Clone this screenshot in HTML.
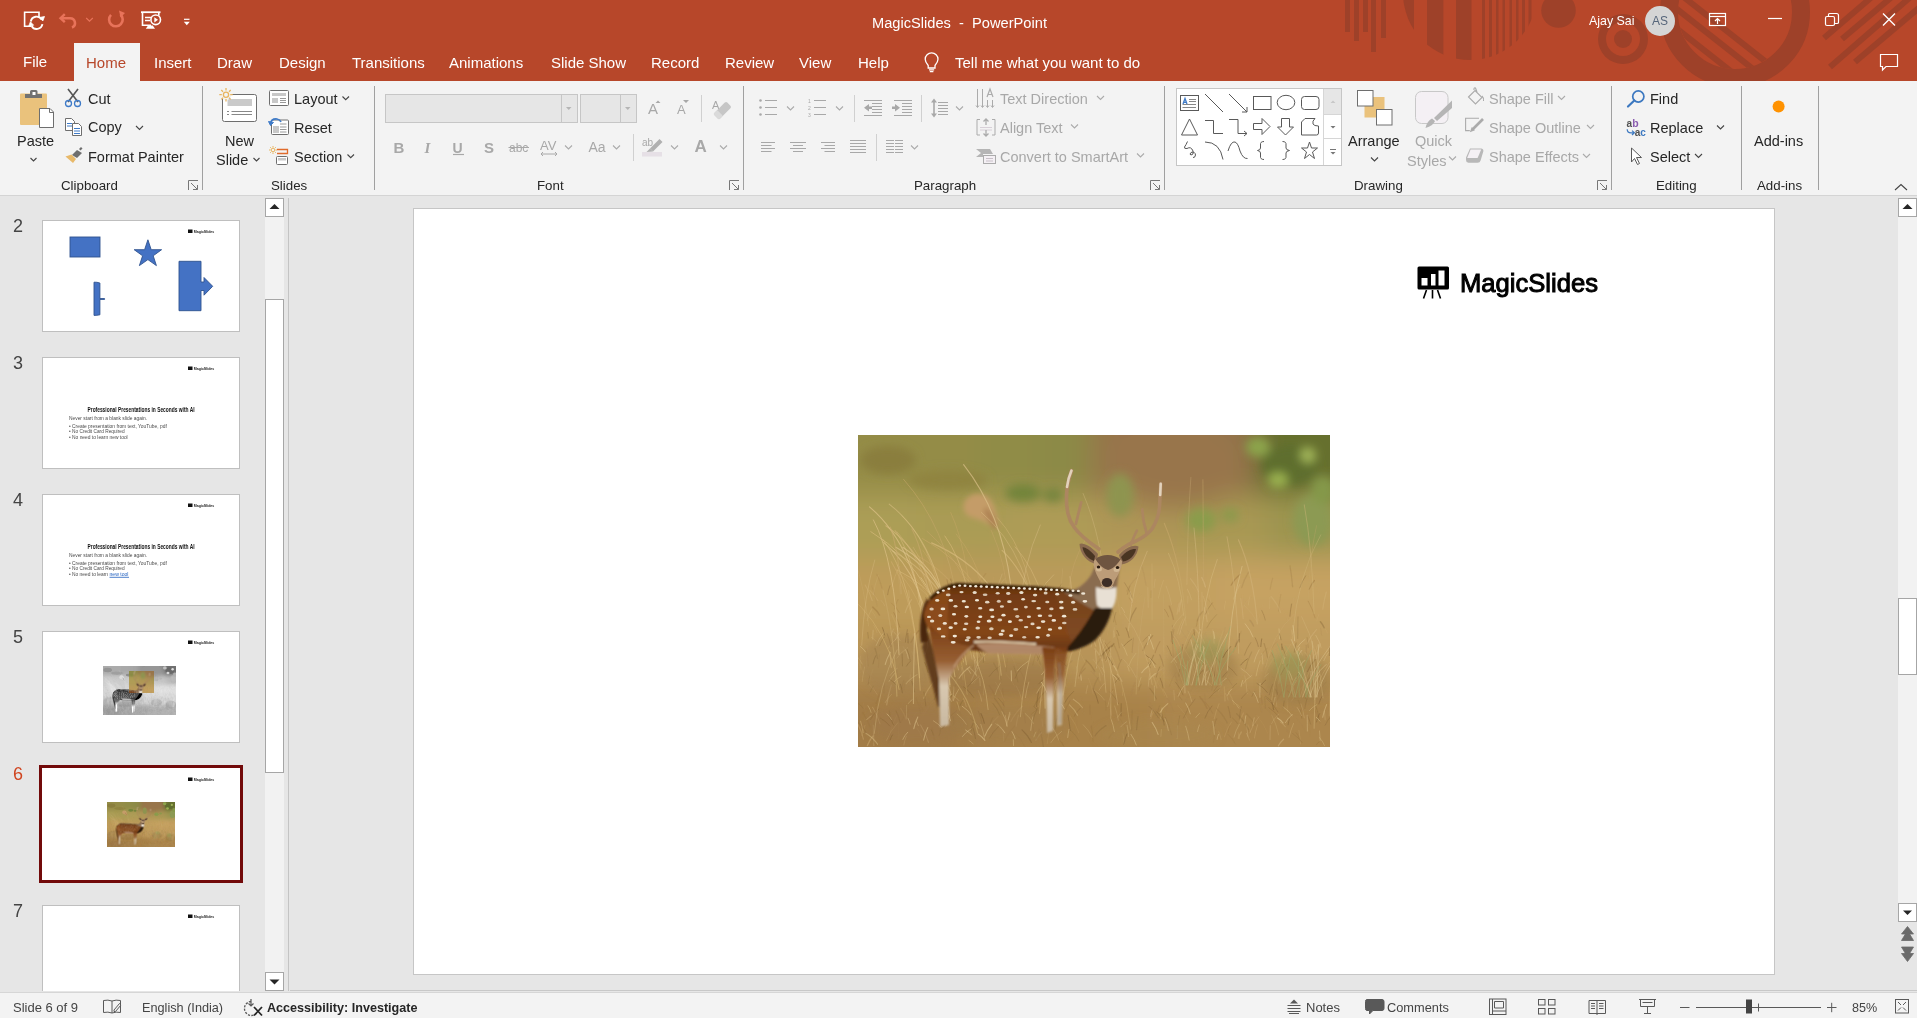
<!DOCTYPE html>
<html><head><meta charset="utf-8">
<style>
*{margin:0;padding:0;box-sizing:border-box}
html,body{width:1917px;height:1018px;overflow:hidden;background:#E6E6E6;font-family:"Liberation Sans",sans-serif;color:#262626}
.a{position:absolute;white-space:nowrap;will-change:transform}
svg.a{overflow:visible}
.t{font-size:15px;line-height:18px}
.w{color:#fff}
.dis{color:#A6A6A6}
.r{font-size:14.5px;line-height:18px;color:#262626}
.l{font-size:13.3px;line-height:16px;color:#262626}
.g{color:#A8A8A8}
</style></head><body>

<!-- TITLE BAR -->
<div class="a" style="left:0;top:0;width:1917px;height:81px;background:#B7472A"></div>
<svg class="a" style="left:0;top:0" width="1917" height="81" viewBox="0 0 1917 81">
 <defs><clipPath id="tb"><rect x="0" y="0" width="1917" height="81"/></clipPath>
 <clipPath id="circA"><circle cx="1470" cy="-7" r="67"/></clipPath>
 <clipPath id="bigin"><circle cx="1735" cy="12" r="57"/></clipPath></defs>
 <g clip-path="url(#tb)" fill="#9E4129">
  <rect x="1345" y="0" width="5" height="32"/>
  <rect x="1354" y="0" width="5" height="41"/>
  <rect x="1363" y="0" width="5" height="32"/>
  <rect x="1371" y="0" width="5" height="52"/>
  <rect x="1381" y="0" width="5" height="38"/>
  <g clip-path="url(#circA)">
   <rect x="1402" y="0" width="12.0" height="70"/>
   <rect x="1427" y="0" width="16.4" height="70"/>
   <rect x="1456" y="0" width="15.5" height="70"/>
   <rect x="1482" y="0" width="3.0" height="70"/>
   <rect x="1489" y="0" width="3.0" height="70"/>
   <rect x="1496" y="0" width="2.5" height="70"/>
   <rect x="1502.5" y="0" width="2.5" height="70"/>
   <rect x="1509.5" y="0" width="2.5" height="70"/>
   <rect x="1516" y="0" width="2.5" height="70"/>
   <rect x="1522" y="0" width="3.0" height="70"/>
   <rect x="1528.5" y="0" width="3.0" height="70"/>
  </g>
  <circle cx="1558.5" cy="10.5" r="17.3"/>
  <circle cx="1623" cy="39" r="25"/>
  <circle cx="1623" cy="39" r="17" fill="#B7472A"/>
  <circle cx="1623" cy="39" r="9"/>
  <circle cx="1735" cy="12" r="66" fill="none" stroke="#9E4129" stroke-width="18"/>
  <g clip-path="url(#bigin)" stroke="#9E4129" stroke-width="6">
   <line x1="1662" y1="-20" x2="1789" y2="80"/>
   <line x1="1640" y1="-20" x2="1767" y2="80"/>
   <line x1="1615" y1="-20" x2="1742" y2="80"/>
  </g>
  <g stroke="#9E4129" stroke-width="6">
   <line x1="1824" y1="38" x2="1880" y2="-10"/>
   <line x1="1842" y1="39" x2="1900" y2="-10"/>
   <line x1="1830" y1="67" x2="1930" y2="-20"/>
   <line x1="1855" y1="62" x2="1940" y2="-10"/>
  </g>
 </g>
</svg>

<!-- QAT -->
<svg class="a" style="left:0;top:0" width="200" height="40" viewBox="0 0 200 40" fill="none" stroke="#fff" stroke-width="1.6">
 <path d="M31 26.2 H24.6 V12.2 H39 V17"/>
 <g stroke-width="1.9">
  <path d="M30.8 21.5 A5.8 5.8 0 0 1 41.6 19.6"/><path d="M42.4 24.2 A5.8 5.8 0 0 1 31.6 26"/>
 </g>
 <path d="M39.5 17.5 L42.8 21 L44.5 16.5Z" fill="#fff" stroke-width="0.8"/>
 <path d="M33.6 25.2 L30.4 21.8 L28.6 26.4Z" fill="#fff" stroke-width="0.8"/>
 <g stroke="#E8735A" stroke-width="2.6">
  <path d="M61.5 18.2 H70 A4.9 4.9 0 0 1 72 27.6"/>
  <path d="M64.8 14.2 L60.5 18.2 L64.8 22.2" stroke-width="2.4"/>
  <path d="M86.2 18 L89.5 21.2 L92.8 18" stroke-width="1.1"/>
  <path d="M120.5 14.5 A6.8 6.8 0 1 1 111 14.8"/>
 </g>
 <path d="M119 10.5 L125 13 L120.5 17.5Z" fill="#E8735A" stroke="none"/>
 <path d="M141 12.2 H160.5" stroke-width="1.8"/>
 <path d="M142.5 12.5 V25.2 H151 M158.8 12.5 V15.5"/>
 <path d="M145 17.5 H151 M145 20.5 H150"/>
 <circle cx="155.7" cy="19.8" r="4.8"/>
 <path d="M154.3 17.2 L158 19.8 L154.3 22.4Z" fill="#fff" stroke="none"/>
 <path d="M148 25.5 L145.8 28.8 H155 L152.8 25.5Z" fill="#fff" stroke="none"/>
 <path d="M184 19.3 H189.5" stroke-width="1.2"/>
 <path d="M183.8 21.8 H189.8 L186.8 25.3Z" fill="#fff" stroke="none"/>
</svg>
<div class="a w" style="left:871.5px;top:13.6px;font-size:14.65px;line-height:18px">MagicSlides&nbsp; -&nbsp; PowerPoint</div>
<div class="a w" style="left:1589px;top:13px;font-size:12.4px;line-height:16px">Ajay Sai</div>
<div class="a" style="left:1645px;top:6px;width:30px;height:30px;border-radius:50%;background:#D5D5D5;color:#56657A;font-size:12px;line-height:30px;text-align:center">AS</div>
<svg class="a" style="left:1700px;top:0" width="217" height="81" viewBox="1700 0 217 81" fill="none" stroke="#fff" stroke-width="1.2">
 <rect x="1709.5" y="13.5" width="16" height="12"/><path d="M1709.5 16.5 H1725.5"/>
 <path d="M1717.5 24 V19 M1715 21 L1717.5 18.5 L1720 21"/>
 <path d="M1768 18.5 H1782"/>
 <rect x="1825.5" y="16.5" width="9" height="9" rx="1.5"/><path d="M1828.5 16.5 V14.5 Q1828.5 13.5 1829.5 13.5 H1836.5 Q1838.5 13.5 1838.5 15.5 V22.5 Q1838.5 23.5 1837 23.5 H1834.5"/>
 <path d="M1883 13.5 L1895 25.5 M1895 13.5 L1883 25.5" stroke-width="1.4"/>
 <path d="M1880.5 54.5 H1897.5 V66.5 H1886 L1882.5 70 V66.5 H1880.5Z"/>
</svg>

<!-- TABS -->
<div class="a" style="left:74px;top:43px;width:66px;height:38px;background:#F3F3F3"></div>
<div class="a t w" style="left:23px;top:53px">File</div>
<div class="a t" style="left:86px;top:54px;color:#B7472A">Home</div>
<div class="a t w" style="left:154px;top:54px">Insert</div>
<div class="a t w" style="left:217px;top:54px">Draw</div>
<div class="a t w" style="left:279px;top:54px">Design</div>
<div class="a t w" style="left:352px;top:54px">Transitions</div>
<div class="a t w" style="left:449px;top:54px">Animations</div>
<div class="a t w" style="left:551px;top:54px">Slide Show</div>
<div class="a t w" style="left:651px;top:54px">Record</div>
<div class="a t w" style="left:725px;top:54px">Review</div>
<div class="a t w" style="left:799px;top:54px">View</div>
<div class="a t w" style="left:858px;top:54px">Help</div>
<svg class="a" style="left:920px;top:50px" width="24" height="26" viewBox="0 0 24 26" fill="none" stroke="#fff" stroke-width="1.3">
 <path d="M8.2 15.5 Q5.2 12 5.2 9.3 A6.4 6.4 0 0 1 18 9.3 Q18 12 15 15.5 V18 H8.2Z"/><path d="M9 19.8 H14.2 M9.8 21.6 H13.4"/>
</svg>
<div class="a t w" style="left:955px;top:54px">Tell me what you want to do</div>

<!-- RIBBON -->
<div class="a" style="left:0;top:81px;width:1917px;height:114px;background:#F3F3F3"></div>
<div class="a" style="left:0;top:195px;width:1917px;height:1px;background:#D4D4D4"></div>

<!-- RIBBON TEXT -->
<div class="a r" style="left:17.4px;top:131.8px">Paste</div>
<div class="a r" style="left:88.3px;top:90px">Cut</div>
<div class="a r" style="left:88.3px;top:118.4px">Copy</div>
<div class="a r" style="left:88.3px;top:148px">Format Painter</div>
<div class="a l" style="left:61.4px;top:178.2px">Clipboard</div>
<div class="a r" style="left:224.7px;top:131.7px">New</div>
<div class="a r" style="left:215.6px;top:151.4px">Slide</div>
<div class="a r" style="left:293.6px;top:90px">Layout</div>
<div class="a r" style="left:293.6px;top:119px">Reset</div>
<div class="a r" style="left:293.6px;top:148px">Section</div>
<div class="a l" style="left:271.3px;top:178.2px">Slides</div>
<div class="a l" style="left:536.5px;top:178.2px">Font</div>
<div class="a l" style="left:913.6px;top:178.2px">Paragraph</div>
<div class="a r g" style="left:1000.3px;top:90px">Text Direction</div>
<div class="a r g" style="left:1000.3px;top:119px">Align Text</div>
<div class="a r g" style="left:1000.3px;top:148px">Convert to SmartArt</div>
<div class="a r" style="left:1348.3px;top:132.3px">Arrange</div>
<div class="a r g" style="left:1414.5px;top:132.4px">Quick</div>
<div class="a r g" style="left:1406.5px;top:152px">Styles</div>
<div class="a r g" style="left:1489.3px;top:90px">Shape Fill</div>
<div class="a r g" style="left:1489.3px;top:119px">Shape Outline</div>
<div class="a r g" style="left:1489.3px;top:148px">Shape Effects</div>
<div class="a l" style="left:1354px;top:178.2px">Drawing</div>
<div class="a r" style="left:1650.4px;top:89.6px">Find</div>
<div class="a r" style="left:1650.4px;top:119.2px">Replace</div>
<div class="a r" style="left:1650.4px;top:147.8px">Select</div>
<div class="a l" style="left:1656.4px;top:178.2px">Editing</div>
<div class="a r" style="left:1754.1px;top:132px">Add-ins</div>
<div class="a l" style="left:1757px;top:178.2px">Add-ins</div>

<!-- RIBBON ICONS -->
<svg class="a" style="left:0;top:0" width="1917" height="200" viewBox="0 0 1917 200" fill="none" stroke-width="1">
 <!-- separators -->
 <g stroke="#A0A0A0">
  <path d="M202.5 86 V190 M374.5 86 V190 M743.5 86 V190 M1164.5 86 V190 M1611.5 86 V190 M1741.5 86 V190 M1818.5 86 V190"/>
 </g>
 <g stroke="#D0D0D0">
  <path d="M701.5 95 V122 M633.5 134 V161 M854.5 95 V122 M921.5 95 V122 M876.5 134 V161"/>
 </g>
 <!-- chevrons -->
 <g stroke="#444" stroke-width="1.1">
  <path d="M30.5 158 L33.5 161 L36.5 158"/>
  <path d="M136 126 L139.5 129.5 L143 126"/>
  <path d="M253.5 158 L256.5 161 L259.5 158"/>
  <path d="M342.5 96.5 L345.7 99.7 L349 96.5"/>
  <path d="M347.5 154.5 L350.7 157.7 L354 154.5"/>
  <path d="M1371 157.5 L1374.5 161 L1378 157.5"/>
  <path d="M1717 125.5 L1720.5 129 L1724 125.5"/>
  <path d="M1695 154 L1698.5 157.5 L1702 154"/>
  <path d="M1895 190 L1901 184.5 L1907 190"/>
 </g>
 <g stroke="#ABABAB" stroke-width="1.1">
  <path d="M565 145.5 L568.5 149 L572 145.5"/>
  <path d="M613 145.5 L616.5 149 L620 145.5"/>
  <path d="M671 145.5 L674.5 149 L678 145.5"/>
  <path d="M720 145.5 L723.5 149 L727 145.5"/>
  <path d="M787 106.5 L790.5 110 L794 106.5"/>
  <path d="M836 106.5 L839.5 110 L843 106.5"/>
  <path d="M956 106.5 L959.5 110 L963 106.5"/>
  <path d="M911 145.5 L914.5 149 L918 145.5"/>
  <path d="M1097 96 L1100.5 99.5 L1104 96"/>
  <path d="M1071 124.5 L1074.5 128 L1078 124.5"/>
  <path d="M1137 153.5 L1140.5 157 L1144 153.5"/>
  <path d="M1449 156.5 L1452.5 160 L1456 156.5"/>
  <path d="M1558 96 L1561.5 99.5 L1565 96"/>
  <path d="M1587 125 L1590.5 128.5 L1594 125"/>
  <path d="M1583 154 L1586.5 157.5 L1590 154"/>
 </g>
 <!-- dialog launchers -->
 <g stroke="#777" stroke-width="1">
  <path d="M188.5 190 V180.5 H198 M191 183 L197.5 189.5 M197.5 185 V189.5 H193"/>
  <path d="M729.5 190 V180.5 H739 M732 183 L738.5 189.5 M738.5 185 V189.5 H734"/>
  <path d="M1150.5 190 V180.5 H1160 M1153 183 L1159.5 189.5 M1159.5 185 V189.5 H1155"/>
  <path d="M1597.5 190 V180.5 H1607 M1600 183 L1606.5 189.5 M1606.5 185 V189.5 H1602"/>
 </g>
 <!-- Paste -->
 <rect x="20" y="93.5" width="27" height="31.5" rx="1" fill="#EAC27C"/>
 <path d="M25 98 V94 H30 V91.5 Q30 90 31.5 90 H36 Q37.5 90 37.5 91.5 V94 H42 V98 Z" fill="#727272"/>
 <rect x="32.5" y="92" width="3" height="3" fill="#fff"/>
 <path d="M39.5 108.5 H50 L53.5 112 V127.5 H39.5 Z" fill="#fff" stroke="#6E6E6E"/>
 <path d="M49.5 108.5 V112.5 H53.5" stroke="#6E6E6E"/>
 <!-- Cut -->
 <path d="M68 89 L78 102 M78 89 L68 102" stroke="#555" stroke-width="1.6"/>
 <circle cx="68.5" cy="103.5" r="3" stroke="#3F7BC8" stroke-width="1.3"/>
 <circle cx="77.5" cy="103.5" r="3" stroke="#3F7BC8" stroke-width="1.3"/>
 <!-- Copy -->
 <path d="M65.5 118.5 H71.5 L74.5 121.5 V130.5 H65.5 Z" fill="#fff" stroke="#6E6E6E"/>
 <path d="M72.5 123.5 H78.5 L81.5 126.5 V135.5 H72.5 Z" fill="#fff" stroke="#6E6E6E"/>
 <path d="M67 123.5 H72 M67 126 H72" stroke="#3F7BC8"/>
 <path d="M74 128.5 H80 M74 131 H80 M74 133.5 H80" stroke="#3F7BC8"/>
 <!-- Format painter -->
 <path d="M72 155 L77 150 L82 153 L77 158 Z" fill="#6E6E6E"/>
 <path d="M79 149 L81 147 L82.5 148.5 L80.5 150.5Z" fill="#6E6E6E"/>
 <path d="M65.5 156.5 L71.5 154.5 L76 159 L73 163 Z" fill="#E8B96A"/>
 <!-- New slide -->
 <rect x="222.5" y="94.5" width="34" height="27" rx="2" fill="#fff" stroke="#6E6E6E"/>
 <rect x="227.5" y="99" width="24.5" height="7" fill="#CACACA"/>
 <path d="M227 111.5 H229 M231.5 111.5 H252 M227 114.5 H229 M231.5 114.5 H252" stroke="#888"/>
 <circle cx="226" cy="94.7" r="5.5" fill="#F3F3F3"/>
 <g stroke="#E8B55F" stroke-width="1.3"><circle cx="226" cy="94.7" r="2.6"/><path d="M226 88 V90.5 M226 99 V101.5 M219.3 94.7 H221.8 M230.2 94.7 H232.7 M221.3 90 L223 91.7 M229 97.7 L230.7 99.4 M230.7 90 L229 91.7 M223 97.7 L221.3 99.4"/></g>
 <!-- Layout -->
 <rect x="269.5" y="90.5" width="19" height="15" rx="1" fill="#fff" stroke="#6E6E6E"/>
 <rect x="272" y="93" width="14" height="3" fill="#C8C8C8"/>
 <rect x="272" y="98" width="6" height="5" fill="#C8C8C8"/>
 <path d="M280 98.5 H286 M280 100.5 H286 M280 102.5 H286" stroke="#999"/>
 <!-- Reset -->
 <rect x="271.5" y="120" width="17" height="14.5" rx="1" fill="#fff" stroke="#6E6E6E"/>
 <rect x="273" y="126" width="6" height="7" fill="#C8C8C8"/>
 <path d="M280 127 H286.5 M280 129.5 H286.5 M280 132 H286.5 M280 124 H286.5" stroke="#999"/>
 <path d="M270.5 124 Q271 118.5 277 119 Q280 119.5 281 122" stroke="#3F7BC8" stroke-width="1.7"/>
 <path d="M268.5 121.5 L270.5 125.5 L273.5 122.5Z" fill="#3F7BC8" stroke="#3F7BC8"/>
 <!-- Section -->
 <path d="M277 149.5 H287.5 V153.5 H277" stroke="#E06B2C" stroke-width="1.3"/>
 <rect x="276.5" y="156.5" width="11" height="8" rx="1" fill="#fff" stroke="#6E6E6E"/>
 <rect x="278" y="158" width="8" height="2.5" fill="#C8C8C8"/>
 <g stroke="#E8B55F" stroke-width="1"><circle cx="273" cy="150" r="1.8"/><path d="M273 146 V147.5 M273 152.5 V154 M269 150 H270.5 M275.5 150 H277 M270.2 147.2 L271.2 148.2 M274.8 151.8 L275.8 152.8 M275.8 147.2 L274.8 148.2 M271.2 151.8 L270.2 152.8"/></g>
 <!-- Font combos -->
 <rect x="385.5" y="94.5" width="192" height="28" fill="#E6E6E6" stroke="#C6C6C6"/>
 <path d="M561.5 95 V122" stroke="#C6C6C6"/>
 <path d="M566 107 H571.5 L568.75 110Z" fill="#B5B5B5"/>
 <rect x="580.5" y="94.5" width="56" height="28" fill="#E6E6E6" stroke="#C6C6C6"/>
 <path d="M620.5 95 V122" stroke="#C6C6C6"/>
 <path d="M625 107 H630.5 L627.75 110Z" fill="#B5B5B5"/>
 <!-- paragraph icons -->
 <g stroke="#A8A8A8" stroke-width="1.2">
  <path d="M765 100.5 H777 M765 107.5 H777 M765 114.5 H777"/>
  <path d="M814 100.5 H826 M814 107.5 H826 M814 114.5 H826"/>
  <path d="M864 100.5 H882 M864 115.5 H882 M872 103.5 H882 M872 106.5 H882 M872 109.5 H882 M872 112.5 H882"/>
  <path d="M894 100.5 H912 M894 115.5 H912 M902 103.5 H912 M902 106.5 H912 M902 109.5 H912 M902 112.5 H912"/>
  <path d="M938 102.5 H948 M938 105.5 H948 M938 108.5 H948 M938 111.5 H948 M938 114.5 H948"/>
  <path d="M761 142.5 H775 M761 145.5 H771.5 M761 148.5 H775 M761 151.5 H771.5"/>
  <path d="M790 142.5 H806 M793 145.5 H803 M790 148.5 H806 M793 151.5 H803"/>
  <path d="M821 142.5 H835 M824.5 145.5 H835 M821 148.5 H835 M824.5 151.5 H835"/>
  <path d="M850 140.5 H866 M850 143.5 H866 M850 146.5 H866 M850 149.5 H866 M850 152.5 H866"/>
  <path d="M886 140.5 H894 M886 143.5 H894 M886 146.5 H894 M886 149.5 H894 M886 152.5 H894 M895 140.5 H903 M895 143.5 H903 M895 146.5 H903 M895 149.5 H903 M895 152.5 H903"/>
 </g>
 <g fill="#A8A8A8">
  <circle cx="760.5" cy="100.5" r="1.3"/><circle cx="760.5" cy="107.5" r="1.3"/><circle cx="760.5" cy="114.5" r="1.3"/>
  <path d="M864 107.8 L869 104 V106.5 H872 V109 H869 V111.5Z"/>
  <path d="M900 107.8 L895 104 V106.5 H892 V109 H895 V111.5Z"/>
  <path d="M934 98.5 L931 102.5 H933.2 V113.5 H931 L934 117.5 L937 113.5 H934.8 V102.5 H937Z"/>
 </g>
 <text x="808" y="103" font-size="5" fill="#A8A8A8" font-family="Liberation Sans">1</text>
 <text x="808" y="110" font-size="5" fill="#A8A8A8" font-family="Liberation Sans">2</text>
 <text x="808" y="117" font-size="5" fill="#A8A8A8" font-family="Liberation Sans">3</text>
 <!-- font icons text -->
 <g fill="#A8A8A8" font-family="Liberation Sans">
  <text x="393.5" y="153" font-size="15" font-weight="bold">B</text>
  <text x="424.5" y="153" font-size="15" font-weight="bold" font-style="italic" font-family="Liberation Serif">I</text>
  <text x="452.5" y="153" font-size="14" font-weight="bold">U</text>
  <text x="484" y="153" font-size="15" font-weight="bold">S</text>
  <text x="509" y="152" font-size="12">abc</text>
  <text x="540" y="150" font-size="13">AV</text>
  <text x="588.5" y="152" font-size="14">Aa</text>
  <text x="648" y="114" font-size="15">A</text>
  <text x="677" y="114" font-size="13">A</text>
  <text x="694.5" y="151.5" font-size="17" font-weight="bold">A</text>
  <text x="712" y="109" font-size="11">A</text>
  <text x="642" y="146" font-size="10">ab</text>
 </g>
 <path d="M453 154.5 H464" stroke="#A8A8A8" stroke-width="1.2"/>
 <path d="M508.5 147.5 H529" stroke="#A8A8A8" stroke-width="1"/>
 <path d="M541 154 H557 M543 152 L541 154 L543 156 M555 152 L557 154 L555 156" stroke="#A8A8A8"/>
 <path d="M658 100.5 L655.5 103 H660.5Z M683 100 L686 103 L689 100Z" fill="#A8A8A8"/>
 <g transform="rotate(45 722.5 110.5)"><rect x="718.5" y="101.5" width="8" height="18" rx="1.8" fill="#C6C6C6"/><rect x="718.5" y="114" width="8" height="5.5" rx="1" fill="#DADADA"/></g>
 <path d="M650 148.5 L659.5 139 L662.5 142 L653 151.5Z" fill="#B0B0B0"/><path d="M646.5 152 L650 148.5 L653 151.5Z" fill="#B0B0B0"/>
 <rect x="642" y="152" width="20" height="4.5" fill="#E6E0E6"/>
 <!-- Text direction / align text / smartart icons -->
 <g stroke="#ABABAB" stroke-width="1">
  <path d="M977.5 89 V107 M982.5 89 V107 M987.5 100 V107 M992.5 100 V107 M976 105.5 L977.5 107.5 L979 105.5 M981 105.5 L982.5 107.5 L984 105.5 M986 105.5 L987.5 107.5 L989 105.5 M991 105.5 L992.5 107.5 L994 105.5"/>
  <path d="M987 97 L990 89 L993 97 M988 94.5 H992" stroke-width="1.2"/>
  <path d="M980 119.5 H977 V135 H980 M992 119.5 H995 V135 H992" />
  <path d="M980 127.5 H992 M980 130 H992" stroke="#D8D0D8"/>
  <path d="M986 119 V125 M983.5 121.5 L986 119 L988.5 121.5 M986 136 V130 M983.5 133.5 L986 136 L988.5 133.5" stroke-width="1.3"/>
  <rect x="983.5" y="155.5" width="12" height="8" fill="#F4F0F4"/>
  <path d="M986 158.5 H993 M986 161 H993" stroke="#C8C0C8"/>
 </g>
 <path d="M976 149 H990 L993 154 H983 V157 H976 L981 153Z" fill="#B5B5B5"/>
 <!-- Shapes gallery -->
 <rect x="1176.5" y="88.5" width="165" height="77" fill="#fff" stroke="#C6C6C6"/>
 <rect x="1324" y="89" width="17" height="25.5" fill="#E6E6E6"/>
 <path d="M1323.5 89 V165 M1324 114.5 H1341 M1324 138.5 H1341" stroke="#D6D6D6"/>
 <path d="M1330.5 103 H1335.5 L1333 100.5Z" fill="#C8C8C8"/>
 <path d="M1330.5 126 H1335.5 L1333 128.5Z" fill="#777"/>
 <path d="M1330 149.5 H1336" stroke="#777"/><path d="M1330.5 152 H1335.5 L1333 154.5Z" fill="#777"/>
 <g stroke="#595959" stroke-width="1">
  <rect x="1180.5" y="95.5" width="18" height="15"/>
  <path d="M1189 99.5 H1196 M1189 101.5 H1196 M1182.5 104.5 H1196 M1182.5 107.5 H1196" stroke="#888"/>
  <path d="M1205 94 L1223 112"/>
  <path d="M1229 94 L1247 112 M1247 107 V112 H1242"/>
  <rect x="1253.5" y="96.5" width="17.5" height="13"/>
  <ellipse cx="1286" cy="102.5" rx="8.8" ry="7.2"/>
  <rect x="1301.5" y="96.5" width="17.5" height="13" rx="3"/>
  <path d="M1189.5 119 L1197.5 135 H1181.5Z"/>
  <path d="M1205 120.5 H1213.5 V133.5 H1223"/>
  <path d="M1229 119.5 H1238 V133.5 H1247 M1244 131 L1247 133.5 L1244 136"/>
  <path d="M1253.5 123.5 H1262 V118.5 L1270 126.5 L1262 134.5 V129.5 H1253.5Z"/>
  <path d="M1281.5 118.5 H1289.5 V127 H1293.5 L1285.5 135 L1277.5 127 H1281.5Z"/>
  <path d="M1305 118.5 H1315 Q1312 121 1313 124 Q1314 126 1318.5 126 V133 Q1318.5 135 1316.5 135 H1301.5 V122Z"/>
  <path d="M1187.5 141.5 Q1186 145 1184.5 147 Q1184 149 1187 148.5 Q1191 146 1193 151 Q1194 155 1191 155 Q1189 154.5 1191 152.5 Q1195 151 1195.5 155 Q1195 158 1193 157.5"/>
  <path d="M1205 142 Q1220 142 1223 159.5"/>
  <path d="M1228 151 Q1231 141 1235 142 Q1238 143 1240 151 Q1243 159 1247.5 158.5"/>
  <path d="M1264 141.5 Q1260 141.5 1260.5 145 V148 Q1260.5 150 1257.5 150.5 Q1260.5 151 1260.5 153 V156 Q1260 159.5 1264 159.5"/>
  <path d="M1282.5 141.5 Q1286.5 141.5 1286 145 V148 Q1286 150 1289.5 150.5 Q1286 151 1286 153 V156 Q1286.5 159.5 1282.5 159.5"/>
  <path d="M1309.5 142 L1311.5 148 H1317.5 L1312.5 152 L1314.5 158.5 L1309.5 154.5 L1304.5 158.5 L1306.5 152 L1301.5 148 H1307.5Z"/>
 </g>
 <path d="M1183 104 L1185 98.5 L1187 104 M1183.8 102.3 H1186.3" stroke="#3F7BC8" stroke-width="1.3"/>
 <!-- Arrange -->
 <rect x="1364.5" y="97" width="20" height="20.5" fill="#EAC27C"/>
 <rect x="1357.5" y="90.5" width="15.5" height="15.5" fill="#fff" stroke="#6E6E6E"/>
 <rect x="1376.5" y="109.5" width="15.5" height="15.5" fill="#fff" stroke="#6E6E6E"/>
 <!-- Quick styles -->
 <rect x="1415.5" y="91.5" width="32.5" height="32" rx="6" fill="#F4F0F4" stroke="#C8C8C8"/>
 <path d="M1425.5 128 Q1427 121 1432 118.5 L1435 121 Q1433 126 1425.5 128Z" fill="#B5B5B5"/>
 <path d="M1434 118 L1452 100.5 V108 L1437 121Z" fill="#B5B5B5"/>
 <!-- Shape fill / outline / effects icons -->
 <g stroke="#ABABAB" stroke-width="1.1">
  <path d="M1468.5 97 L1475 90.5 L1482 97.5 L1475.5 104 Z M1474 90 Q1473.5 87.5 1475.5 88 L1477 92"/>
  <path d="M1482 96 Q1484 98 1483.5 101" />
  <path d="M1479 118.2 H1465.6 V130.6 H1469.8" />
  <path d="M1473 129 L1483 119" stroke-width="2.6"/>
  <path d="M1470.8 131.2 L1472 128 L1474 130Z" fill="#ABABAB"/>
 </g>
 <path d="M1470 148.5 H1481.5 Q1483.8 149 1483.3 151.5 L1480.6 160.6 Q1480 162.8 1477.6 162.8 H1468.4 Q1466 162.5 1466 160 V157.6Z" fill="#B8B8B8"/>
 <path d="M1470.6 149.6 H1481.2 L1477.6 158 H1467.2Z" fill="#F4F0F4"/>
 <!-- Find -->
 <circle cx="1638.3" cy="96.5" r="5.6" stroke="#3C78C0" stroke-width="1.7"/>
 <path d="M1634.3 100.5 L1628 106.5" stroke="#3C78C0" stroke-width="2.2" stroke-linecap="round"/>
 <!-- Replace -->
 <text x="1626.6" y="127" font-size="10" font-weight="bold" fill="#505050" font-family="Liberation Sans">a</text>
 <text x="1632.2" y="127" font-size="10.5" font-weight="bold" fill="#8A5CB0" font-family="Liberation Sans">b</text>
 <text x="1634.8" y="135.6" font-size="10" font-weight="bold" fill="#505050" font-family="Liberation Sans">a</text>
 <text x="1640.2" y="135.6" font-size="10" font-weight="bold" fill="#3C78C0" font-family="Liberation Sans">c</text>
 <path d="M1627.2 129.2 Q1627.2 132.8 1631 132.8 H1634.2 M1632 130.6 L1634.4 132.8 L1632 135" stroke="#3C78C0" stroke-width="1.2"/>
 <!-- Select -->
 <path d="M1631.5 148 V162 L1634.5 158.5 L1637.5 164.5 L1639.5 163.5 L1636.5 157.5 H1641.5Z" fill="#fff" stroke="#595959"/>
 <!-- Add-ins dot -->
 <circle cx="1778.6" cy="106.5" r="6" fill="#FF9200"/>
</svg>

<!-- MAIN AREA -->
<div class="a" style="left:288px;top:198px;width:1px;height:793px;background:#C4C4C4"></div>
<div class="a" style="left:290px;top:990px;width:1627px;height:1px;background:#C8C8C8"></div>
<!-- left scrollbar -->
<div class="a" style="left:265px;top:216px;width:19px;height:757px;background:#F2F2F2"></div>
<div class="a" style="left:265px;top:198px;width:19px;height:19px;background:#fff;border:1px solid #A6A6A6"></div>
<svg class="a" style="left:265px;top:198px" width="19" height="19"><path d="M4.5 11 L9.5 6 L14.5 11Z" fill="#262626"/></svg>
<div class="a" style="left:265px;top:299px;width:19px;height:474px;background:#fff;border:1px solid #A6A6A6"></div>
<div class="a" style="left:265px;top:972px;width:19px;height:19px;background:#fff;border:1px solid #A6A6A6"></div>
<svg class="a" style="left:265px;top:972px" width="19" height="19"><path d="M4.5 7.5 L9.5 12.5 L14.5 7.5Z" fill="#262626"/></svg>
<!-- right scrollbar -->
<div class="a" style="left:1898px;top:216px;width:19px;height:688px;background:#F2F2F2"></div>
<div class="a" style="left:1898px;top:198px;width:19px;height:19px;background:#fff;border:1px solid #A6A6A6"></div>
<svg class="a" style="left:1898px;top:198px" width="19" height="19"><path d="M4.5 11 L9.5 6 L14.5 11Z" fill="#262626"/></svg>
<div class="a" style="left:1898px;top:598px;width:19px;height:77px;background:#fff;border:1px solid #A6A6A6"></div>
<div class="a" style="left:1898px;top:903px;width:19px;height:19px;background:#fff;border:1px solid #A6A6A6"></div>
<svg class="a" style="left:1898px;top:903px" width="19" height="19"><path d="M5 7.5 L9.5 12 L14 7.5Z" fill="#262626"/></svg>
<svg class="a" style="left:1898px;top:924px" width="19" height="40" viewBox="1898 924 19 40" fill="#6A6A6A" stroke="#6A6A6A" stroke-width="0.8" stroke-linejoin="round">
 <path d="M1907.5 926.5 L1913.5 934 H1901.5Z M1907.5 930.5 L1913.5 940.5 H1901.5Z"/>
 <path d="M1901.5 947 H1913.5 L1907.5 957Z M1901.5 953.5 H1913.5 L1907.5 961.5Z"/>
</svg>

<!-- thumbnails -->
<div class="a" style="left:13px;top:216px;font-size:18px;line-height:20px;color:#444">2</div>
<div class="a" style="left:13px;top:353px;font-size:18px;line-height:20px;color:#444">3</div>
<div class="a" style="left:13px;top:490px;font-size:18px;line-height:20px;color:#444">4</div>
<div class="a" style="left:13px;top:627px;font-size:18px;line-height:20px;color:#444">5</div>
<div class="a" style="left:13px;top:764px;font-size:18px;line-height:20px;color:#D0441F">6</div>
<div class="a" style="left:13px;top:901px;font-size:18px;line-height:20px;color:#444">7</div>

<div class="a" style="left:42px;top:220px;width:198px;height:112px;background:#fff;border:1px solid #BFBFBF"></div>
<div class="a" style="left:42px;top:357px;width:198px;height:112px;background:#fff;border:1px solid #BFBFBF"></div>
<div class="a" style="left:42px;top:494px;width:198px;height:112px;background:#fff;border:1px solid #BFBFBF"></div>
<div class="a" style="left:42px;top:631px;width:198px;height:112px;background:#fff;border:1px solid #BFBFBF"></div>
<div class="a" style="left:39px;top:765px;width:204px;height:118px;background:#fff;border:3px solid #720A0A"></div>
<div class="a" style="left:42px;top:905px;width:198px;height:86px;background:#fff;border:1px solid #BFBFBF;border-bottom:none"></div>

<!-- thumb logos -->
<svg class="a" style="left:0;top:0" width="260" height="1000" viewBox="0 0 260 1000">
 <defs>
  <g id="mlogo">
   <rect x="0" y="0" width="4.5" height="3.5" fill="#111"/>
   <text x="5.8" y="3.6" font-size="4.2" font-weight="bold" fill="#222" font-family="Liberation Sans" textLength="20.5" lengthAdjust="spacingAndGlyphs">MagicSlides</text>
  </g>
 </defs>
 <use href="#mlogo" x="188" y="229.5"/>
 <use href="#mlogo" x="188" y="366.5"/>
 <use href="#mlogo" x="188" y="503.5"/>
 <use href="#mlogo" x="188" y="640.5"/>
 <use href="#mlogo" x="188" y="777.5"/>
 <use href="#mlogo" x="188" y="914.5"/>
 <!-- slide 2 shapes -->
 <g fill="#4472C4" stroke="#2F528F" stroke-width="0.9">
  <rect x="70" y="237" width="30" height="20"/>
  <path d="M147.9 239.8 L151.2 249.7 H161.6 L153.2 255.8 L156.4 265.6 L147.9 259.6 L139.4 265.6 L142.6 255.8 L134.2 249.7 H144.6Z"/>
  <path d="M179 261.3 H201 V282 H204 V277.5 L212.7 286.3 L204 295.2 V290.5 H201 V310.7 H179Z"/>
  <path d="M94 282.2 Q97 282 99.9 283 V298.6 H104.6 V299.4 H99.9 V314.8 Q97 315.4 94 315.4Z"/>
 </g>
 <!-- slide 3 & 4 text -->
 <g font-family="Liberation Sans">
  <text x="87.5" y="411.8" font-size="7" font-weight="bold" fill="#111" textLength="107" lengthAdjust="spacingAndGlyphs">Professional Presentations in Seconds with AI</text>
  <text x="69" y="420" font-size="4.6" fill="#4A4A4A" textLength="78" lengthAdjust="spacingAndGlyphs">Never start from a blank slide again.</text>
  <text x="69" y="428.3" font-size="4.6" fill="#4A4A4A" textLength="97.8" lengthAdjust="spacingAndGlyphs">• Create presentation from text, YouTube, pdf</text>
  <text x="69" y="433.3" font-size="4.6" fill="#4A4A4A" textLength="55.6" lengthAdjust="spacingAndGlyphs">• No Credit Card Required</text>
  <text x="69" y="438.8" font-size="4.6" fill="#4A4A4A" textLength="58.7" lengthAdjust="spacingAndGlyphs">• No need to learn new tool</text>

  <text x="87.5" y="548.8" font-size="7" font-weight="bold" fill="#111" textLength="107" lengthAdjust="spacingAndGlyphs">Professional Presentations in Seconds with AI</text>
  <text x="69" y="557" font-size="4.6" fill="#4A4A4A" textLength="78" lengthAdjust="spacingAndGlyphs">Never start from a blank slide again.</text>
  <text x="69" y="565.3" font-size="4.6" fill="#4A4A4A" textLength="97.8" lengthAdjust="spacingAndGlyphs">• Create presentation from text, YouTube, pdf</text>
  <text x="69" y="570.3" font-size="4.6" fill="#4A4A4A" textLength="55.6" lengthAdjust="spacingAndGlyphs">• No Credit Card Required</text>
  <text x="69" y="575.8" font-size="4.6" fill="#4A4A4A" textLength="39" lengthAdjust="spacingAndGlyphs">• No need to learn</text>
  <text x="109.5" y="575.8" font-size="4.6" fill="#1F5FBF" textLength="19" lengthAdjust="spacingAndGlyphs">new tool</text>
  <path d="M109.5 577.3 H129" stroke="#1F5FBF" stroke-width="0.8"/>
 </g>
</svg>

<!-- SLIDE CANVAS -->
<div class="a" style="left:413px;top:208px;width:1362px;height:767px;background:#fff;border:1px solid #C6C6C6"></div>
<svg class="a" style="left:1417px;top:266px" width="34" height="34" viewBox="0 0 34 34">
 <rect x="0.5" y="0.5" width="31.5" height="23" rx="1.5" fill="#000"/>
 <rect x="4.5" y="12" width="6" height="7.5" fill="#fff"/>
 <rect x="14" y="8" width="4.5" height="11.5" fill="#fff"/>
 <rect x="21.5" y="4.5" width="6" height="15" fill="#fff"/>
 <path d="M9.5 24 L6.5 32.5 M15.5 24 V32.5 M20.5 24 L23.5 32.5" stroke="#000" stroke-width="1.6"/>
</svg>
<div class="a" style="left:1459.5px;top:267.6px;font-size:25.6px;line-height:30px;color:#000;-webkit-text-stroke:1px #000">MagicSlides</div>

<!-- DEER START -->
<svg class="a" style="left:858px;top:435px" width="472" height="312" viewBox="0 0 472 312">
<defs>
<filter id="bl1" x="-20%" y="-20%" width="140%" height="140%"><feGaussianBlur stdDeviation="14"/></filter>
<filter id="bl2" x="-20%" y="-20%" width="140%" height="140%"><feGaussianBlur stdDeviation="5"/></filter>
<filter id="bl3"><feGaussianBlur stdDeviation="0.6"/></filter>
<filter id="bl6" x="-50%" y="-50%" width="200%" height="200%"><feGaussianBlur stdDeviation="2.6"/></filter>
<filter id="bl5"><feGaussianBlur stdDeviation="0.85"/></filter>
<filter id="bl4"><feGaussianBlur stdDeviation="1.2"/></filter>
<clipPath id="pc"><rect width="472" height="312"/></clipPath>
<linearGradient id="bodyg" x1="0" y1="0" x2="0" y2="1"><stop offset="0" stop-color="#4E260A"/><stop offset="0.3" stop-color="#723A12"/><stop offset="0.75" stop-color="#84461A"/><stop offset="1" stop-color="#603212"/></linearGradient>
<linearGradient id="legg" x1="0" y1="0" x2="0" y2="1"><stop offset="0" stop-color="#7A3E14"/><stop offset="0.35" stop-color="#965E32"/><stop offset="0.6" stop-color="#D8C8B0"/><stop offset="1" stop-color="#C8B8A0"/></linearGradient>
</defs>
<g id="deerimg" clip-path="url(#pc)">
<rect width="472" height="312" fill="#B39858"/>
<g filter="url(#bl1)">
<rect x="-42" y="-40" width="162" height="104" fill="#948C46"/>
<rect x="116" y="-40" width="66" height="104" fill="#908C46"/>
<rect x="178" y="-40" width="60" height="104" fill="#8C8A46"/>
<rect x="234" y="-40" width="68" height="104" fill="#967248"/>
<rect x="298" y="-40" width="64" height="104" fill="#98724A"/>
<rect x="358" y="-40" width="44" height="104" fill="#907248"/>
<rect x="398" y="-40" width="124" height="104" fill="#66702E"/>
<rect x="-42" y="60" width="104" height="66" fill="#AC9E56"/>
<rect x="58" y="60" width="94" height="66" fill="#AA9C54"/>
<rect x="148" y="60" width="90" height="66" fill="#AE9C56"/>
<rect x="234" y="60" width="98" height="66" fill="#AE9656"/>
<rect x="328" y="60" width="87" height="66" fill="#A89852"/>
<rect x="411" y="60" width="111" height="66" fill="#9C9450"/>
<rect x="-42" y="122" width="144" height="66" fill="#BE9C5A"/>
<rect x="98" y="122" width="154" height="66" fill="#BA9A5A"/>
<rect x="248" y="122" width="114" height="66" fill="#C2A060"/>
<rect x="358" y="122" width="164" height="66" fill="#C6A262"/>
<rect x="-42" y="184" width="164" height="66" fill="#BA9658"/>
<rect x="118" y="184" width="144" height="66" fill="#B89458"/>
<rect x="258" y="184" width="264" height="66" fill="#C09C5E"/>
<rect x="-42" y="246" width="164" height="116" fill="#A27C46"/>
<rect x="118" y="246" width="184" height="116" fill="#A8824A"/>
<rect x="298" y="246" width="224" height="116" fill="#AC864E"/>
<ellipse cx="318" cy="28" rx="78" ry="46" fill="#98744C"/>
</g>
<g filter="url(#bl2)">
<ellipse cx="165" cy="58" rx="18" ry="9" fill="#72843A"/>
<ellipse cx="195" cy="60" rx="10" ry="7" fill="#74843C"/>
<ellipse cx="262" cy="60" rx="14" ry="22" fill="#8E9450"/>
<ellipse cx="343" cy="85" rx="15" ry="12" fill="#8A9C4C"/>
<ellipse cx="372" cy="80" rx="9" ry="7" fill="#8C9A4C"/>
<ellipse cx="455" cy="85" rx="20" ry="26" fill="#8C9A52"/>
<ellipse cx="432" cy="30" rx="28" ry="20" fill="#5E6E2E"/>
<ellipse cx="400" cy="12" rx="12" ry="10" fill="#8CA44C"/>
<ellipse cx="465" cy="55" rx="12" ry="14" fill="#84984A"/>
<ellipse cx="30" cy="25" rx="28" ry="14" fill="#8A7E3C"/>
<ellipse cx="90" cy="45" rx="40" ry="10" fill="#908440"/>
<ellipse cx="420" cy="45" rx="10" ry="8" fill="#9AB050"/>
<ellipse cx="450" cy="20" rx="8" ry="8" fill="#A0B458"/>
</g>
<g filter="url(#bl6)"><path d="M106 68 C110 58 124 56 131 63 C137 70 139 80 141 91 L137 94 C131 88 123 85 115 83 C108 81 104 76 106 68Z" fill="#C49C68"/><path d="M128 72 C134 78 138 86 140 92 L136 94 C132 88 128 82 126 76Z" fill="#9A6A40" opacity="0.6"/></g>
<g filter="url(#bl3)" stroke-linecap="round" fill="none">
<path d="M152.8 174.4 q-2.8 -6.8 -9.2 -13.6" stroke="#DCC08C" stroke-width="1.1" opacity="0.22"/>
<path d="M429.4 184.8 q-0.3 -3.7 -0.8 -7.3" stroke="#C8A468" stroke-width="0.9" opacity="0.22"/>
<path d="M390.3 170.1 q0.5 -4.7 1.7 -9.4" stroke="#D4B47A" stroke-width="0.9" opacity="0.34"/>
<path d="M460.8 157.5 q-1.7 -9.4 -5.7 -18.9" stroke="#C8A468" stroke-width="1.1" opacity="0.34"/>
<path d="M264.4 260.5 q0.2 -3.8 0.8 -7.6" stroke="#C8A468" stroke-width="1.0" opacity="0.29"/>
<path d="M29.6 159.7 q0.7 -4.5 2.3 -9.0" stroke="#8A6A3A" stroke-width="1.0" opacity="0.39"/>
<path d="M435.9 208.6 q-1.3 -4.5 -4.3 -9.0" stroke="#C8A468" stroke-width="0.8" opacity="0.22"/>
<path d="M233.7 205.6 q0.6 -6.5 2.0 -13.0" stroke="#D4B47A" stroke-width="0.9" opacity="0.23"/>
<path d="M357.4 174.6 q-2.5 -5.5 -8.3 -11.0" stroke="#A88450" stroke-width="1.0" opacity="0.22"/>
<path d="M372.5 282.6 q-0.7 -5.6 -2.4 -11.2" stroke="#8A6A3A" stroke-width="1.0" opacity="0.34"/>
<path d="M396.5 303.0 q0.9 -6.6 3.1 -13.2" stroke="#D4B47A" stroke-width="0.8" opacity="0.38"/>
<path d="M272.8 260.4 q1.2 -6.3 3.9 -12.5" stroke="#A88450" stroke-width="1.4" opacity="0.29"/>
<path d="M167.8 249.0 q-1.6 -6.4 -5.3 -12.8" stroke="#9A7440" stroke-width="0.8" opacity="0.23"/>
<path d="M184.5 291.2 q-0.2 -3.6 -0.5 -7.3" stroke="#DCC08C" stroke-width="0.7" opacity="0.27"/>
<path d="M203.2 239.1 q3.3 -6.7 10.9 -13.4" stroke="#A88450" stroke-width="1.4" opacity="0.42"/>
<path d="M71.2 178.5 q-1.1 -4.5 -3.5 -9.0" stroke="#8A6A3A" stroke-width="0.7" opacity="0.41"/>
<path d="M133.1 173.6 q0.7 -7.2 2.2 -14.4" stroke="#9A7440" stroke-width="1.2" opacity="0.44"/>
<path d="M243.3 250.1 q-2.9 -6.8 -9.8 -13.6" stroke="#A88450" stroke-width="0.9" opacity="0.40"/>
<path d="M188.3 166.8 q-2.8 -6.6 -9.3 -13.2" stroke="#D4B47A" stroke-width="1.0" opacity="0.45"/>
<path d="M51.9 247.3 q0.2 -3.8 0.7 -7.6" stroke="#DCC08C" stroke-width="0.9" opacity="0.23"/>
<path d="M12.0 291.6 q-2.2 -7.0 -7.5 -13.9" stroke="#9A7440" stroke-width="1.1" opacity="0.44"/>
<path d="M223.8 168.7 q2.6 -5.4 8.6 -10.8" stroke="#8A6A3A" stroke-width="0.7" opacity="0.32"/>
<path d="M48.2 205.5 q1.4 -4.6 4.5 -9.2" stroke="#C8A468" stroke-width="0.8" opacity="0.33"/>
<path d="M449.4 208.6 q2.8 -7.1 9.3 -14.3" stroke="#DCC08C" stroke-width="1.1" opacity="0.27"/>
<path d="M43.0 287.0 q2.3 -6.0 7.7 -12.0" stroke="#9A7440" stroke-width="1.0" opacity="0.39"/>
<path d="M367.7 203.4 q1.2 -4.3 4.0 -8.7" stroke="#C8A468" stroke-width="1.3" opacity="0.40"/>
<path d="M349.2 186.7 q-0.9 -7.0 -2.9 -14.0" stroke="#D4B47A" stroke-width="1.2" opacity="0.45"/>
<path d="M222.9 181.4 q-1.0 -7.7 -3.4 -15.3" stroke="#A88450" stroke-width="1.4" opacity="0.45"/>
<path d="M172.1 185.7 q-1.2 -4.4 -4.0 -8.8" stroke="#C8A468" stroke-width="1.4" opacity="0.32"/>
<path d="M288.0 150.3 q-1.3 -10.0 -4.5 -20.1" stroke="#A88450" stroke-width="1.1" opacity="0.22"/>
<path d="M429.4 276.7 q-0.2 -9.0 -0.6 -18.0" stroke="#C8A468" stroke-width="1.1" opacity="0.31"/>
<path d="M40.9 303.3 q-0.3 -8.8 -0.9 -17.5" stroke="#A88450" stroke-width="1.2" opacity="0.44"/>
<path d="M80.2 170.6 q1.4 -3.6 4.5 -7.1" stroke="#A88450" stroke-width="1.3" opacity="0.24"/>
<path d="M462.7 256.5 q0.2 -5.8 0.8 -11.6" stroke="#C8A468" stroke-width="1.2" opacity="0.21"/>
<path d="M342.8 166.6 q-2.6 -7.9 -8.7 -15.7" stroke="#C8A468" stroke-width="0.8" opacity="0.41"/>
<path d="M118.9 197.5 q0.4 -4.9 1.2 -9.8" stroke="#9A7440" stroke-width="1.3" opacity="0.34"/>
<path d="M28.7 269.9 q1.4 -9.9 4.6 -19.8" stroke="#DCC08C" stroke-width="1.3" opacity="0.31"/>
<path d="M236.8 236.2 q-2.7 -5.6 -9.0 -11.2" stroke="#8A6A3A" stroke-width="1.1" opacity="0.39"/>
<path d="M366.3 174.3 q0.4 -4.1 1.4 -8.2" stroke="#D4B47A" stroke-width="0.9" opacity="0.34"/>
<path d="M244.7 240.0 q-2.9 -7.9 -9.7 -15.8" stroke="#DCC08C" stroke-width="0.8" opacity="0.21"/>
<path d="M19.9 165.8 q-2.4 -5.2 -8.1 -10.4" stroke="#D4B47A" stroke-width="1.1" opacity="0.31"/>
<path d="M238.6 233.0 q-0.3 -8.5 -1.1 -17.0" stroke="#DCC08C" stroke-width="1.0" opacity="0.40"/>
<path d="M116.9 234.8 q3.4 -8.3 11.3 -16.5" stroke="#DCC08C" stroke-width="0.8" opacity="0.42"/>
<path d="M211.2 217.5 q-0.9 -5.9 -3.1 -11.9" stroke="#A88450" stroke-width="0.7" opacity="0.26"/>
<path d="M316.0 277.0 q-2.8 -9.0 -9.5 -18.0" stroke="#A88450" stroke-width="0.9" opacity="0.36"/>
<path d="M119.5 172.2 q1.4 -6.3 4.6 -12.7" stroke="#D4B47A" stroke-width="1.0" opacity="0.30"/>
<path d="M467.2 284.9 q-0.2 -4.3 -0.8 -8.5" stroke="#DCC08C" stroke-width="0.9" opacity="0.30"/>
<path d="M168.3 164.9 q-0.8 -5.8 -2.7 -11.6" stroke="#8A6A3A" stroke-width="0.6" opacity="0.31"/>
<path d="M156.5 251.1 q-2.4 -5.8 -8.1 -11.6" stroke="#C8A468" stroke-width="0.7" opacity="0.44"/>
<path d="M125.3 156.4 q-1.7 -8.8 -5.8 -17.5" stroke="#C8A468" stroke-width="1.3" opacity="0.40"/>
<path d="M319.1 303.3 q0.2 -6.2 0.6 -12.5" stroke="#DCC08C" stroke-width="1.2" opacity="0.34"/>
<path d="M42.2 159.3 q-0.5 -8.5 -1.8 -16.9" stroke="#D4B47A" stroke-width="0.6" opacity="0.27"/>
<path d="M41.8 192.2 q-1.8 -7.3 -6.0 -14.6" stroke="#9A7440" stroke-width="1.0" opacity="0.42"/>
<path d="M160.1 239.6 q-2.0 -9.9 -6.7 -19.7" stroke="#C8A468" stroke-width="1.2" opacity="0.21"/>
<path d="M442.8 307.0 q-1.3 -4.6 -4.4 -9.2" stroke="#9A7440" stroke-width="1.0" opacity="0.36"/>
<path d="M97.2 222.2 q-1.6 -7.9 -5.3 -15.9" stroke="#D4B47A" stroke-width="0.6" opacity="0.45"/>
<path d="M8.7 231.9 q0.1 -10.8 0.4 -21.6" stroke="#C8A468" stroke-width="0.7" opacity="0.43"/>
<path d="M386.5 220.0 q1.9 -6.2 6.3 -12.4" stroke="#8A6A3A" stroke-width="0.8" opacity="0.44"/>
<path d="M101.6 187.2 q1.4 -3.9 4.7 -7.9" stroke="#A88450" stroke-width="0.9" opacity="0.36"/>
<path d="M164.0 158.8 q-1.4 -3.3 -4.6 -6.7" stroke="#A88450" stroke-width="0.9" opacity="0.42"/>
<path d="M26.1 257.8 q0.0 -6.0 0.1 -12.1" stroke="#9A7440" stroke-width="1.2" opacity="0.35"/>
<path d="M21.4 180.0 q-2.0 -4.0 -6.6 -7.9" stroke="#9A7440" stroke-width="1.4" opacity="0.44"/>
<path d="M258.2 189.6 q-1.7 -10.3 -5.7 -20.7" stroke="#9A7440" stroke-width="0.9" opacity="0.25"/>
<path d="M39.6 195.2 q-1.7 -7.7 -5.7 -15.5" stroke="#D4B47A" stroke-width="1.3" opacity="0.22"/>
<path d="M67.9 245.1 q-1.0 -5.9 -3.4 -11.8" stroke="#A88450" stroke-width="1.1" opacity="0.26"/>
<path d="M249.8 271.6 q1.5 -7.9 4.9 -15.8" stroke="#DCC08C" stroke-width="0.9" opacity="0.30"/>
<path d="M464.8 174.2 q1.1 -8.6 3.5 -17.2" stroke="#D4B47A" stroke-width="1.2" opacity="0.41"/>
<path d="M242.1 219.5 q0.0 -8.6 0.1 -17.2" stroke="#DCC08C" stroke-width="1.1" opacity="0.39"/>
<path d="M383.7 152.6 q2.1 -7.8 6.9 -15.5" stroke="#A88450" stroke-width="1.2" opacity="0.37"/>
<path d="M108.5 155.0 q-0.5 -4.0 -1.6 -8.0" stroke="#D4B47A" stroke-width="1.0" opacity="0.29"/>
<path d="M24.0 153.1 q-1.5 -6.8 -5.1 -13.6" stroke="#9A7440" stroke-width="1.2" opacity="0.20"/>
<path d="M353.2 231.5 q1.0 -7.1 3.2 -14.2" stroke="#D4B47A" stroke-width="1.0" opacity="0.39"/>
<path d="M382.0 287.1 q1.0 -4.6 3.4 -9.1" stroke="#C8A468" stroke-width="1.4" opacity="0.38"/>
<path d="M233.1 212.0 q1.0 -6.6 3.5 -13.2" stroke="#D4B47A" stroke-width="1.1" opacity="0.35"/>
<path d="M36.6 173.9 q1.0 -4.7 3.4 -9.5" stroke="#9A7440" stroke-width="0.7" opacity="0.36"/>
<path d="M227.7 228.7 q-3.4 -9.1 -11.5 -18.3" stroke="#C8A468" stroke-width="0.8" opacity="0.37"/>
<path d="M243.8 225.3 q-2.1 -5.8 -6.9 -11.6" stroke="#DCC08C" stroke-width="1.4" opacity="0.25"/>
<path d="M441.9 152.8 q1.7 -6.0 5.8 -12.0" stroke="#8A6A3A" stroke-width="0.9" opacity="0.45"/>
<path d="M432.6 300.7 q-1.2 -3.0 -3.9 -6.0" stroke="#A88450" stroke-width="1.4" opacity="0.33"/>
<path d="M62.6 282.9 q2.2 -6.1 7.3 -12.1" stroke="#A88450" stroke-width="1.0" opacity="0.29"/>
<path d="M413.5 213.8 q1.5 -3.5 5.0 -6.9" stroke="#A88450" stroke-width="0.8" opacity="0.31"/>
<path d="M66.4 205.7 q1.5 -4.9 5.1 -9.8" stroke="#D4B47A" stroke-width="0.9" opacity="0.28"/>
<path d="M188.0 302.3 q-1.7 -3.5 -5.8 -7.1" stroke="#A88450" stroke-width="0.9" opacity="0.27"/>
<path d="M185.4 311.8 q-0.9 -7.6 -3.0 -15.1" stroke="#8A6A3A" stroke-width="1.3" opacity="0.39"/>
<path d="M132.5 158.4 q0.9 -8.1 3.1 -16.3" stroke="#C8A468" stroke-width="0.8" opacity="0.26"/>
<path d="M241.2 180.8 q2.1 -4.8 7.1 -9.6" stroke="#D4B47A" stroke-width="1.1" opacity="0.40"/>
<path d="M431.1 302.4 q1.3 -7.0 4.5 -14.1" stroke="#D4B47A" stroke-width="0.9" opacity="0.43"/>
<path d="M290.2 172.4 q-0.1 -10.0 -0.4 -19.9" stroke="#DCC08C" stroke-width="1.0" opacity="0.23"/>
<path d="M162.2 198.2 q3.3 -7.0 11.0 -14.0" stroke="#9A7440" stroke-width="0.8" opacity="0.30"/>
<path d="M228.1 258.4 q0.5 -3.9 1.6 -7.8" stroke="#D4B47A" stroke-width="1.3" opacity="0.25"/>
<path d="M234.6 185.6 q3.9 -7.9 13.1 -15.7" stroke="#8A6A3A" stroke-width="1.0" opacity="0.31"/>
<path d="M115.2 178.3 q-1.1 -7.2 -3.7 -14.4" stroke="#9A7440" stroke-width="1.1" opacity="0.26"/>
<path d="M418.8 271.4 q-0.5 -6.3 -1.5 -12.5" stroke="#DCC08C" stroke-width="0.8" opacity="0.25"/>
<path d="M355.0 230.7 q-0.9 -7.4 -3.0 -14.9" stroke="#A88450" stroke-width="1.1" opacity="0.33"/>
<path d="M407.3 185.0 q-1.1 -4.9 -3.6 -9.7" stroke="#8A6A3A" stroke-width="0.9" opacity="0.36"/>
<path d="M147.3 281.9 q-3.2 -9.3 -10.7 -18.6" stroke="#8A6A3A" stroke-width="1.3" opacity="0.38"/>
<path d="M223.4 245.1 q-0.3 -3.0 -0.9 -5.9" stroke="#DCC08C" stroke-width="1.4" opacity="0.41"/>
<path d="M117.3 167.7 q0.1 -4.2 0.3 -8.5" stroke="#A88450" stroke-width="1.3" opacity="0.23"/>
<path d="M330.9 287.1 q-3.3 -8.5 -11.2 -17.0" stroke="#D4B47A" stroke-width="0.7" opacity="0.20"/>
<path d="M268.7 156.1 q3.2 -7.0 10.5 -13.9" stroke="#A88450" stroke-width="1.1" opacity="0.26"/>
<path d="M329.7 168.2 q0.1 -3.6 0.2 -7.1" stroke="#DCC08C" stroke-width="0.8" opacity="0.25"/>
<path d="M373.1 150.2 q2.8 -5.6 9.3 -11.2" stroke="#9A7440" stroke-width="1.1" opacity="0.44"/>
<path d="M417.1 227.0 q-1.0 -4.6 -3.4 -9.2" stroke="#8A6A3A" stroke-width="0.8" opacity="0.38"/>
<path d="M10.3 230.7 q-0.6 -8.3 -1.9 -16.7" stroke="#9A7440" stroke-width="0.9" opacity="0.26"/>
<path d="M174.7 229.9 q1.5 -8.2 5.2 -16.3" stroke="#9A7440" stroke-width="0.8" opacity="0.37"/>
<path d="M376.2 269.7 q-1.7 -6.4 -5.6 -12.9" stroke="#C8A468" stroke-width="1.3" opacity="0.28"/>
<path d="M108.9 185.9 q-1.5 -8.7 -5.1 -17.4" stroke="#DCC08C" stroke-width="0.7" opacity="0.32"/>
<path d="M105.4 217.6 q2.9 -6.7 9.8 -13.5" stroke="#C8A468" stroke-width="0.6" opacity="0.43"/>
<path d="M11.2 246.6 q1.1 -6.1 3.7 -12.1" stroke="#C8A468" stroke-width="1.3" opacity="0.30"/>
<path d="M417.1 268.7 q3.7 -9.0 12.5 -18.1" stroke="#9A7440" stroke-width="1.1" opacity="0.25"/>
<path d="M247.7 225.8 q1.0 -5.2 3.4 -10.4" stroke="#9A7440" stroke-width="1.0" opacity="0.45"/>
<path d="M51.4 162.7 q-0.2 -3.6 -0.8 -7.2" stroke="#D4B47A" stroke-width="1.2" opacity="0.34"/>
<path d="M179.4 274.5 q1.4 -5.0 4.5 -10.0" stroke="#D4B47A" stroke-width="1.0" opacity="0.21"/>
<path d="M175.9 299.0 q-0.5 -4.5 -1.7 -8.9" stroke="#8A6A3A" stroke-width="0.9" opacity="0.21"/>
<path d="M383.2 274.2 q-1.2 -2.6 -4.0 -5.3" stroke="#D4B47A" stroke-width="0.6" opacity="0.40"/>
<path d="M92.0 160.2 q-0.9 -7.7 -3.0 -15.4" stroke="#9A7440" stroke-width="1.1" opacity="0.44"/>
<path d="M123.7 266.1 q-1.0 -5.3 -3.4 -10.5" stroke="#D4B47A" stroke-width="1.1" opacity="0.38"/>
<path d="M380.3 303.3 q0.9 -3.2 3.1 -6.3" stroke="#D4B47A" stroke-width="1.4" opacity="0.32"/>
<path d="M450.2 212.6 q-0.3 -5.0 -1.0 -10.0" stroke="#8A6A3A" stroke-width="1.0" opacity="0.23"/>
<path d="M4.1 300.8 q0.9 -5.2 2.9 -10.5" stroke="#C8A468" stroke-width="0.9" opacity="0.35"/>
<path d="M150.8 208.6 q-3.1 -7.7 -10.3 -15.4" stroke="#C8A468" stroke-width="0.7" opacity="0.30"/>
<path d="M192.5 255.2 q0.3 -6.8 0.9 -13.7" stroke="#C8A468" stroke-width="1.3" opacity="0.45"/>
<path d="M466.3 192.9 q-1.2 -3.1 -3.9 -6.2" stroke="#8A6A3A" stroke-width="1.4" opacity="0.45"/>
<path d="M81.7 171.5 q2.1 -5.7 7.0 -11.4" stroke="#C8A468" stroke-width="1.3" opacity="0.39"/>
<path d="M313.6 169.6 q-1.7 -9.3 -5.5 -18.6" stroke="#DCC08C" stroke-width="0.8" opacity="0.27"/>
<path d="M122.9 221.2 q-1.0 -4.2 -3.2 -8.4" stroke="#9A7440" stroke-width="1.1" opacity="0.42"/>
<path d="M154.0 214.2 q0.1 -10.9 0.2 -21.9" stroke="#C8A468" stroke-width="0.7" opacity="0.36"/>
<path d="M219.0 156.0 q0.9 -2.6 3.1 -5.2" stroke="#C8A468" stroke-width="1.3" opacity="0.41"/>
<path d="M19.1 197.6 q-1.0 -3.6 -3.3 -7.2" stroke="#DCC08C" stroke-width="0.7" opacity="0.25"/>
<path d="M242.0 178.8 q1.8 -7.3 5.9 -14.5" stroke="#A88450" stroke-width="0.7" opacity="0.44"/>
<path d="M281.4 250.4 q-0.5 -4.7 -1.7 -9.3" stroke="#C8A468" stroke-width="1.4" opacity="0.21"/>
<path d="M18.0 268.6 q2.6 -9.3 8.8 -18.7" stroke="#9A7440" stroke-width="0.9" opacity="0.30"/>
<path d="M293.1 162.6 q-0.0 -3.3 -0.0 -6.5" stroke="#8A6A3A" stroke-width="0.7" opacity="0.22"/>
<path d="M186.6 239.1 q-2.6 -6.8 -8.8 -13.6" stroke="#C8A468" stroke-width="0.8" opacity="0.30"/>
<path d="M466.4 258.2 q-2.2 -5.1 -7.5 -10.3" stroke="#A88450" stroke-width="0.9" opacity="0.34"/>
<path d="M196.6 290.0 q-1.2 -10.8 -4.2 -21.5" stroke="#C8A468" stroke-width="0.9" opacity="0.30"/>
<path d="M444.6 220.3 q-1.3 -3.6 -4.4 -7.3" stroke="#D4B47A" stroke-width="1.3" opacity="0.30"/>
<path d="M217.5 176.3 q0.1 -3.1 0.4 -6.2" stroke="#A88450" stroke-width="0.9" opacity="0.40"/>
<path d="M270.4 300.2 q-2.4 -8.0 -7.9 -15.9" stroke="#9A7440" stroke-width="1.0" opacity="0.27"/>
<path d="M436.8 167.6 q1.7 -6.3 5.7 -12.6" stroke="#C8A468" stroke-width="1.3" opacity="0.28"/>
<path d="M20.5 297.9 q0.5 -5.5 1.7 -10.9" stroke="#A88450" stroke-width="1.3" opacity="0.30"/>
<path d="M292.8 283.6 q1.0 -3.9 3.3 -7.9" stroke="#C8A468" stroke-width="1.1" opacity="0.36"/>
<path d="M92.6 226.6 q-2.7 -6.0 -9.0 -12.1" stroke="#DCC08C" stroke-width="0.9" opacity="0.24"/>
<path d="M70.5 307.3 q-2.4 -8.7 -7.9 -17.3" stroke="#DCC08C" stroke-width="1.1" opacity="0.41"/>
<path d="M315.2 202.5 q-0.2 -6.1 -0.8 -12.2" stroke="#A88450" stroke-width="1.1" opacity="0.39"/>
<path d="M145.5 190.4 q-0.7 -6.0 -2.3 -12.0" stroke="#DCC08C" stroke-width="0.6" opacity="0.31"/>
<path d="M292.1 229.3 q1.1 -4.6 3.5 -9.1" stroke="#8A6A3A" stroke-width="1.2" opacity="0.41"/>
<path d="M189.0 160.9 q-0.7 -5.8 -2.2 -11.5" stroke="#8A6A3A" stroke-width="1.1" opacity="0.33"/>
<path d="M19.2 171.1 q-1.6 -10.0 -5.4 -20.1" stroke="#A88450" stroke-width="0.6" opacity="0.33"/>
<path d="M237.9 211.2 q-3.1 -9.3 -10.3 -18.5" stroke="#D4B47A" stroke-width="1.2" opacity="0.45"/>
<path d="M384.7 181.4 q-0.1 -10.9 -0.2 -21.7" stroke="#C8A468" stroke-width="1.2" opacity="0.37"/>
<path d="M104.4 285.0 q-1.6 -7.4 -5.4 -14.8" stroke="#9A7440" stroke-width="0.8" opacity="0.42"/>
<path d="M385.0 173.3 q2.3 -5.8 7.8 -11.7" stroke="#C8A468" stroke-width="1.1" opacity="0.35"/>
<path d="M112.1 210.3 q-0.4 -4.5 -1.2 -9.1" stroke="#A88450" stroke-width="1.1" opacity="0.43"/>
<path d="M422.6 177.3 q-2.9 -8.0 -9.5 -15.9" stroke="#DCC08C" stroke-width="1.3" opacity="0.21"/>
<path d="M456.0 223.4 q1.1 -6.9 3.7 -13.8" stroke="#D4B47A" stroke-width="1.0" opacity="0.26"/>
<path d="M404.3 269.5 q-0.6 -5.9 -2.1 -11.8" stroke="#9A7440" stroke-width="0.9" opacity="0.34"/>
<path d="M360.9 221.6 q0.9 -4.2 3.0 -8.3" stroke="#D4B47A" stroke-width="1.0" opacity="0.27"/>
<path d="M146.4 306.5 q3.4 -8.2 11.2 -16.4" stroke="#9A7440" stroke-width="1.2" opacity="0.38"/>
<path d="M104.6 197.1 q-0.6 -8.0 -1.8 -15.9" stroke="#9A7440" stroke-width="0.7" opacity="0.42"/>
<path d="M107.3 255.8 q-1.2 -2.4 -4.1 -4.9" stroke="#9A7440" stroke-width="1.0" opacity="0.28"/>
<path d="M252.1 216.9 q-1.6 -4.7 -5.3 -9.4" stroke="#9A7440" stroke-width="1.0" opacity="0.36"/>
<path d="M63.6 301.7 q-1.4 -4.4 -4.7 -8.7" stroke="#D4B47A" stroke-width="0.7" opacity="0.22"/>
<path d="M314.1 193.7 q3.5 -7.5 11.5 -15.1" stroke="#D4B47A" stroke-width="1.0" opacity="0.36"/>
<path d="M165.4 254.6 q2.3 -5.4 7.5 -10.7" stroke="#A88450" stroke-width="0.7" opacity="0.32"/>
<path d="M0.2 160.0 q-0.8 -2.9 -2.7 -5.8" stroke="#C8A468" stroke-width="1.2" opacity="0.21"/>
<path d="M5.8 239.2 q-3.0 -9.2 -10.1 -18.5" stroke="#C8A468" stroke-width="1.1" opacity="0.33"/>
<path d="M305.7 217.3 q0.1 -7.9 0.2 -15.8" stroke="#D4B47A" stroke-width="0.6" opacity="0.28"/>
<path d="M419.8 276.8 q-3.3 -6.7 -11.1 -13.4" stroke="#8A6A3A" stroke-width="1.0" opacity="0.39"/>
<path d="M350.1 223.3 q-1.5 -4.1 -5.0 -8.2" stroke="#C8A468" stroke-width="0.7" opacity="0.36"/>
<path d="M420.7 299.9 q-2.1 -10.0 -6.9 -19.9" stroke="#D4B47A" stroke-width="1.0" opacity="0.27"/>
<path d="M205.8 277.7 q-1.4 -6.8 -4.6 -13.6" stroke="#A88450" stroke-width="1.3" opacity="0.43"/>
<path d="M40.3 232.2 q1.4 -3.7 4.7 -7.4" stroke="#A88450" stroke-width="0.7" opacity="0.25"/>
<path d="M431.9 181.1 q0.5 -6.0 1.7 -12.1" stroke="#8A6A3A" stroke-width="1.1" opacity="0.43"/>
<path d="M327.0 257.8 q-0.3 -10.8 -0.9 -21.6" stroke="#DCC08C" stroke-width="1.3" opacity="0.37"/>
<path d="M206.4 267.4 q-1.2 -7.3 -4.0 -14.6" stroke="#C8A468" stroke-width="1.1" opacity="0.30"/>
<path d="M266.8 177.8 q-1.0 -2.8 -3.4 -5.6" stroke="#DCC08C" stroke-width="0.9" opacity="0.43"/>
<path d="M66.9 154.7 q0.5 -3.2 1.8 -6.4" stroke="#A88450" stroke-width="0.7" opacity="0.21"/>
<path d="M22.0 288.8 q-2.2 -8.3 -7.4 -16.6" stroke="#DCC08C" stroke-width="0.7" opacity="0.42"/>
<path d="M409.6 298.1 q-3.3 -9.0 -11.0 -18.0" stroke="#C8A468" stroke-width="0.6" opacity="0.25"/>
<path d="M448.0 297.6 q-3.0 -7.6 -9.9 -15.1" stroke="#A88450" stroke-width="1.0" opacity="0.36"/>
<path d="M62.6 278.3 q-1.4 -7.8 -4.6 -15.7" stroke="#9A7440" stroke-width="0.6" opacity="0.31"/>
<path d="M121.2 195.8 q-1.0 -8.6 -3.2 -17.2" stroke="#9A7440" stroke-width="1.1" opacity="0.39"/>
<path d="M224.7 196.6 q2.1 -8.2 7.1 -16.5" stroke="#D4B47A" stroke-width="1.2" opacity="0.31"/>
<path d="M163.7 264.2 q-1.7 -6.7 -5.6 -13.5" stroke="#D4B47A" stroke-width="0.8" opacity="0.34"/>
<path d="M205.8 234.8 q1.1 -5.0 3.6 -10.0" stroke="#D4B47A" stroke-width="1.0" opacity="0.20"/>
<path d="M232.0 279.1 q-0.0 -4.5 -0.1 -9.0" stroke="#9A7440" stroke-width="1.0" opacity="0.44"/>
<path d="M272.8 175.7 q3.3 -7.8 11.0 -15.6" stroke="#C8A468" stroke-width="0.7" opacity="0.32"/>
<path d="M300.4 163.1 q1.5 -9.0 5.1 -17.9" stroke="#D4B47A" stroke-width="0.9" opacity="0.36"/>
<path d="M189.4 213.9 q-3.3 -8.5 -11.1 -16.9" stroke="#A88450" stroke-width="0.8" opacity="0.21"/>
<path d="M124.2 296.0 q-0.7 -6.9 -2.4 -13.8" stroke="#A88450" stroke-width="1.0" opacity="0.26"/>
<path d="M250.9 272.2 q1.1 -8.8 3.7 -17.7" stroke="#9A7440" stroke-width="1.0" opacity="0.35"/>
<path d="M409.7 222.9 q-1.1 -7.2 -3.6 -14.4" stroke="#8A6A3A" stroke-width="1.2" opacity="0.31"/>
<path d="M273.4 170.4 q2.1 -5.7 6.9 -11.5" stroke="#C8A468" stroke-width="0.8" opacity="0.33"/>
<path d="M356.2 283.9 q1.5 -7.6 4.9 -15.1" stroke="#C8A468" stroke-width="1.1" opacity="0.38"/>
<path d="M164.6 188.3 q-2.1 -10.0 -7.1 -20.1" stroke="#A88450" stroke-width="0.7" opacity="0.45"/>
<path d="M310.5 181.7 q-1.2 -3.7 -4.0 -7.4" stroke="#9A7440" stroke-width="0.9" opacity="0.38"/>
<path d="M92.6 253.4 q-0.9 -3.5 -3.1 -7.1" stroke="#8A6A3A" stroke-width="0.6" opacity="0.32"/>
<path d="M403.2 220.7 q1.8 -3.7 6.0 -7.5" stroke="#9A7440" stroke-width="0.7" opacity="0.32"/>
<path d="M285.0 215.6 q2.9 -7.5 9.7 -15.0" stroke="#8A6A3A" stroke-width="1.1" opacity="0.38"/>
<path d="M305.5 287.1 q1.1 -8.2 3.5 -16.3" stroke="#A88450" stroke-width="1.3" opacity="0.38"/>
<path d="M320.8 253.9 q-1.0 -6.4 -3.4 -12.8" stroke="#A88450" stroke-width="1.3" opacity="0.38"/>
<path d="M114.4 214.8 q-2.4 -7.7 -8.1 -15.4" stroke="#8A6A3A" stroke-width="0.6" opacity="0.32"/>
<path d="M405.2 234.0 q2.5 -7.2 8.3 -14.4" stroke="#A88450" stroke-width="0.6" opacity="0.28"/>
<path d="M392.6 297.1 q-0.8 -3.6 -2.6 -7.2" stroke="#C8A468" stroke-width="1.2" opacity="0.24"/>
<path d="M444.0 234.1 q0.2 -3.8 0.8 -7.6" stroke="#DCC08C" stroke-width="1.0" opacity="0.25"/>
<path d="M7.6 278.4 q-0.8 -5.8 -2.6 -11.6" stroke="#A88450" stroke-width="0.8" opacity="0.44"/>
<path d="M323.0 213.6 q-2.8 -7.9 -9.2 -15.7" stroke="#DCC08C" stroke-width="0.6" opacity="0.29"/>
<path d="M129.5 214.7 q-0.2 -3.1 -0.7 -6.2" stroke="#8A6A3A" stroke-width="1.1" opacity="0.36"/>
<path d="M273.8 167.7 q-0.5 -5.4 -1.5 -10.8" stroke="#DCC08C" stroke-width="1.4" opacity="0.44"/>
<path d="M453.5 224.9 q1.5 -3.6 4.9 -7.1" stroke="#D4B47A" stroke-width="1.1" opacity="0.40"/>
<path d="M221.4 241.1 q1.7 -3.8 5.8 -7.7" stroke="#9A7440" stroke-width="1.3" opacity="0.37"/>
<path d="M375.4 217.0 q2.3 -10.3 7.8 -20.5" stroke="#A88450" stroke-width="1.3" opacity="0.23"/>
<path d="M167.4 287.8 q-0.5 -5.1 -1.8 -10.1" stroke="#9A7440" stroke-width="1.1" opacity="0.45"/>
<path d="M227.3 280.5 q-1.1 -9.2 -3.7 -18.4" stroke="#A88450" stroke-width="1.0" opacity="0.28"/>
<path d="M202.2 253.2 q-1.0 -8.1 -3.2 -16.2" stroke="#9A7440" stroke-width="0.6" opacity="0.41"/>
<path d="M390.8 296.7 q-2.7 -8.1 -8.9 -16.2" stroke="#9A7440" stroke-width="0.6" opacity="0.36"/>
<path d="M5.4 304.2 q-1.7 -7.7 -5.7 -15.5" stroke="#D4B47A" stroke-width="1.3" opacity="0.34"/>
<path d="M87.6 223.2 q-2.2 -8.5 -7.4 -17.0" stroke="#8A6A3A" stroke-width="0.7" opacity="0.40"/>
<path d="M420.6 248.6 q1.3 -9.0 4.3 -18.0" stroke="#DCC08C" stroke-width="1.3" opacity="0.40"/>
<path d="M93.2 262.2 q1.4 -6.8 4.8 -13.7" stroke="#8A6A3A" stroke-width="0.7" opacity="0.37"/>
<path d="M55.9 217.9 q-0.2 -9.6 -0.7 -19.2" stroke="#DCC08C" stroke-width="1.0" opacity="0.21"/>
<path d="M68.2 229.6 q0.2 -7.0 0.8 -13.9" stroke="#A88450" stroke-width="1.3" opacity="0.20"/>
<path d="M220.9 241.1 q2.3 -7.4 7.6 -14.8" stroke="#9A7440" stroke-width="1.4" opacity="0.31"/>
<path d="M319.0 179.2 q0.7 -5.8 2.4 -11.5" stroke="#D4B47A" stroke-width="1.1" opacity="0.35"/>
<path d="M439.7 203.5 q0.1 -10.9 0.3 -21.7" stroke="#8A6A3A" stroke-width="0.7" opacity="0.39"/>
<path d="M100.7 217.3 q-1.3 -3.4 -4.3 -6.8" stroke="#A88450" stroke-width="1.0" opacity="0.29"/>
<path d="M248.1 274.8 q-0.3 -4.7 -0.8 -9.3" stroke="#8A6A3A" stroke-width="0.6" opacity="0.26"/>
<path d="M136.5 207.5 q-1.0 -6.8 -3.2 -13.5" stroke="#9A7440" stroke-width="0.9" opacity="0.42"/>
<path d="M96.1 229.7 q-1.0 -3.6 -3.3 -7.2" stroke="#A88450" stroke-width="1.1" opacity="0.27"/>
<path d="M299.6 277.0 q0.6 -3.2 2.0 -6.3" stroke="#8A6A3A" stroke-width="0.6" opacity="0.34"/>
<path d="M141.8 151.0 q1.5 -3.8 5.0 -7.5" stroke="#DCC08C" stroke-width="0.6" opacity="0.39"/>
<path d="M236.4 238.1 q-1.7 -5.3 -5.7 -10.6" stroke="#A88450" stroke-width="1.1" opacity="0.37"/>
<path d="M321.4 184.4 q-0.3 -8.3 -1.0 -16.6" stroke="#C8A468" stroke-width="0.7" opacity="0.23"/>
<path d="M17.5 275.5 q1.3 -10.1 4.5 -20.1" stroke="#9A7440" stroke-width="0.7" opacity="0.42"/>
<path d="M146.0 265.0 q-2.5 -9.0 -8.5 -17.9" stroke="#D4B47A" stroke-width="0.9" opacity="0.28"/>
<path d="M302.9 301.3 q0.2 -3.4 0.6 -6.8" stroke="#D4B47A" stroke-width="1.2" opacity="0.41"/>
<path d="M198.7 262.7 q-2.1 -5.1 -7.1 -10.3" stroke="#A88450" stroke-width="1.1" opacity="0.30"/>
<path d="M442.6 308.9 q-0.5 -6.8 -1.7 -13.5" stroke="#D4B47A" stroke-width="1.0" opacity="0.22"/>
<path d="M422.8 251.6 q-2.4 -5.0 -8.1 -9.9" stroke="#A88450" stroke-width="1.4" opacity="0.23"/>
<path d="M41.6 290.9 q-1.5 -3.1 -5.0 -6.3" stroke="#A88450" stroke-width="1.0" opacity="0.34"/>
<path d="M351.3 299.5 q1.2 -5.6 4.0 -11.2" stroke="#A88450" stroke-width="1.2" opacity="0.41"/>
<path d="M39.8 251.8 q-0.3 -8.7 -1.0 -17.3" stroke="#9A7440" stroke-width="0.6" opacity="0.43"/>
<path d="M15.1 159.8 q1.6 -9.7 5.2 -19.4" stroke="#DCC08C" stroke-width="0.8" opacity="0.22"/>
<path d="M344.3 176.9 q-0.1 -9.9 -0.4 -19.8" stroke="#D4B47A" stroke-width="1.4" opacity="0.28"/>
<path d="M343.5 226.1 q1.6 -3.4 5.3 -6.9" stroke="#D4B47A" stroke-width="1.1" opacity="0.29"/>
<path d="M297.2 217.7 q1.4 -5.6 4.7 -11.2" stroke="#9A7440" stroke-width="1.1" opacity="0.40"/>
<path d="M138.0 159.8 q1.8 -10.4 6.1 -20.7" stroke="#DCC08C" stroke-width="1.1" opacity="0.28"/>
<path d="M461.4 284.7 q-1.2 -7.5 -4.1 -15.1" stroke="#8A6A3A" stroke-width="0.8" opacity="0.44"/>
<path d="M182.8 210.9 q-2.0 -8.5 -6.7 -17.1" stroke="#8A6A3A" stroke-width="0.6" opacity="0.27"/>
<path d="M124.2 218.4 q2.0 -7.0 6.6 -13.9" stroke="#D4B47A" stroke-width="0.7" opacity="0.27"/>
<path d="M420.4 310.8 q1.5 -3.3 5.2 -6.6" stroke="#DCC08C" stroke-width="1.3" opacity="0.37"/>
<path d="M163.7 163.8 q1.8 -6.8 6.0 -13.6" stroke="#C8A468" stroke-width="1.2" opacity="0.40"/>
<path d="M463.6 200.1 q-0.3 -3.4 -1.0 -6.8" stroke="#A88450" stroke-width="0.8" opacity="0.25"/>
<path d="M354.5 278.2 q-2.2 -5.6 -7.3 -11.2" stroke="#9A7440" stroke-width="0.8" opacity="0.39"/>
<path d="M273.6 295.3 q0.2 -10.1 0.6 -20.2" stroke="#8A6A3A" stroke-width="0.8" opacity="0.33"/>
<path d="M100.4 164.9 q-1.6 -9.0 -5.5 -18.1" stroke="#DCC08C" stroke-width="0.9" opacity="0.34"/>
<path d="M244.1 174.1 q1.3 -2.6 4.3 -5.2" stroke="#9A7440" stroke-width="0.9" opacity="0.42"/>
<path d="M218.7 163.2 q-2.0 -4.4 -6.8 -8.7" stroke="#9A7440" stroke-width="0.6" opacity="0.33"/>
<path d="M15.8 310.4 q-0.1 -9.9 -0.4 -19.9" stroke="#DCC08C" stroke-width="1.3" opacity="0.25"/>
<path d="M132.1 165.7 q0.5 -6.5 1.7 -13.0" stroke="#DCC08C" stroke-width="0.8" opacity="0.44"/>
<path d="M17.9 182.6 q-1.5 -3.7 -4.9 -7.4" stroke="#D4B47A" stroke-width="0.9" opacity="0.21"/>
<path d="M333.0 228.9 q3.1 -8.3 10.3 -16.6" stroke="#DCC08C" stroke-width="1.3" opacity="0.36"/>
<path d="M333.4 164.6 q-1.2 -5.2 -4.0 -10.3" stroke="#D4B47A" stroke-width="1.1" opacity="0.44"/>
<path d="M185.6 222.6 q1.6 -3.4 5.2 -6.8" stroke="#A88450" stroke-width="0.6" opacity="0.26"/>
<path d="M120.8 207.0 q3.3 -8.6 11.0 -17.3" stroke="#D4B47A" stroke-width="1.0" opacity="0.26"/>
<path d="M349.1 273.4 q-2.2 -5.8 -7.3 -11.6" stroke="#9A7440" stroke-width="1.4" opacity="0.39"/>
<path d="M319.5 198.4 q1.6 -7.2 5.5 -14.5" stroke="#D4B47A" stroke-width="0.9" opacity="0.32"/>
<path d="M184.1 210.7 q-0.3 -6.0 -1.0 -12.0" stroke="#C8A468" stroke-width="1.3" opacity="0.43"/>
<path d="M220.8 297.8 q-2.6 -8.3 -8.7 -16.7" stroke="#C8A468" stroke-width="1.1" opacity="0.22"/>
<path d="M176.1 271.4 q3.3 -7.4 11.0 -14.8" stroke="#8A6A3A" stroke-width="1.1" opacity="0.41"/>
<path d="M213.5 205.0 q-0.2 -9.6 -0.6 -19.2" stroke="#A88450" stroke-width="0.9" opacity="0.29"/>
<path d="M347.4 179.2 q2.1 -5.7 6.9 -11.3" stroke="#8A6A3A" stroke-width="0.8" opacity="0.42"/>
<path d="M194.4 175.2 q1.4 -4.6 4.7 -9.2" stroke="#9A7440" stroke-width="0.8" opacity="0.40"/>
<path d="M51.6 223.9 q-1.9 -6.1 -6.4 -12.1" stroke="#DCC08C" stroke-width="1.3" opacity="0.21"/>
<path d="M315.4 184.2 q-1.2 -6.5 -4.0 -13.0" stroke="#9A7440" stroke-width="1.4" opacity="0.39"/>
<path d="M203.9 192.4 q-1.1 -4.6 -3.5 -9.2" stroke="#8A6A3A" stroke-width="1.3" opacity="0.27"/>
<path d="M27.1 267.7 q2.0 -4.2 6.6 -8.4" stroke="#D4B47A" stroke-width="1.0" opacity="0.31"/>
<path d="M241.1 221.8 q3.3 -7.6 10.8 -15.2" stroke="#9A7440" stroke-width="0.9" opacity="0.25"/>
<path d="M430.5 185.4 q-2.2 -6.6 -7.3 -13.2" stroke="#C8A468" stroke-width="0.8" opacity="0.33"/>
<path d="M82.9 247.3 q3.0 -8.2 10.0 -16.5" stroke="#A88450" stroke-width="0.8" opacity="0.32"/>
<path d="M97.2 249.2 q2.2 -7.9 7.3 -15.7" stroke="#DCC08C" stroke-width="0.6" opacity="0.28"/>
<path d="M326.7 234.2 q3.2 -8.1 10.7 -16.2" stroke="#DCC08C" stroke-width="0.9" opacity="0.40"/>
<path d="M397.4 290.0 q-2.6 -5.4 -8.7 -10.8" stroke="#8A6A3A" stroke-width="1.1" opacity="0.23"/>
<path d="M117.2 241.2 q-3.9 -8.7 -13.2 -17.3" stroke="#A88450" stroke-width="1.1" opacity="0.29"/>
<path d="M2.2 234.2 q0.1 -6.6 0.3 -13.1" stroke="#D4B47A" stroke-width="0.8" opacity="0.29"/>
<path d="M391.8 297.8 q2.7 -8.0 9.1 -16.1" stroke="#DCC08C" stroke-width="0.6" opacity="0.39"/>
<path d="M412.0 304.6 q0.1 -7.0 0.3 -13.9" stroke="#DCC08C" stroke-width="0.7" opacity="0.40"/>
<path d="M114.9 164.4 q-2.1 -7.1 -7.1 -14.2" stroke="#9A7440" stroke-width="1.3" opacity="0.26"/>
<path d="M14.2 165.6 q-2.1 -7.8 -7.1 -15.6" stroke="#D4B47A" stroke-width="1.1" opacity="0.41"/>
<path d="M219.0 188.6 q-0.8 -6.4 -2.7 -12.8" stroke="#D4B47A" stroke-width="0.6" opacity="0.38"/>
<path d="M58.1 230.0 q-1.3 -6.7 -4.3 -13.4" stroke="#D4B47A" stroke-width="1.3" opacity="0.23"/>
<path d="M255.6 186.8 q0.7 -4.7 2.3 -9.4" stroke="#8A6A3A" stroke-width="0.7" opacity="0.39"/>
<path d="M389.9 301.9 q-0.4 -6.1 -1.4 -12.1" stroke="#DCC08C" stroke-width="0.9" opacity="0.33"/>
<path d="M444.3 275.9 q-1.2 -5.3 -4.1 -10.7" stroke="#9A7440" stroke-width="1.3" opacity="0.38"/>
<path d="M266.4 309.7 q-0.5 -5.5 -1.5 -11.0" stroke="#DCC08C" stroke-width="1.0" opacity="0.21"/>
<path d="M452.1 301.4 q-0.3 -5.0 -1.1 -9.9" stroke="#A88450" stroke-width="0.7" opacity="0.20"/>
<path d="M88.5 202.5 q0.6 -4.5 2.2 -9.0" stroke="#C8A468" stroke-width="1.4" opacity="0.23"/>
<path d="M366.5 301.8 q2.0 -7.3 6.8 -14.6" stroke="#D4B47A" stroke-width="1.1" opacity="0.21"/>
<path d="M125.4 259.9 q0.2 -5.2 0.6 -10.4" stroke="#D4B47A" stroke-width="0.8" opacity="0.36"/>
<path d="M245.6 220.3 q-1.9 -10.1 -6.2 -20.3" stroke="#9A7440" stroke-width="0.7" opacity="0.29"/>
<path d="M28.5 305.4 q3.3 -8.8 11.1 -17.5" stroke="#D4B47A" stroke-width="1.0" opacity="0.32"/>
<path d="M70.0 170.1 q-0.7 -3.9 -2.3 -7.8" stroke="#8A6A3A" stroke-width="0.8" opacity="0.34"/>
<path d="M347.4 269.9 q-0.2 -5.3 -0.7 -10.6" stroke="#A88450" stroke-width="1.1" opacity="0.34"/>
<path d="M95.0 265.1 q0.3 -6.7 0.9 -13.3" stroke="#DCC08C" stroke-width="1.3" opacity="0.32"/>
<path d="M14.6 204.1 q0.2 -4.5 0.6 -9.0" stroke="#DCC08C" stroke-width="1.3" opacity="0.30"/>
<path d="M76.6 304.2 q-0.8 -5.4 -2.7 -10.9" stroke="#9A7440" stroke-width="1.4" opacity="0.27"/>
<path d="M139.5 275.1 q-1.5 -3.5 -4.9 -7.0" stroke="#9A7440" stroke-width="0.6" opacity="0.31"/>
<path d="M183.1 221.3 q-2.8 -7.6 -9.2 -15.2" stroke="#C8A468" stroke-width="1.1" opacity="0.45"/>
<path d="M440.8 217.5 q-2.4 -7.3 -8.1 -14.6" stroke="#C8A468" stroke-width="1.3" opacity="0.35"/>
<path d="M387.6 233.9 q1.8 -8.4 6.0 -16.8" stroke="#8A6A3A" stroke-width="1.1" opacity="0.27"/>
<path d="M298.4 264.0 q-2.0 -5.4 -6.6 -10.7" stroke="#8A6A3A" stroke-width="1.1" opacity="0.39"/>
<path d="M235.0 306.0 q-0.5 -7.5 -1.7 -15.1" stroke="#9A7440" stroke-width="1.1" opacity="0.42"/>
<path d="M179.2 223.3 q1.2 -6.3 4.1 -12.7" stroke="#9A7440" stroke-width="1.0" opacity="0.29"/>
<path d="M281.0 255.0 q0.6 -2.9 2.1 -5.8" stroke="#8A6A3A" stroke-width="0.8" opacity="0.30"/>
<path d="M253.4 280.1 q-0.7 -6.4 -2.2 -12.8" stroke="#C8A468" stroke-width="1.3" opacity="0.22"/>
<path d="M152.9 286.6 q3.5 -7.8 11.6 -15.5" stroke="#C8A468" stroke-width="1.3" opacity="0.44"/>
<path d="M451.2 154.1 q1.6 -4.3 5.3 -8.6" stroke="#9A7440" stroke-width="1.2" opacity="0.43"/>
<path d="M254.2 311.7 q0.1 -7.1 0.3 -14.3" stroke="#A88450" stroke-width="1.0" opacity="0.31"/>
<path d="M19.2 259.5 q-2.5 -5.1 -8.4 -10.3" stroke="#D4B47A" stroke-width="0.7" opacity="0.33"/>
<path d="M176.7 214.9 q0.5 -7.5 1.6 -14.9" stroke="#C8A468" stroke-width="1.0" opacity="0.44"/>
<path d="M207.8 251.2 q-1.4 -10.7 -4.8 -21.4" stroke="#DCC08C" stroke-width="0.7" opacity="0.39"/>
<path d="M171.2 209.4 q-0.6 -3.5 -1.9 -6.9" stroke="#C8A468" stroke-width="1.3" opacity="0.23"/>
<path d="M325.6 282.9 q3.4 -9.3 11.3 -18.7" stroke="#8A6A3A" stroke-width="1.0" opacity="0.36"/>
<path d="M385.2 183.7 q-0.7 -10.1 -2.5 -20.1" stroke="#D4B47A" stroke-width="1.1" opacity="0.36"/>
<path d="M166.7 311.0 q-2.9 -6.5 -9.7 -13.0" stroke="#8A6A3A" stroke-width="0.6" opacity="0.20"/>
<path d="M335.4 239.6 q-0.9 -10.2 -3.0 -20.5" stroke="#D4B47A" stroke-width="1.1" opacity="0.35"/>
<path d="M92.8 230.7 q-1.4 -7.0 -4.8 -14.1" stroke="#A88450" stroke-width="1.0" opacity="0.42"/>
<path d="M67.8 182.2 q-2.2 -6.9 -7.4 -13.7" stroke="#DCC08C" stroke-width="0.7" opacity="0.39"/>
<path d="M47.2 177.6 q1.9 -6.5 6.3 -12.9" stroke="#DCC08C" stroke-width="1.2" opacity="0.31"/>
<path d="M306.8 260.9 q-2.2 -6.7 -7.3 -13.4" stroke="#C8A468" stroke-width="0.7" opacity="0.29"/>
<path d="M125.8 166.1 q0.7 -10.2 2.4 -20.3" stroke="#9A7440" stroke-width="1.1" opacity="0.25"/>
<path d="M9.2 185.6 q1.3 -5.8 4.5 -11.5" stroke="#D4B47A" stroke-width="1.1" opacity="0.31"/>
<path d="M117.7 157.1 q3.0 -9.2 10.0 -18.4" stroke="#9A7440" stroke-width="1.3" opacity="0.20"/>
<path d="M215.0 217.8 q1.6 -4.3 5.2 -8.6" stroke="#D4B47A" stroke-width="0.9" opacity="0.26"/>
<path d="M339.1 185.9 q1.6 -4.7 5.5 -9.5" stroke="#8A6A3A" stroke-width="1.3" opacity="0.21"/>
<path d="M41.3 177.5 q-2.3 -4.7 -7.7 -9.3" stroke="#9A7440" stroke-width="0.9" opacity="0.30"/>
<path d="M158.1 291.2 q0.7 -5.6 2.4 -11.1" stroke="#D4B47A" stroke-width="1.3" opacity="0.31"/>
<path d="M261.4 212.8 q-0.9 -6.6 -2.9 -13.2" stroke="#8A6A3A" stroke-width="1.1" opacity="0.21"/>
<path d="M161.2 175.3 q-2.8 -7.3 -9.3 -14.6" stroke="#9A7440" stroke-width="1.2" opacity="0.34"/>
<path d="M261.9 225.7 q-2.0 -8.7 -6.7 -17.5" stroke="#9A7440" stroke-width="1.2" opacity="0.29"/>
<path d="M177.9 305.3 q1.7 -3.8 5.5 -7.5" stroke="#DCC08C" stroke-width="1.3" opacity="0.25"/>
<path d="M318.7 302.6 q0.9 -10.9 2.9 -21.8" stroke="#8A6A3A" stroke-width="0.9" opacity="0.35"/>
<path d="M116.2 248.5 q1.4 -4.1 4.7 -8.2" stroke="#D4B47A" stroke-width="0.7" opacity="0.37"/>
<path d="M402.1 269.2 q-3.4 -7.2 -11.2 -14.4" stroke="#A88450" stroke-width="0.8" opacity="0.34"/>
<path d="M184.0 163.9 q1.3 -3.9 4.2 -7.8" stroke="#9A7440" stroke-width="1.3" opacity="0.25"/>
<path d="M32.1 298.0 q2.0 -8.8 6.7 -17.7" stroke="#C8A468" stroke-width="0.8" opacity="0.22"/>
<path d="M106.9 170.4 q-1.6 -8.3 -5.2 -16.7" stroke="#8A6A3A" stroke-width="1.0" opacity="0.41"/>
<path d="M296.4 251.8 q3.4 -8.1 11.4 -16.2" stroke="#C8A468" stroke-width="1.1" opacity="0.21"/>
<path d="M313.2 206.9 q0.8 -6.1 2.8 -12.3" stroke="#A88450" stroke-width="1.4" opacity="0.32"/>
<path d="M189.0 296.8 q-0.7 -3.6 -2.2 -7.2" stroke="#9A7440" stroke-width="1.2" opacity="0.43"/>
<path d="M336.3 156.6 q-0.9 -3.0 -3.0 -5.9" stroke="#C8A468" stroke-width="0.7" opacity="0.39"/>
<path d="M348.5 239.5 q2.8 -6.5 9.3 -13.1" stroke="#DCC08C" stroke-width="1.1" opacity="0.41"/>
<path d="M338.3 191.3 q1.0 -6.3 3.3 -12.5" stroke="#9A7440" stroke-width="0.7" opacity="0.43"/>
<path d="M360.5 256.2 q3.1 -8.8 10.2 -17.7" stroke="#DCC08C" stroke-width="0.6" opacity="0.35"/>
<path d="M115.4 168.0 q-2.2 -8.6 -7.4 -17.1" stroke="#9A7440" stroke-width="0.7" opacity="0.39"/>
<path d="M327.9 213.8 q2.4 -8.0 8.0 -16.1" stroke="#9A7440" stroke-width="0.9" opacity="0.33"/>
<path d="M448.2 221.7 q0.0 -5.7 0.0 -11.4" stroke="#A88450" stroke-width="1.1" opacity="0.41"/>
<path d="M213.7 158.8 q-0.5 -8.5 -1.7 -17.1" stroke="#DCC08C" stroke-width="1.2" opacity="0.41"/>
<path d="M231.0 180.7 q2.8 -9.5 9.3 -19.1" stroke="#DCC08C" stroke-width="1.0" opacity="0.27"/>
<path d="M457.6 253.3 q-1.5 -6.9 -5.0 -13.8" stroke="#D4B47A" stroke-width="0.9" opacity="0.24"/>
<path d="M43.7 253.1 q0.6 -4.0 2.1 -7.9" stroke="#8A6A3A" stroke-width="0.8" opacity="0.37"/>
<path d="M114.1 233.5 q2.3 -5.4 7.5 -10.8" stroke="#9A7440" stroke-width="0.7" opacity="0.37"/>
<path d="M334.0 245.2 q0.5 -4.8 1.8 -9.7" stroke="#D4B47A" stroke-width="1.2" opacity="0.34"/>
<path d="M79.9 258.0 q-0.3 -7.8 -0.8 -15.6" stroke="#8A6A3A" stroke-width="0.7" opacity="0.41"/>
<path d="M136.6 208.4 q-1.6 -3.8 -5.4 -7.6" stroke="#9A7440" stroke-width="0.7" opacity="0.28"/>
<path d="M145.8 306.0 q-0.2 -4.3 -0.7 -8.6" stroke="#DCC08C" stroke-width="0.7" opacity="0.29"/>
<path d="M33.9 151.8 q2.3 -10.3 7.5 -20.5" stroke="#D4B47A" stroke-width="0.9" opacity="0.39"/>
<path d="M348.8 192.8 q2.9 -6.5 9.7 -13.1" stroke="#8A6A3A" stroke-width="1.0" opacity="0.25"/>
<path d="M3.9 299.0 q0.9 -8.0 2.9 -16.1" stroke="#A88450" stroke-width="0.8" opacity="0.36"/>
<path d="M116.1 172.5 q0.7 -3.0 2.4 -6.0" stroke="#C8A468" stroke-width="0.7" opacity="0.27"/>
<path d="M301.2 287.0 q-2.8 -9.3 -9.3 -18.6" stroke="#A88450" stroke-width="1.2" opacity="0.41"/>
<path d="M154.2 179.9 q-1.4 -9.3 -4.8 -18.6" stroke="#9A7440" stroke-width="1.3" opacity="0.23"/>
<path d="M395.5 191.1 q-1.1 -3.0 -3.6 -5.9" stroke="#A88450" stroke-width="1.4" opacity="0.43"/>
<path d="M190.3 158.2 q-0.3 -4.7 -1.0 -9.4" stroke="#A88450" stroke-width="0.8" opacity="0.24"/>
<path d="M274.3 163.0 q-2.3 -7.6 -7.7 -15.2" stroke="#8A6A3A" stroke-width="0.9" opacity="0.36"/>
<path d="M462.1 287.8 q-1.6 -6.3 -5.3 -12.6" stroke="#9A7440" stroke-width="1.3" opacity="0.20"/>
<path d="M403.7 277.5 q-1.1 -6.1 -3.8 -12.2" stroke="#A88450" stroke-width="1.2" opacity="0.21"/>
<path d="M420.4 160.2 q1.1 -2.5 3.7 -4.9" stroke="#C8A468" stroke-width="0.7" opacity="0.43"/>
<path d="M139.6 221.8 q-1.0 -7.3 -3.2 -14.7" stroke="#C8A468" stroke-width="1.0" opacity="0.32"/>
<path d="M243.9 219.4 q0.8 -7.2 2.5 -14.3" stroke="#C8A468" stroke-width="1.4" opacity="0.44"/>
<path d="M292.6 281.4 q0.5 -3.4 1.7 -6.7" stroke="#DCC08C" stroke-width="1.1" opacity="0.36"/>
<path d="M198.8 209.7 q-2.4 -7.2 -8.0 -14.4" stroke="#9A7440" stroke-width="1.1" opacity="0.33"/>
<path d="M400.3 186.0 q1.4 -8.6 4.7 -17.2" stroke="#C8A468" stroke-width="0.9" opacity="0.37"/>
<path d="M274.1 217.5 q0.4 -7.2 1.3 -14.4" stroke="#8A6A3A" stroke-width="0.8" opacity="0.27"/>
<path d="M457.1 182.9 q-2.1 -8.3 -6.8 -16.6" stroke="#9A7440" stroke-width="0.8" opacity="0.36"/>
<path d="M316.4 264.9 q-0.2 -4.8 -0.6 -9.6" stroke="#DCC08C" stroke-width="0.7" opacity="0.34"/>
<path d="M242.2 245.3 q-0.3 -3.6 -0.9 -7.2" stroke="#D4B47A" stroke-width="0.7" opacity="0.40"/>
<path d="M237.5 232.2 q3.4 -7.9 11.4 -15.7" stroke="#A88450" stroke-width="1.2" opacity="0.45"/>
<path d="M48.2 284.5 q-1.6 -5.5 -5.5 -11.0" stroke="#C8A468" stroke-width="1.2" opacity="0.34"/>
<path d="M64.6 275.7 q-0.7 -3.2 -2.5 -6.5" stroke="#9A7440" stroke-width="1.2" opacity="0.21"/>
<path d="M451.1 224.5 q-1.2 -3.5 -3.9 -6.9" stroke="#D4B47A" stroke-width="1.3" opacity="0.36"/>
<path d="M265.7 298.6 q-2.7 -8.9 -8.9 -17.8" stroke="#A88450" stroke-width="1.2" opacity="0.41"/>
<path d="M347.4 151.9 q-1.1 -4.7 -3.6 -9.4" stroke="#DCC08C" stroke-width="1.4" opacity="0.38"/>
<path d="M340.7 157.0 q-2.5 -6.6 -8.3 -13.3" stroke="#DCC08C" stroke-width="1.1" opacity="0.28"/>
<path d="M16.1 297.5 q-0.6 -4.8 -2.0 -9.7" stroke="#A88450" stroke-width="1.3" opacity="0.31"/>
<path d="M274.4 168.4 q-1.0 -2.7 -3.3 -5.4" stroke="#9A7440" stroke-width="1.0" opacity="0.25"/>
<path d="M136.9 261.3 q-1.7 -5.3 -5.8 -10.6" stroke="#9A7440" stroke-width="1.2" opacity="0.33"/>
<path d="M381.5 303.7 q-0.4 -3.0 -1.4 -6.1" stroke="#C8A468" stroke-width="1.0" opacity="0.32"/>
<path d="M14.9 285.6 q0.4 -3.5 1.2 -7.1" stroke="#A88450" stroke-width="0.9" opacity="0.37"/>
<path d="M224.6 175.6 q-0.9 -9.7 -2.9 -19.3" stroke="#DCC08C" stroke-width="0.9" opacity="0.33"/>
<path d="M249.3 200.4 q0.4 -4.0 1.4 -8.0" stroke="#C8A468" stroke-width="0.9" opacity="0.24"/>
<path d="M220.8 243.5 q-0.7 -6.0 -2.5 -12.0" stroke="#D4B47A" stroke-width="1.0" opacity="0.28"/>
<path d="M107.0 190.3 q0.9 -9.9 3.0 -19.8" stroke="#A88450" stroke-width="1.1" opacity="0.24"/>
<path d="M128.7 194.3 q-1.4 -6.6 -4.6 -13.2" stroke="#DCC08C" stroke-width="1.1" opacity="0.34"/>
<path d="M65.7 263.2 q3.3 -8.7 11.0 -17.4" stroke="#D4B47A" stroke-width="1.2" opacity="0.42"/>
<path d="M298.8 252.8 q-1.1 -5.6 -3.6 -11.3" stroke="#C8A468" stroke-width="1.4" opacity="0.42"/>
<path d="M321.6 199.2 q1.8 -8.6 6.0 -17.2" stroke="#DCC08C" stroke-width="0.8" opacity="0.41"/>
<path d="M412.0 265.9 q1.0 -5.4 3.2 -10.9" stroke="#A88450" stroke-width="1.4" opacity="0.28"/>
<path d="M227.3 209.5 q-1.1 -4.6 -3.6 -9.2" stroke="#9A7440" stroke-width="0.8" opacity="0.24"/>
<path d="M419.5 258.8 q-0.5 -6.2 -1.8 -12.3" stroke="#9A7440" stroke-width="1.1" opacity="0.43"/>
<path d="M67.9 266.6 q0.3 -5.0 1.0 -10.0" stroke="#A88450" stroke-width="0.9" opacity="0.43"/>
<path d="M434.8 244.5 q-0.9 -3.3 -3.2 -6.6" stroke="#DCC08C" stroke-width="1.0" opacity="0.29"/>
<path d="M458.1 261.8 q2.9 -7.3 9.8 -14.6" stroke="#8A6A3A" stroke-width="0.7" opacity="0.28"/>
<path d="M423.7 238.5 q1.0 -8.9 3.2 -17.9" stroke="#C8A468" stroke-width="0.8" opacity="0.38"/>
<path d="M188.6 182.5 q2.3 -6.8 7.6 -13.7" stroke="#A88450" stroke-width="0.8" opacity="0.22"/>
<path d="M26.8 170.9 q-1.1 -2.8 -3.8 -5.6" stroke="#DCC08C" stroke-width="0.7" opacity="0.29"/>
<path d="M88.8 237.0 q1.2 -9.8 3.9 -19.6" stroke="#D4B47A" stroke-width="0.9" opacity="0.25"/>
<path d="M353.7 255.1 q0.9 -6.0 3.1 -12.1" stroke="#9A7440" stroke-width="1.3" opacity="0.24"/>
<path d="M375.8 164.1 q1.8 -7.3 6.0 -14.6" stroke="#DCC08C" stroke-width="1.4" opacity="0.30"/>
<path d="M412.2 154.2 q0.7 -5.4 2.4 -10.8" stroke="#9A7440" stroke-width="1.1" opacity="0.21"/>
<path d="M341.8 203.3 q-1.0 -3.3 -3.5 -6.6" stroke="#C8A468" stroke-width="1.3" opacity="0.33"/>
<path d="M168.9 208.6 q0.9 -5.6 2.9 -11.1" stroke="#DCC08C" stroke-width="1.4" opacity="0.24"/>
<path d="M271.4 187.3 q2.0 -7.2 6.8 -14.4" stroke="#8A6A3A" stroke-width="1.2" opacity="0.39"/>
<path d="M146.0 275.2 q-0.4 -10.8 -1.4 -21.6" stroke="#9A7440" stroke-width="1.0" opacity="0.29"/>
<path d="M129.3 191.0 q-2.4 -6.3 -7.9 -12.6" stroke="#9A7440" stroke-width="1.1" opacity="0.24"/>
<path d="M189.2 308.6 q1.1 -10.3 3.6 -20.7" stroke="#D4B47A" stroke-width="1.0" opacity="0.22"/>
<path d="M262.1 179.5 q-1.2 -10.3 -3.9 -20.7" stroke="#C8A468" stroke-width="1.3" opacity="0.43"/>
<path d="M403.9 276.2 q-0.9 -7.1 -3.0 -14.1" stroke="#A88450" stroke-width="1.4" opacity="0.26"/>
<path d="M235.5 253.1 q1.4 -5.3 4.7 -10.5" stroke="#8A6A3A" stroke-width="1.2" opacity="0.25"/>
<path d="M12.5 256.9 q0.8 -2.8 2.6 -5.7" stroke="#8A6A3A" stroke-width="0.9" opacity="0.37"/>
<path d="M107.7 210.9 q-1.1 -10.1 -3.6 -20.2" stroke="#A88450" stroke-width="0.8" opacity="0.36"/>
<path d="M118.9 192.5 q-1.4 -6.0 -4.8 -12.0" stroke="#C8A468" stroke-width="0.9" opacity="0.28"/>
<path d="M131.5 292.5 q2.6 -5.5 8.7 -10.9" stroke="#C8A468" stroke-width="1.3" opacity="0.32"/>
<path d="M363.1 304.6 q-0.7 -3.9 -2.3 -7.9" stroke="#D4B47A" stroke-width="1.0" opacity="0.28"/>
<path d="M420.5 176.2 q0.7 -8.4 2.3 -16.8" stroke="#8A6A3A" stroke-width="0.6" opacity="0.25"/>
<path d="M369.2 287.9 q-3.2 -7.2 -10.5 -14.3" stroke="#8A6A3A" stroke-width="1.3" opacity="0.25"/>
<path d="M469.6 198.2 q-1.0 -2.7 -3.3 -5.5" stroke="#D4B47A" stroke-width="0.8" opacity="0.23"/>
<path d="M237.2 207.0 q-0.3 -9.0 -0.9 -18.0" stroke="#8A6A3A" stroke-width="0.9" opacity="0.22"/>
<path d="M433.5 266.0 q3.8 -7.9 12.5 -15.7" stroke="#D4B47A" stroke-width="0.8" opacity="0.35"/>
<path d="M296.1 152.5 q0.3 -4.0 1.1 -8.1" stroke="#DCC08C" stroke-width="0.7" opacity="0.31"/>
<path d="M9.4 310.5 q1.7 -4.8 5.6 -9.5" stroke="#D4B47A" stroke-width="1.4" opacity="0.44"/>
<path d="M248.0 150.4 q0.2 -4.8 0.5 -9.6" stroke="#A88450" stroke-width="1.0" opacity="0.38"/>
<path d="M53.0 207.3 q2.3 -5.8 7.7 -11.6" stroke="#9A7440" stroke-width="1.3" opacity="0.44"/>
<path d="M458.8 186.3 q0.6 -3.4 2.0 -6.9" stroke="#D4B47A" stroke-width="0.7" opacity="0.27"/>
<path d="M20.4 232.4 q0.3 -6.2 1.0 -12.5" stroke="#9A7440" stroke-width="0.9" opacity="0.27"/>
<path d="M19.5 223.5 q-0.7 -5.1 -2.5 -10.2" stroke="#8A6A3A" stroke-width="1.3" opacity="0.45"/>
<path d="M338.8 214.7 q-0.4 -5.5 -1.3 -11.0" stroke="#C8A468" stroke-width="0.9" opacity="0.30"/>
<path d="M193.5 173.2 q-4.2 -8.5 -14.0 -16.9" stroke="#DCC08C" stroke-width="1.4" opacity="0.33"/>
<path d="M327.4 268.3 q2.9 -9.8 9.6 -19.6" stroke="#A88450" stroke-width="1.3" opacity="0.23"/>
<path d="M370.0 297.2 q0.5 -3.3 1.8 -6.5" stroke="#9A7440" stroke-width="1.0" opacity="0.37"/>
<path d="M315.3 223.8 q-0.2 -7.6 -0.6 -15.2" stroke="#A88450" stroke-width="1.0" opacity="0.41"/>
<path d="M279.6 311.1 q0.5 -4.8 1.8 -9.6" stroke="#A88450" stroke-width="0.9" opacity="0.42"/>
<path d="M30.3 308.1 q0.7 -5.0 2.3 -10.0" stroke="#9A7440" stroke-width="1.2" opacity="0.22"/>
<path d="M313.5 299.7 q-1.8 -8.6 -6.0 -17.2" stroke="#8A6A3A" stroke-width="0.9" opacity="0.41"/>
<path d="M278.2 242.5 q-3.8 -9.0 -12.6 -18.1" stroke="#DCC08C" stroke-width="0.8" opacity="0.29"/>
<path d="M79.8 209.3 q-2.4 -7.4 -7.8 -14.8" stroke="#A88450" stroke-width="1.1" opacity="0.32"/>
<path d="M390.6 294.8 q-3.6 -8.0 -11.9 -16.0" stroke="#8A6A3A" stroke-width="1.3" opacity="0.29"/>
<path d="M202.0 216.4 q-0.9 -8.5 -3.0 -17.0" stroke="#9A7440" stroke-width="1.2" opacity="0.29"/>
<path d="M246.1 223.4 q-0.3 -3.7 -1.1 -7.3" stroke="#8A6A3A" stroke-width="1.0" opacity="0.37"/>
<path d="M225.8 279.3 q-2.6 -8.0 -8.5 -16.0" stroke="#A88450" stroke-width="1.0" opacity="0.23"/>
<path d="M311.6 250.9 q1.8 -6.6 5.9 -13.1" stroke="#9A7440" stroke-width="0.8" opacity="0.20"/>
<path d="M269.3 159.4 q0.8 -4.2 2.7 -8.4" stroke="#9A7440" stroke-width="0.8" opacity="0.43"/>
<path d="M125.3 221.0 q-0.0 -7.2 -0.1 -14.4" stroke="#D4B47A" stroke-width="0.9" opacity="0.25"/>
<path d="M374.0 250.1 q-2.1 -4.8 -7.1 -9.6" stroke="#8A6A3A" stroke-width="0.6" opacity="0.29"/>
<path d="M355.5 307.1 q0.6 -6.4 1.9 -12.7" stroke="#9A7440" stroke-width="0.9" opacity="0.29"/>
<path d="M273.1 299.8 q1.7 -3.6 5.6 -7.2" stroke="#A88450" stroke-width="0.7" opacity="0.35"/>
<path d="M95.9 289.3 q-0.2 -3.6 -0.6 -7.3" stroke="#8A6A3A" stroke-width="1.0" opacity="0.33"/>
<path d="M425.4 272.6 q0.2 -3.2 0.8 -6.4" stroke="#8A6A3A" stroke-width="1.2" opacity="0.43"/>
<path d="M205.8 311.2 q-1.5 -3.6 -5.0 -7.2" stroke="#8A6A3A" stroke-width="1.0" opacity="0.32"/>
<path d="M389.2 258.6 q-0.7 -8.8 -2.4 -17.7" stroke="#D4B47A" stroke-width="0.8" opacity="0.43"/>
<path d="M155.8 212.8 q-2.2 -5.6 -7.3 -11.2" stroke="#D4B47A" stroke-width="0.6" opacity="0.34"/>
<path d="M234.6 287.4 q-0.2 -4.7 -0.6 -9.4" stroke="#A88450" stroke-width="0.9" opacity="0.25"/>
<path d="M407.3 239.2 q2.5 -8.0 8.3 -15.9" stroke="#C8A468" stroke-width="1.3" opacity="0.45"/>
<path d="M411.6 173.6 q0.1 -5.7 0.3 -11.3" stroke="#D4B47A" stroke-width="1.0" opacity="0.25"/>
<path d="M245.4 164.0 q0.8 -5.9 2.8 -11.8" stroke="#9A7440" stroke-width="1.0" opacity="0.34"/>
<path d="M198.3 158.3 q1.6 -4.7 5.3 -9.5" stroke="#8A6A3A" stroke-width="0.8" opacity="0.41"/>
<path d="M95.3 158.4 q-0.8 -7.2 -2.6 -14.4" stroke="#8A6A3A" stroke-width="1.2" opacity="0.36"/>
<path d="M66.7 300.7 q-0.2 -5.7 -0.7 -11.4" stroke="#A88450" stroke-width="0.6" opacity="0.34"/>
<path d="M148.3 236.4 q0.3 -6.2 1.1 -12.5" stroke="#9A7440" stroke-width="0.8" opacity="0.21"/>
<path d="M207.3 182.5 q1.7 -3.7 5.8 -7.4" stroke="#DCC08C" stroke-width="1.3" opacity="0.31"/>
<path d="M210.0 292.2 q-0.2 -3.4 -0.6 -6.9" stroke="#A88450" stroke-width="0.7" opacity="0.23"/>
<path d="M415.3 281.9 q-2.6 -5.4 -8.8 -10.8" stroke="#A88450" stroke-width="1.2" opacity="0.34"/>
<path d="M235.2 259.2 q-1.4 -8.1 -4.8 -16.1" stroke="#C8A468" stroke-width="0.7" opacity="0.33"/>
<path d="M367.0 265.9 q-0.2 -7.1 -0.7 -14.2" stroke="#C8A468" stroke-width="1.4" opacity="0.40"/>
<path d="M195.7 256.7 q1.6 -4.3 5.4 -8.5" stroke="#A88450" stroke-width="1.3" opacity="0.31"/>
<path d="M436.1 171.6 q-0.2 -4.3 -0.6 -8.5" stroke="#C8A468" stroke-width="1.2" opacity="0.42"/>
<path d="M333.7 266.5 q-1.1 -5.2 -3.6 -10.3" stroke="#DCC08C" stroke-width="0.7" opacity="0.41"/>
<path d="M377.3 308.8 q-2.2 -4.9 -7.5 -9.7" stroke="#8A6A3A" stroke-width="0.8" opacity="0.24"/>
<path d="M309.1 262.5 q-1.3 -4.0 -4.3 -8.1" stroke="#C8A468" stroke-width="1.1" opacity="0.31"/>
<path d="M54.0 284.2 q1.3 -3.3 4.4 -6.6" stroke="#A88450" stroke-width="1.0" opacity="0.43"/>
<path d="M137.2 206.4 q-0.0 -9.0 -0.1 -18.0" stroke="#D4B47A" stroke-width="0.8" opacity="0.25"/>
<path d="M143.0 244.6 q-2.2 -8.3 -7.3 -16.5" stroke="#8A6A3A" stroke-width="1.3" opacity="0.27"/>
<path d="M399.0 186.8 q-3.8 -8.2 -12.7 -16.5" stroke="#DCC08C" stroke-width="0.6" opacity="0.23"/>
<path d="M91.7 174.7 q-1.4 -4.8 -4.8 -9.7" stroke="#9A7440" stroke-width="0.8" opacity="0.31"/>
<path d="M350.4 179.0 q-1.6 -8.9 -5.2 -17.9" stroke="#D4B47A" stroke-width="1.0" opacity="0.38"/>
<path d="M352.6 168.3 q-0.4 -4.2 -1.3 -8.5" stroke="#D4B47A" stroke-width="1.0" opacity="0.21"/>
<path d="M45.9 254.8 q0.3 -4.0 0.9 -8.1" stroke="#9A7440" stroke-width="1.2" opacity="0.22"/>
<path d="M346.6 208.2 q-2.7 -7.0 -9.0 -13.9" stroke="#D4B47A" stroke-width="1.3" opacity="0.41"/>
<path d="M226.7 174.1 q1.1 -3.2 3.8 -6.5" stroke="#D4B47A" stroke-width="0.8" opacity="0.24"/>
<path d="M255.4 202.5 q0.3 -4.9 0.9 -9.9" stroke="#D4B47A" stroke-width="0.9" opacity="0.33"/>
<path d="M93.3 215.4 q-1.4 -4.0 -4.6 -8.0" stroke="#C8A468" stroke-width="1.0" opacity="0.38"/>
<path d="M113.1 165.4 q-1.3 -3.1 -4.5 -6.2" stroke="#A88450" stroke-width="1.2" opacity="0.34"/>
<path d="M108.2 271.5 q-0.8 -4.0 -2.7 -8.0" stroke="#D4B47A" stroke-width="1.1" opacity="0.31"/>
<path d="M51.7 242.3 q0.5 -3.9 1.8 -7.7" stroke="#C8A468" stroke-width="1.1" opacity="0.26"/>
<path d="M370.1 265.1 q-0.7 -3.3 -2.4 -6.6" stroke="#DCC08C" stroke-width="0.7" opacity="0.28"/>
<path d="M101.4 275.2 q-0.7 -4.2 -2.4 -8.5" stroke="#D4B47A" stroke-width="1.0" opacity="0.40"/>
<path d="M434.6 151.7 q-0.8 -10.4 -2.6 -20.9" stroke="#8A6A3A" stroke-width="1.2" opacity="0.21"/>
<path d="M69.9 232.8 q1.1 -4.0 3.5 -7.9" stroke="#C8A468" stroke-width="1.3" opacity="0.25"/>
<path d="M323.8 264.8 q-1.4 -2.7 -4.5 -5.4" stroke="#8A6A3A" stroke-width="1.0" opacity="0.21"/>
<path d="M155.8 161.2 q-2.7 -6.4 -9.0 -12.8" stroke="#A88450" stroke-width="0.9" opacity="0.21"/>
<path d="M194.2 255.5 q0.7 -10.7 2.5 -21.4" stroke="#8A6A3A" stroke-width="1.2" opacity="0.37"/>
<path d="M63.7 284.2 q3.4 -8.9 11.3 -17.7" stroke="#A88450" stroke-width="1.2" opacity="0.32"/>
<path d="M321.0 176.7 q0.7 -6.0 2.4 -11.9" stroke="#DCC08C" stroke-width="1.4" opacity="0.27"/>
<path d="M250.9 303.2 q1.4 -3.1 4.8 -6.2" stroke="#9A7440" stroke-width="1.3" opacity="0.39"/>
<path d="M113.3 245.2 q2.3 -6.5 7.6 -12.9" stroke="#DCC08C" stroke-width="1.1" opacity="0.43"/>
<path d="M335.3 213.5 q2.2 -8.5 7.4 -17.0" stroke="#A88450" stroke-width="0.9" opacity="0.39"/>
<path d="M178.9 303.6 q0.7 -4.7 2.3 -9.4" stroke="#9A7440" stroke-width="1.3" opacity="0.37"/>
<path d="M201.4 199.4 q0.5 -5.3 1.6 -10.7" stroke="#D4B47A" stroke-width="1.0" opacity="0.42"/>
<path d="M193.9 198.5 q0.2 -4.2 0.5 -8.3" stroke="#D4B47A" stroke-width="1.3" opacity="0.29"/>
</g><g filter="url(#bl2)">
<ellipse cx="345" cy="232" rx="35" ry="22" fill="#9C7C48" opacity="0.55"/>
<ellipse cx="440" cy="245" rx="35" ry="25" fill="#9A7A46" opacity="0.5"/>
<ellipse cx="350" cy="215" rx="18" ry="12" fill="#94A058" opacity="0.45"/>
<ellipse cx="430" cy="230" rx="16" ry="14" fill="#94A058" opacity="0.4"/>
<ellipse cx="40" cy="230" rx="40" ry="30" fill="#A08050" opacity="0.5"/>
<ellipse cx="150" cy="290" rx="60" ry="20" fill="#A07E4C" opacity="0.5"/>
<ellipse cx="300" cy="300" rx="60" ry="15" fill="#A88650" opacity="0.4"/>
<ellipse cx="60" cy="290" rx="50" ry="20" fill="#9C784A" opacity="0.45"/>
<ellipse cx="145" cy="242" rx="62" ry="20" fill="#8A6A3C" opacity="0.4"/>
</g><g filter="url(#bl3)" stroke-linecap="round" fill="none">
<path d="M292.3 232.7 q-0.7 -2.7 -2.4 -5.5" stroke="#8C6C3C" stroke-width="0.8" opacity="0.46"/>
<path d="M114.1 224.2 q-0.8 -5.8 -2.6 -11.6" stroke="#D8BC84" stroke-width="0.8" opacity="0.40"/>
<path d="M71.2 218.8 q1.4 -3.7 4.8 -7.5" stroke="#8C6C3C" stroke-width="0.8" opacity="0.40"/>
<path d="M413.6 288.6 q2.1 -4.7 7.0 -9.3" stroke="#D8BC84" stroke-width="0.8" opacity="0.30"/>
<path d="M402.8 211.6 q0.3 -3.8 0.9 -7.7" stroke="#7E5E32" stroke-width="1.0" opacity="0.50"/>
<path d="M464.7 282.3 q1.2 -6.3 3.9 -12.7" stroke="#D8BC84" stroke-width="1.1" opacity="0.57"/>
<path d="M314.5 208.5 q-0.4 -5.9 -1.2 -11.8" stroke="#7E5E32" stroke-width="0.8" opacity="0.50"/>
<path d="M298.3 242.1 q1.0 -5.1 3.4 -10.2" stroke="#8C6C3C" stroke-width="0.8" opacity="0.51"/>
<path d="M8.5 298.0 q-2.8 -5.7 -9.4 -11.4" stroke="#8C6C3C" stroke-width="0.8" opacity="0.53"/>
<path d="M420.6 281.6 q-3.0 -4.4 -9.8 -8.9" stroke="#7E5E32" stroke-width="0.8" opacity="0.30"/>
<path d="M442.1 230.4 q1.4 -2.6 4.8 -5.2" stroke="#E2CA94" stroke-width="1.1" opacity="0.35"/>
<path d="M278.3 310.0 q-1.6 -5.3 -5.3 -10.6" stroke="#E2CA94" stroke-width="0.8" opacity="0.59"/>
<path d="M306.2 290.1 q-0.8 -6.1 -2.7 -12.2" stroke="#7E5E32" stroke-width="0.9" opacity="0.38"/>
<path d="M76.4 264.4 q2.1 -6.1 7.1 -12.2" stroke="#7E5E32" stroke-width="1.0" opacity="0.36"/>
<path d="M381.1 206.9 q0.1 -4.2 0.3 -8.4" stroke="#7E5E32" stroke-width="1.1" opacity="0.48"/>
<path d="M458.5 287.0 q0.9 -4.2 3.1 -8.4" stroke="#7E5E32" stroke-width="0.8" opacity="0.58"/>
<path d="M93.1 235.9 q-1.9 -3.7 -6.4 -7.5" stroke="#7E5E32" stroke-width="0.8" opacity="0.40"/>
<path d="M374.4 252.9 q1.3 -2.2 4.3 -4.5" stroke="#8C6C3C" stroke-width="0.9" opacity="0.42"/>
<path d="M75.4 300.0 q-0.6 -2.5 -2.1 -5.1" stroke="#8C6C3C" stroke-width="0.9" opacity="0.55"/>
<path d="M194.3 208.6 q1.1 -4.3 3.5 -8.6" stroke="#8C6C3C" stroke-width="0.9" opacity="0.39"/>
<path d="M297.5 229.1 q-3.0 -4.6 -9.9 -9.1" stroke="#7E5E32" stroke-width="0.8" opacity="0.58"/>
<path d="M125.3 227.3 q0.2 -2.9 0.5 -5.7" stroke="#8C6C3C" stroke-width="1.0" opacity="0.51"/>
<path d="M439.0 218.6 q0.8 -3.2 2.7 -6.4" stroke="#E2CA94" stroke-width="1.0" opacity="0.42"/>
<path d="M443.8 283.2 q-0.5 -4.3 -1.7 -8.6" stroke="#7E5E32" stroke-width="0.8" opacity="0.36"/>
<path d="M411.4 259.6 q1.0 -5.1 3.2 -10.2" stroke="#7E5E32" stroke-width="0.7" opacity="0.40"/>
<path d="M31.1 246.3 q1.9 -4.2 6.2 -8.5" stroke="#D8BC84" stroke-width="0.9" opacity="0.42"/>
<path d="M270.8 230.7 q2.1 -6.2 7.1 -12.4" stroke="#D8BC84" stroke-width="0.7" opacity="0.50"/>
<path d="M355.9 256.1 q2.9 -5.6 9.8 -11.2" stroke="#8C6C3C" stroke-width="1.0" opacity="0.34"/>
<path d="M332.3 278.8 q-1.4 -5.4 -4.6 -10.8" stroke="#E2CA94" stroke-width="1.0" opacity="0.48"/>
<path d="M240.3 268.1 q-1.5 -7.0 -5.0 -14.1" stroke="#7E5E32" stroke-width="0.9" opacity="0.59"/>
<path d="M378.6 240.3 q-2.7 -4.6 -8.8 -9.1" stroke="#7E5E32" stroke-width="0.7" opacity="0.44"/>
<path d="M360.6 250.0 q2.4 -3.4 8.0 -6.9" stroke="#E2CA94" stroke-width="0.6" opacity="0.55"/>
<path d="M52.2 225.1 q-1.0 -5.7 -3.4 -11.4" stroke="#7E5E32" stroke-width="0.9" opacity="0.37"/>
<path d="M262.7 291.9 q1.8 -2.7 6.1 -5.3" stroke="#E2CA94" stroke-width="0.7" opacity="0.35"/>
<path d="M382.7 230.0 q2.0 -3.1 6.7 -6.2" stroke="#7E5E32" stroke-width="1.0" opacity="0.48"/>
<path d="M188.9 257.4 q-1.6 -5.1 -5.4 -10.1" stroke="#E2CA94" stroke-width="1.0" opacity="0.59"/>
<path d="M155.5 310.5 q-0.1 -2.9 -0.2 -5.8" stroke="#D8BC84" stroke-width="0.8" opacity="0.59"/>
<path d="M415.5 269.2 q0.4 -3.5 1.5 -6.9" stroke="#E2CA94" stroke-width="0.8" opacity="0.38"/>
<path d="M91.7 282.4 q-0.4 -5.3 -1.2 -10.6" stroke="#D8BC84" stroke-width="1.0" opacity="0.52"/>
<path d="M365.0 222.5 q2.3 -5.5 7.6 -10.9" stroke="#7E5E32" stroke-width="1.0" opacity="0.58"/>
<path d="M434.2 280.9 q-2.7 -4.6 -9.1 -9.1" stroke="#D8BC84" stroke-width="0.8" opacity="0.55"/>
<path d="M302.8 283.7 q0.3 -5.4 1.1 -10.9" stroke="#D8BC84" stroke-width="0.9" opacity="0.39"/>
<path d="M167.4 211.8 q1.3 -6.2 4.4 -12.4" stroke="#8C6C3C" stroke-width="1.0" opacity="0.54"/>
<path d="M214.8 211.4 q-1.1 -2.5 -3.6 -5.0" stroke="#8C6C3C" stroke-width="0.8" opacity="0.32"/>
<path d="M159.4 235.7 q3.4 -4.9 11.2 -9.7" stroke="#E2CA94" stroke-width="0.9" opacity="0.38"/>
<path d="M183.6 239.6 q2.6 -4.3 8.7 -8.6" stroke="#D8BC84" stroke-width="1.0" opacity="0.58"/>
<path d="M462.8 248.9 q-0.8 -6.4 -2.7 -12.8" stroke="#8C6C3C" stroke-width="0.7" opacity="0.30"/>
<path d="M101.0 265.6 q-2.1 -2.9 -7.1 -5.8" stroke="#E2CA94" stroke-width="0.8" opacity="0.31"/>
<path d="M419.6 259.8 q-0.5 -2.7 -1.8 -5.5" stroke="#8C6C3C" stroke-width="0.8" opacity="0.49"/>
<path d="M97.1 227.3 q-0.9 -7.3 -3.1 -14.6" stroke="#E2CA94" stroke-width="0.6" opacity="0.56"/>
<path d="M446.0 249.3 q2.3 -4.1 7.8 -8.2" stroke="#8C6C3C" stroke-width="1.0" opacity="0.47"/>
<path d="M339.5 296.5 q0.6 -3.3 1.9 -6.6" stroke="#D8BC84" stroke-width="1.0" opacity="0.44"/>
<path d="M415.7 267.9 q-0.0 -3.2 -0.0 -6.3" stroke="#8C6C3C" stroke-width="0.6" opacity="0.37"/>
<path d="M465.8 225.6 q1.4 -4.0 4.6 -8.1" stroke="#D8BC84" stroke-width="0.9" opacity="0.52"/>
<path d="M18.1 210.5 q2.4 -6.7 8.2 -13.5" stroke="#E2CA94" stroke-width="0.8" opacity="0.42"/>
<path d="M444.2 307.5 q-3.0 -4.6 -9.9 -9.2" stroke="#8C6C3C" stroke-width="0.7" opacity="0.35"/>
<path d="M8.6 284.8 q1.4 -2.0 4.6 -4.0" stroke="#E2CA94" stroke-width="0.7" opacity="0.54"/>
<path d="M76.8 257.4 q0.9 -2.7 3.0 -5.4" stroke="#8C6C3C" stroke-width="1.1" opacity="0.30"/>
<path d="M401.9 262.3 q0.0 -7.0 0.1 -14.0" stroke="#E2CA94" stroke-width="1.0" opacity="0.50"/>
<path d="M290.3 251.2 q0.4 -6.2 1.3 -12.3" stroke="#D8BC84" stroke-width="0.6" opacity="0.55"/>
<path d="M383.1 251.3 q0.5 -3.1 1.7 -6.1" stroke="#D8BC84" stroke-width="0.9" opacity="0.59"/>
<path d="M289.2 209.7 q1.0 -5.1 3.4 -10.2" stroke="#E2CA94" stroke-width="1.0" opacity="0.55"/>
<path d="M400.4 211.4 q-0.9 -4.2 -3.1 -8.5" stroke="#7E5E32" stroke-width="0.7" opacity="0.48"/>
<path d="M461.9 286.1 q-1.1 -1.8 -3.5 -3.7" stroke="#E2CA94" stroke-width="0.9" opacity="0.53"/>
<path d="M101.0 243.2 q3.3 -5.7 10.9 -11.4" stroke="#D8BC84" stroke-width="1.1" opacity="0.52"/>
<path d="M376.0 302.2 q1.6 -6.6 5.4 -13.1" stroke="#E2CA94" stroke-width="0.9" opacity="0.34"/>
<path d="M430.1 289.7 q0.4 -2.7 1.2 -5.5" stroke="#7E5E32" stroke-width="0.8" opacity="0.51"/>
<path d="M119.2 233.7 q-0.8 -4.2 -2.7 -8.4" stroke="#E2CA94" stroke-width="0.7" opacity="0.35"/>
<path d="M446.8 273.5 q0.7 -5.0 2.2 -10.0" stroke="#7E5E32" stroke-width="0.7" opacity="0.37"/>
<path d="M194.7 202.3 q1.4 -2.9 4.8 -5.8" stroke="#7E5E32" stroke-width="0.6" opacity="0.53"/>
<path d="M112.7 238.4 q-1.0 -2.4 -3.4 -4.8" stroke="#E2CA94" stroke-width="1.0" opacity="0.39"/>
<path d="M295.9 241.1 q2.4 -3.6 8.1 -7.3" stroke="#D8BC84" stroke-width="0.7" opacity="0.32"/>
<path d="M313.2 227.4 q3.2 -5.4 10.6 -10.8" stroke="#E2CA94" stroke-width="0.9" opacity="0.37"/>
<path d="M356.4 299.2 q-0.5 -6.4 -1.6 -12.8" stroke="#E2CA94" stroke-width="1.1" opacity="0.35"/>
<path d="M206.7 276.9 q1.6 -5.7 5.4 -11.4" stroke="#8C6C3C" stroke-width="0.7" opacity="0.38"/>
<path d="M13.1 277.4 q-0.9 -3.3 -3.1 -6.6" stroke="#D8BC84" stroke-width="0.9" opacity="0.48"/>
<path d="M328.0 234.0 q-1.2 -2.0 -4.0 -4.1" stroke="#E2CA94" stroke-width="0.6" opacity="0.32"/>
<path d="M263.0 280.9 q0.1 -6.1 0.2 -12.1" stroke="#7E5E32" stroke-width="1.1" opacity="0.44"/>
<path d="M424.8 228.6 q1.0 -4.4 3.2 -8.8" stroke="#D8BC84" stroke-width="0.8" opacity="0.52"/>
<path d="M44.8 304.4 q1.5 -3.6 4.9 -7.2" stroke="#E2CA94" stroke-width="0.8" opacity="0.54"/>
<path d="M50.3 223.4 q-0.8 -4.2 -2.6 -8.5" stroke="#E2CA94" stroke-width="1.0" opacity="0.32"/>
<path d="M42.2 287.6 q-1.2 -5.8 -4.1 -11.6" stroke="#7E5E32" stroke-width="0.7" opacity="0.34"/>
<path d="M45.8 310.1 q0.7 -4.4 2.5 -8.9" stroke="#D8BC84" stroke-width="0.6" opacity="0.39"/>
<path d="M126.7 304.2 q-1.2 -7.4 -3.9 -14.8" stroke="#D8BC84" stroke-width="0.7" opacity="0.54"/>
<path d="M118.8 241.0 q-2.1 -4.1 -6.9 -8.2" stroke="#D8BC84" stroke-width="1.1" opacity="0.35"/>
<path d="M359.1 304.4 q0.4 -2.6 1.4 -5.1" stroke="#D8BC84" stroke-width="1.0" opacity="0.56"/>
<path d="M113.7 300.0 q-1.8 -2.5 -6.1 -5.0" stroke="#E2CA94" stroke-width="0.9" opacity="0.55"/>
<path d="M110.8 203.3 q-1.9 -3.8 -6.3 -7.6" stroke="#8C6C3C" stroke-width="0.9" opacity="0.45"/>
<path d="M191.0 254.3 q3.1 -5.6 10.2 -11.2" stroke="#8C6C3C" stroke-width="0.8" opacity="0.34"/>
<path d="M32.1 240.4 q2.2 -3.6 7.2 -7.2" stroke="#E2CA94" stroke-width="0.6" opacity="0.37"/>
<path d="M351.3 263.0 q3.2 -4.9 10.8 -9.8" stroke="#8C6C3C" stroke-width="0.7" opacity="0.58"/>
<path d="M247.7 226.9 q1.3 -2.7 4.2 -5.4" stroke="#D8BC84" stroke-width="0.7" opacity="0.44"/>
<path d="M221.1 306.0 q-2.5 -5.4 -8.4 -10.7" stroke="#8C6C3C" stroke-width="0.9" opacity="0.33"/>
<path d="M132.5 288.4 q0.6 -2.7 2.1 -5.4" stroke="#8C6C3C" stroke-width="0.8" opacity="0.35"/>
<path d="M5.1 273.1 q-2.4 -3.5 -8.1 -7.0" stroke="#8C6C3C" stroke-width="0.9" opacity="0.31"/>
<path d="M306.1 286.5 q-2.2 -4.9 -7.4 -9.8" stroke="#7E5E32" stroke-width="0.7" opacity="0.54"/>
<path d="M446.3 282.9 q-1.0 -7.0 -3.4 -14.0" stroke="#D8BC84" stroke-width="0.9" opacity="0.30"/>
<path d="M216.4 281.1 q1.8 -4.0 5.9 -8.0" stroke="#7E5E32" stroke-width="0.8" opacity="0.34"/>
<path d="M90.4 283.9 q2.4 -4.0 8.1 -8.0" stroke="#8C6C3C" stroke-width="0.6" opacity="0.35"/>
<path d="M169.9 254.2 q-0.4 -2.8 -1.3 -5.6" stroke="#8C6C3C" stroke-width="0.9" opacity="0.36"/>
<path d="M427.6 221.5 q-1.0 -4.8 -3.4 -9.6" stroke="#8C6C3C" stroke-width="0.7" opacity="0.59"/>
<path d="M356.7 203.6 q-0.3 -3.4 -1.1 -6.9" stroke="#E2CA94" stroke-width="0.9" opacity="0.53"/>
<path d="M112.5 293.7 q1.1 -2.8 3.6 -5.7" stroke="#8C6C3C" stroke-width="0.8" opacity="0.46"/>
<path d="M182.5 229.2 q-1.3 -5.1 -4.4 -10.3" stroke="#8C6C3C" stroke-width="0.7" opacity="0.34"/>
<path d="M246.5 265.1 q-3.2 -5.2 -10.6 -10.3" stroke="#D8BC84" stroke-width="0.8" opacity="0.32"/>
<path d="M386.8 288.5 q0.3 -3.9 1.0 -7.7" stroke="#D8BC84" stroke-width="1.0" opacity="0.59"/>
<path d="M126.9 305.5 q-2.1 -3.3 -6.9 -6.6" stroke="#E2CA94" stroke-width="1.1" opacity="0.57"/>
<path d="M33.3 284.4 q-1.3 -2.8 -4.2 -5.5" stroke="#E2CA94" stroke-width="0.9" opacity="0.55"/>
<path d="M380.9 273.2 q-2.0 -4.1 -6.8 -8.2" stroke="#D8BC84" stroke-width="0.8" opacity="0.46"/>
<path d="M320.9 241.4 q0.3 -5.3 1.1 -10.7" stroke="#8C6C3C" stroke-width="0.6" opacity="0.57"/>
<path d="M269.2 220.3 q-1.6 -5.7 -5.4 -11.4" stroke="#D8BC84" stroke-width="0.8" opacity="0.59"/>
<path d="M121.5 292.1 q-2.7 -4.4 -9.1 -8.9" stroke="#8C6C3C" stroke-width="0.7" opacity="0.40"/>
<path d="M434.3 249.8 q1.2 -3.9 4.0 -7.8" stroke="#D8BC84" stroke-width="0.8" opacity="0.40"/>
<path d="M458.4 309.6 q1.3 -2.0 4.5 -4.0" stroke="#8C6C3C" stroke-width="0.8" opacity="0.34"/>
<path d="M352.7 241.5 q-0.8 -6.2 -2.7 -12.5" stroke="#8C6C3C" stroke-width="1.0" opacity="0.34"/>
<path d="M105.1 224.1 q-1.8 -2.7 -5.9 -5.3" stroke="#D8BC84" stroke-width="1.0" opacity="0.48"/>
<path d="M305.1 252.6 q-0.9 -4.8 -3.0 -9.5" stroke="#7E5E32" stroke-width="0.8" opacity="0.53"/>
<path d="M148.4 290.9 q1.2 -6.0 3.9 -12.0" stroke="#D8BC84" stroke-width="0.8" opacity="0.34"/>
<path d="M297.1 232.7 q-1.7 -4.8 -5.6 -9.5" stroke="#D8BC84" stroke-width="1.0" opacity="0.59"/>
<path d="M92.7 285.8 q-1.1 -3.8 -3.5 -7.5" stroke="#E2CA94" stroke-width="0.9" opacity="0.55"/>
<path d="M413.1 265.9 q-1.7 -2.3 -5.5 -4.6" stroke="#8C6C3C" stroke-width="1.0" opacity="0.38"/>
<path d="M33.1 200.5 q0.7 -3.2 2.4 -6.5" stroke="#E2CA94" stroke-width="0.7" opacity="0.35"/>
<path d="M425.1 288.0 q-1.7 -2.5 -5.7 -5.0" stroke="#E2CA94" stroke-width="1.1" opacity="0.59"/>
<path d="M70.1 237.6 q-1.0 -5.1 -3.4 -10.2" stroke="#8C6C3C" stroke-width="1.0" opacity="0.56"/>
<path d="M157.2 303.8 q-1.0 -3.6 -3.2 -7.2" stroke="#E2CA94" stroke-width="0.9" opacity="0.51"/>
<path d="M124.1 288.7 q-1.1 -6.2 -3.7 -12.5" stroke="#8C6C3C" stroke-width="0.7" opacity="0.48"/>
<path d="M467.1 290.2 q2.3 -5.4 7.6 -10.9" stroke="#8C6C3C" stroke-width="0.8" opacity="0.52"/>
<path d="M108.3 289.3 q-2.8 -5.1 -9.2 -10.3" stroke="#D8BC84" stroke-width="0.7" opacity="0.51"/>
<path d="M379.5 288.6 q-1.5 -2.8 -5.0 -5.6" stroke="#8C6C3C" stroke-width="0.9" opacity="0.34"/>
<path d="M91.0 265.2 q0.4 -3.0 1.5 -6.0" stroke="#D8BC84" stroke-width="1.0" opacity="0.45"/>
<path d="M246.3 237.2 q-0.8 -2.5 -2.6 -5.0" stroke="#E2CA94" stroke-width="0.7" opacity="0.39"/>
<path d="M302.0 277.4 q2.3 -4.4 7.8 -8.8" stroke="#D8BC84" stroke-width="1.1" opacity="0.60"/>
<path d="M424.1 214.7 q-0.1 -2.8 -0.4 -5.7" stroke="#7E5E32" stroke-width="1.0" opacity="0.51"/>
<path d="M452.5 289.0 q-0.8 -4.0 -2.7 -7.9" stroke="#7E5E32" stroke-width="0.6" opacity="0.48"/>
<path d="M42.1 205.5 q-1.9 -4.3 -6.3 -8.6" stroke="#D8BC84" stroke-width="0.8" opacity="0.36"/>
<path d="M56.4 256.8 q-0.8 -5.2 -2.6 -10.4" stroke="#8C6C3C" stroke-width="0.9" opacity="0.53"/>
<path d="M50.1 207.8 q-0.1 -4.6 -0.3 -9.3" stroke="#7E5E32" stroke-width="1.0" opacity="0.45"/>
<path d="M212.2 295.5 q-0.7 -7.6 -2.2 -15.2" stroke="#7E5E32" stroke-width="0.9" opacity="0.53"/>
<path d="M342.1 235.2 q0.8 -2.5 2.6 -4.9" stroke="#E2CA94" stroke-width="0.9" opacity="0.38"/>
<path d="M17.6 309.9 q-2.8 -5.9 -9.3 -11.8" stroke="#8C6C3C" stroke-width="0.9" opacity="0.31"/>
<path d="M310.4 295.5 q-1.0 -5.9 -3.5 -11.8" stroke="#E2CA94" stroke-width="0.7" opacity="0.51"/>
<path d="M337.9 282.4 q1.1 -2.0 3.6 -4.0" stroke="#D8BC84" stroke-width="0.9" opacity="0.51"/>
<path d="M149.2 291.7 q-0.6 -5.7 -2.0 -11.5" stroke="#D8BC84" stroke-width="0.7" opacity="0.53"/>
<path d="M201.0 237.9 q-0.9 -2.8 -2.8 -5.7" stroke="#E2CA94" stroke-width="0.6" opacity="0.58"/>
<path d="M443.6 280.7 q-1.3 -4.1 -4.4 -8.2" stroke="#D8BC84" stroke-width="0.9" opacity="0.39"/>
<path d="M219.6 280.2 q-2.4 -5.1 -8.1 -10.3" stroke="#D8BC84" stroke-width="1.1" opacity="0.45"/>
<path d="M409.4 257.5 q-3.1 -4.6 -10.4 -9.1" stroke="#8C6C3C" stroke-width="1.0" opacity="0.51"/>
<path d="M460.8 268.9 q1.0 -3.9 3.4 -7.7" stroke="#7E5E32" stroke-width="0.9" opacity="0.50"/>
<path d="M26.6 200.0 q-0.6 -3.6 -2.1 -7.3" stroke="#7E5E32" stroke-width="0.9" opacity="0.57"/>
<path d="M449.4 236.6 q2.3 -6.0 7.8 -12.0" stroke="#7E5E32" stroke-width="1.1" opacity="0.39"/>
<path d="M291.6 244.2 q1.7 -2.8 5.8 -5.7" stroke="#E2CA94" stroke-width="1.1" opacity="0.42"/>
<path d="M300.1 299.4 q-1.8 -6.0 -5.9 -11.9" stroke="#E2CA94" stroke-width="1.1" opacity="0.52"/>
<path d="M356.3 291.1 q0.6 -3.7 2.2 -7.5" stroke="#8C6C3C" stroke-width="0.8" opacity="0.39"/>
<path d="M113.2 279.9 q-2.7 -4.3 -8.9 -8.6" stroke="#D8BC84" stroke-width="1.0" opacity="0.56"/>
<path d="M65.6 305.1 q1.2 -6.3 4.1 -12.5" stroke="#E2CA94" stroke-width="1.0" opacity="0.55"/>
<path d="M462.2 306.0 q-0.2 -5.1 -0.7 -10.1" stroke="#D8BC84" stroke-width="1.0" opacity="0.41"/>
<path d="M30.2 213.3 q2.9 -5.5 9.8 -11.0" stroke="#E2CA94" stroke-width="0.7" opacity="0.32"/>
<path d="M31.9 283.0 q-0.1 -3.6 -0.5 -7.2" stroke="#8C6C3C" stroke-width="0.8" opacity="0.44"/>
<path d="M178.5 271.5 q0.6 -7.3 2.0 -14.6" stroke="#7E5E32" stroke-width="1.0" opacity="0.52"/>
<path d="M147.0 297.9 q-2.2 -4.3 -7.4 -8.6" stroke="#E2CA94" stroke-width="0.8" opacity="0.42"/>
<path d="M415.6 274.5 q-0.5 -3.5 -1.8 -7.1" stroke="#7E5E32" stroke-width="1.1" opacity="0.50"/>
<path d="M407.4 273.3 q-0.2 -5.6 -0.8 -11.2" stroke="#8C6C3C" stroke-width="0.6" opacity="0.34"/>
<path d="M471.4 220.6 q0.1 -4.1 0.2 -8.2" stroke="#7E5E32" stroke-width="0.7" opacity="0.54"/>
<path d="M285.0 206.5 q1.9 -3.2 6.5 -6.3" stroke="#8C6C3C" stroke-width="0.7" opacity="0.49"/>
<path d="M36.3 246.7 q2.0 -2.7 6.7 -5.4" stroke="#D8BC84" stroke-width="0.8" opacity="0.53"/>
<path d="M5.1 297.6 q-0.8 -5.7 -2.5 -11.4" stroke="#D8BC84" stroke-width="0.7" opacity="0.57"/>
<path d="M260.3 285.1 q-1.1 -7.1 -3.6 -14.1" stroke="#E2CA94" stroke-width="0.7" opacity="0.31"/>
<path d="M237.1 300.7 q3.3 -5.1 10.9 -10.2" stroke="#8C6C3C" stroke-width="1.1" opacity="0.47"/>
<path d="M67.8 270.7 q-0.6 -6.9 -1.9 -13.7" stroke="#7E5E32" stroke-width="0.9" opacity="0.37"/>
<path d="M102.2 270.4 q0.8 -2.5 2.6 -4.9" stroke="#7E5E32" stroke-width="1.1" opacity="0.35"/>
<path d="M369.5 260.3 q1.2 -3.2 4.1 -6.3" stroke="#D8BC84" stroke-width="0.9" opacity="0.57"/>
<path d="M95.3 265.6 q1.7 -5.8 5.6 -11.6" stroke="#D8BC84" stroke-width="0.7" opacity="0.55"/>
<path d="M436.6 205.9 q-0.5 -7.7 -1.6 -15.3" stroke="#E2CA94" stroke-width="1.0" opacity="0.57"/>
<path d="M264.0 246.5 q-1.4 -3.5 -4.7 -7.1" stroke="#D8BC84" stroke-width="1.1" opacity="0.40"/>
<path d="M361.8 227.5 q-1.2 -2.9 -4.1 -5.9" stroke="#8C6C3C" stroke-width="0.8" opacity="0.43"/>
<path d="M146.3 271.1 q-1.8 -4.0 -5.9 -7.9" stroke="#7E5E32" stroke-width="0.7" opacity="0.39"/>
<path d="M197.1 294.1 q0.7 -6.6 2.2 -13.3" stroke="#8C6C3C" stroke-width="1.1" opacity="0.44"/>
<path d="M93.4 266.3 q-1.1 -2.7 -3.7 -5.5" stroke="#E2CA94" stroke-width="0.8" opacity="0.42"/>
<path d="M32.9 211.2 q-1.1 -6.3 -3.8 -12.5" stroke="#8C6C3C" stroke-width="0.9" opacity="0.44"/>
<path d="M393.9 261.4 q0.8 -2.4 2.7 -4.8" stroke="#8C6C3C" stroke-width="0.8" opacity="0.49"/>
<path d="M434.3 245.0 q-1.0 -4.6 -3.5 -9.1" stroke="#E2CA94" stroke-width="1.1" opacity="0.34"/>
<path d="M172.7 295.4 q0.7 -6.8 2.2 -13.5" stroke="#D8BC84" stroke-width="0.8" opacity="0.58"/>
<path d="M259.3 245.1 q-1.3 -2.7 -4.5 -5.4" stroke="#E2CA94" stroke-width="0.9" opacity="0.54"/>
<path d="M208.1 230.8 q-2.4 -3.5 -8.2 -7.0" stroke="#7E5E32" stroke-width="0.9" opacity="0.44"/>
<path d="M157.0 243.4 q1.7 -5.1 5.8 -10.2" stroke="#7E5E32" stroke-width="0.6" opacity="0.54"/>
<path d="M31.7 290.8 q-2.8 -3.8 -9.2 -7.6" stroke="#7E5E32" stroke-width="0.7" opacity="0.45"/>
<path d="M443.3 242.3 q-0.9 -2.5 -2.9 -5.1" stroke="#D8BC84" stroke-width="0.7" opacity="0.37"/>
<path d="M27.2 229.5 q1.5 -6.0 5.0 -12.1" stroke="#E2CA94" stroke-width="1.1" opacity="0.47"/>
<path d="M435.2 210.0 q-0.5 -7.5 -1.8 -15.1" stroke="#D8BC84" stroke-width="0.6" opacity="0.45"/>
<path d="M344.7 247.3 q1.3 -5.5 4.4 -11.1" stroke="#D8BC84" stroke-width="0.9" opacity="0.59"/>
<path d="M18.0 206.3 q-1.4 -2.1 -4.8 -4.2" stroke="#D8BC84" stroke-width="0.7" opacity="0.35"/>
<path d="M85.4 268.2 q2.8 -4.1 9.3 -8.2" stroke="#7E5E32" stroke-width="0.7" opacity="0.56"/>
<path d="M153.5 245.8 q-0.1 -5.0 -0.3 -9.9" stroke="#E2CA94" stroke-width="1.1" opacity="0.51"/>
<path d="M82.6 220.1 q-0.5 -3.2 -1.8 -6.4" stroke="#E2CA94" stroke-width="0.8" opacity="0.49"/>
<path d="M427.4 287.7 q2.1 -4.2 7.0 -8.5" stroke="#E2CA94" stroke-width="0.8" opacity="0.56"/>
<path d="M283.7 237.7 q2.0 -3.3 6.7 -6.5" stroke="#E2CA94" stroke-width="1.1" opacity="0.47"/>
<path d="M67.2 219.6 q0.9 -4.3 3.1 -8.7" stroke="#E2CA94" stroke-width="0.9" opacity="0.58"/>
<path d="M331.2 305.1 q-1.1 -6.9 -3.5 -13.9" stroke="#D8BC84" stroke-width="0.9" opacity="0.52"/>
<path d="M192.9 307.5 q3.2 -5.6 10.8 -11.1" stroke="#D8BC84" stroke-width="0.8" opacity="0.41"/>
<path d="M126.9 301.2 q2.0 -6.0 6.8 -11.9" stroke="#E2CA94" stroke-width="1.1" opacity="0.51"/>
<path d="M150.2 284.8 q0.5 -3.9 1.6 -7.7" stroke="#D8BC84" stroke-width="0.9" opacity="0.46"/>
<path d="M449.4 296.1 q-0.1 -7.9 -0.2 -15.9" stroke="#E2CA94" stroke-width="0.7" opacity="0.53"/>
<path d="M270.6 301.6 q-0.4 -5.7 -1.5 -11.4" stroke="#E2CA94" stroke-width="0.6" opacity="0.53"/>
<path d="M48.6 231.0 q1.2 -2.5 3.9 -4.9" stroke="#8C6C3C" stroke-width="1.0" opacity="0.54"/>
<path d="M38.4 250.3 q-2.0 -3.0 -6.7 -6.1" stroke="#7E5E32" stroke-width="0.7" opacity="0.50"/>
<path d="M131.2 241.5 q3.2 -5.3 10.8 -10.6" stroke="#8C6C3C" stroke-width="1.0" opacity="0.51"/>
<path d="M305.6 231.1 q-1.2 -5.7 -3.9 -11.4" stroke="#8C6C3C" stroke-width="1.1" opacity="0.31"/>
<path d="M394.7 290.9 q0.5 -4.1 1.5 -8.1" stroke="#D8BC84" stroke-width="0.8" opacity="0.56"/>
<path d="M404.9 229.1 q-0.3 -5.3 -1.0 -10.5" stroke="#E2CA94" stroke-width="0.6" opacity="0.56"/>
<path d="M421.6 203.9 q-0.2 -5.0 -0.6 -10.1" stroke="#E2CA94" stroke-width="1.0" opacity="0.40"/>
<path d="M440.3 220.8 q1.0 -2.7 3.5 -5.5" stroke="#E2CA94" stroke-width="0.9" opacity="0.55"/>
<path d="M122.9 218.4 q-2.1 -6.6 -7.2 -13.1" stroke="#D8BC84" stroke-width="0.7" opacity="0.57"/>
<path d="M104.4 301.5 q2.6 -3.9 8.8 -7.8" stroke="#E2CA94" stroke-width="0.9" opacity="0.46"/>
<path d="M403.5 249.7 q1.2 -2.2 4.1 -4.5" stroke="#7E5E32" stroke-width="0.9" opacity="0.52"/>
<path d="M109.5 251.9 q3.1 -4.7 10.4 -9.5" stroke="#7E5E32" stroke-width="0.7" opacity="0.51"/>
<path d="M261.5 245.4 q-1.2 -2.7 -4.2 -5.4" stroke="#8C6C3C" stroke-width="0.8" opacity="0.58"/>
<path d="M265.8 211.1 q2.4 -3.4 7.9 -6.9" stroke="#7E5E32" stroke-width="0.7" opacity="0.57"/>
<path d="M173.5 307.5 q-2.9 -6.3 -9.5 -12.6" stroke="#7E5E32" stroke-width="1.1" opacity="0.42"/>
<path d="M258.4 235.2 q-0.8 -2.3 -2.7 -4.6" stroke="#E2CA94" stroke-width="1.1" opacity="0.44"/>
<path d="M174.4 287.1 q1.6 -7.2 5.3 -14.4" stroke="#8C6C3C" stroke-width="1.1" opacity="0.49"/>
<path d="M256.4 296.6 q-0.9 -6.0 -3.1 -12.0" stroke="#D8BC84" stroke-width="0.8" opacity="0.59"/>
<path d="M115.3 309.0 q-1.3 -1.8 -4.4 -3.6" stroke="#E2CA94" stroke-width="0.7" opacity="0.45"/>
<path d="M55.8 293.7 q1.2 -5.8 4.0 -11.7" stroke="#E2CA94" stroke-width="1.1" opacity="0.50"/>
<path d="M336.6 200.2 q-0.2 -2.7 -0.7 -5.5" stroke="#7E5E32" stroke-width="0.8" opacity="0.47"/>
<path d="M4.2 246.6 q0.7 -7.4 2.4 -14.7" stroke="#D8BC84" stroke-width="0.6" opacity="0.36"/>
<path d="M84.6 293.2 q1.3 -2.2 4.3 -4.4" stroke="#7E5E32" stroke-width="0.9" opacity="0.52"/>
<path d="M451.4 275.6 q2.1 -2.9 7.2 -5.8" stroke="#E2CA94" stroke-width="0.6" opacity="0.55"/>
<path d="M463.1 212.4 q-1.6 -6.0 -5.3 -12.1" stroke="#D8BC84" stroke-width="0.8" opacity="0.56"/>
<path d="M10.4 203.1 q-0.2 -2.8 -0.7 -5.6" stroke="#8C6C3C" stroke-width="0.7" opacity="0.52"/>
<path d="M260.2 240.2 q-1.9 -6.7 -6.4 -13.5" stroke="#D8BC84" stroke-width="0.7" opacity="0.35"/>
<path d="M52.1 289.2 q-0.6 -3.0 -2.1 -6.0" stroke="#E2CA94" stroke-width="0.9" opacity="0.42"/>
<path d="M256.6 201.7 q-0.2 -2.8 -0.8 -5.6" stroke="#D8BC84" stroke-width="1.1" opacity="0.30"/>
<path d="M422.6 240.0 q2.3 -5.6 7.7 -11.1" stroke="#8C6C3C" stroke-width="0.8" opacity="0.44"/>
<path d="M19.6 309.3 q-3.5 -5.5 -11.6 -11.0" stroke="#D8BC84" stroke-width="1.1" opacity="0.48"/>
<path d="M85.4 207.8 q-0.5 -2.8 -1.8 -5.6" stroke="#E2CA94" stroke-width="0.8" opacity="0.32"/>
<path d="M356.1 208.3 q-0.4 -6.8 -1.3 -13.5" stroke="#D8BC84" stroke-width="0.7" opacity="0.43"/>
<path d="M439.7 211.9 q2.2 -3.8 7.4 -7.6" stroke="#E2CA94" stroke-width="0.8" opacity="0.60"/>
<path d="M346.9 283.1 q2.1 -6.1 7.0 -12.1" stroke="#7E5E32" stroke-width="0.9" opacity="0.40"/>
<path d="M48.4 283.2 q0.1 -6.4 0.2 -12.9" stroke="#D8BC84" stroke-width="0.7" opacity="0.36"/>
<path d="M122.2 250.8 q-0.1 -3.8 -0.5 -7.6" stroke="#D8BC84" stroke-width="0.9" opacity="0.33"/>
<path d="M192.6 260.1 q-0.6 -4.0 -2.0 -7.9" stroke="#D8BC84" stroke-width="0.7" opacity="0.50"/>
<path d="M105.1 244.9 q-0.5 -6.2 -1.6 -12.5" stroke="#D8BC84" stroke-width="0.6" opacity="0.32"/>
<path d="M90.6 229.5 q-0.8 -5.8 -2.5 -11.6" stroke="#8C6C3C" stroke-width="0.7" opacity="0.33"/>
<path d="M436.6 263.0 q-2.1 -3.5 -7.0 -7.0" stroke="#8C6C3C" stroke-width="0.7" opacity="0.32"/>
<path d="M206.4 273.9 q-0.9 -2.2 -2.8 -4.5" stroke="#E2CA94" stroke-width="1.0" opacity="0.54"/>
<path d="M35.4 289.8 q-1.1 -3.3 -3.7 -6.7" stroke="#7E5E32" stroke-width="0.8" opacity="0.51"/>
<path d="M173.1 279.8 q1.8 -2.6 6.1 -5.2" stroke="#8C6C3C" stroke-width="0.7" opacity="0.34"/>
<path d="M256.7 248.2 q1.5 -2.8 5.1 -5.6" stroke="#7E5E32" stroke-width="1.0" opacity="0.33"/>
<path d="M179.6 275.2 q-1.1 -1.7 -3.7 -3.4" stroke="#7E5E32" stroke-width="0.6" opacity="0.39"/>
<path d="M278.6 294.8 q0.4 -6.6 1.4 -13.2" stroke="#8C6C3C" stroke-width="1.1" opacity="0.49"/>
<path d="M447.4 263.4 q0.1 -3.6 0.2 -7.2" stroke="#8C6C3C" stroke-width="1.0" opacity="0.34"/>
<path d="M167.4 262.6 q1.0 -7.8 3.4 -15.5" stroke="#D8BC84" stroke-width="0.9" opacity="0.43"/>
<path d="M313.5 220.8 q-1.3 -5.0 -4.3 -10.0" stroke="#8C6C3C" stroke-width="1.0" opacity="0.46"/>
<path d="M117.5 303.7 q-0.7 -5.2 -2.4 -10.4" stroke="#7E5E32" stroke-width="0.7" opacity="0.55"/>
<path d="M15.0 228.8 q0.8 -4.0 2.7 -8.1" stroke="#8C6C3C" stroke-width="1.0" opacity="0.51"/>
<path d="M214.8 209.7 q0.7 -4.3 2.5 -8.6" stroke="#D8BC84" stroke-width="1.1" opacity="0.43"/>
<path d="M346.9 228.7 q-2.1 -2.9 -6.9 -5.8" stroke="#E2CA94" stroke-width="0.8" opacity="0.42"/>
<path d="M206.5 268.1 q2.7 -5.8 9.1 -11.7" stroke="#7E5E32" stroke-width="1.0" opacity="0.37"/>
<path d="M159.0 212.2 q1.7 -6.3 5.7 -12.5" stroke="#8C6C3C" stroke-width="0.7" opacity="0.36"/>
<path d="M423.1 204.8 q-0.6 -3.1 -1.8 -6.2" stroke="#8C6C3C" stroke-width="1.0" opacity="0.43"/>
<path d="M198.8 235.2 q-2.5 -6.6 -8.5 -13.2" stroke="#D8BC84" stroke-width="0.8" opacity="0.32"/>
<path d="M318.4 227.5 q-0.9 -2.2 -3.0 -4.5" stroke="#E2CA94" stroke-width="0.8" opacity="0.36"/>
<path d="M364.7 242.0 q1.3 -2.4 4.2 -4.7" stroke="#8C6C3C" stroke-width="0.9" opacity="0.60"/>
<path d="M466.5 310.5 q-1.5 -3.9 -5.0 -7.9" stroke="#E2CA94" stroke-width="1.0" opacity="0.33"/>
<path d="M151.5 214.2 q0.6 -2.5 2.0 -5.0" stroke="#D8BC84" stroke-width="0.6" opacity="0.50"/>
<path d="M288.4 232.9 q1.3 -2.9 4.3 -5.8" stroke="#D8BC84" stroke-width="0.7" opacity="0.48"/>
<path d="M271.2 236.1 q-0.5 -2.6 -1.7 -5.1" stroke="#E2CA94" stroke-width="0.9" opacity="0.34"/>
<path d="M100.4 234.9 q-0.7 -4.6 -2.3 -9.3" stroke="#D8BC84" stroke-width="0.7" opacity="0.60"/>
<path d="M113.5 295.9 q0.4 -3.8 1.2 -7.6" stroke="#8C6C3C" stroke-width="0.9" opacity="0.46"/>
<path d="M259.7 234.0 q1.1 -4.7 3.8 -9.4" stroke="#8C6C3C" stroke-width="1.1" opacity="0.32"/>
<path d="M179.5 225.5 q1.7 -5.2 5.7 -10.4" stroke="#8C6C3C" stroke-width="0.9" opacity="0.42"/>
<path d="M377.4 211.7 q1.0 -3.5 3.5 -7.1" stroke="#8C6C3C" stroke-width="1.1" opacity="0.56"/>
<path d="M146.6 297.6 q-2.7 -4.5 -8.9 -9.0" stroke="#E2CA94" stroke-width="0.7" opacity="0.30"/>
<path d="M193.7 251.0 q-1.2 -7.3 -4.1 -14.5" stroke="#7E5E32" stroke-width="1.1" opacity="0.35"/>
<path d="M241.0 255.3 q1.7 -3.6 5.5 -7.2" stroke="#D8BC84" stroke-width="0.7" opacity="0.42"/>
<path d="M400.2 267.4 q-1.3 -5.1 -4.4 -10.2" stroke="#E2CA94" stroke-width="0.9" opacity="0.51"/>
<path d="M398.1 241.0 q1.2 -7.7 4.0 -15.3" stroke="#D8BC84" stroke-width="0.8" opacity="0.55"/>
<path d="M159.8 246.7 q-1.2 -7.5 -3.8 -15.0" stroke="#8C6C3C" stroke-width="0.6" opacity="0.60"/>
<path d="M93.3 259.5 q-1.1 -4.1 -3.8 -8.1" stroke="#D8BC84" stroke-width="1.0" opacity="0.44"/>
<path d="M392.7 242.0 q-2.9 -4.3 -9.8 -8.6" stroke="#D8BC84" stroke-width="1.0" opacity="0.40"/>
<path d="M189.5 204.7 q1.7 -4.7 5.7 -9.4" stroke="#D8BC84" stroke-width="0.6" opacity="0.35"/>
<path d="M87.9 290.9 q1.1 -4.9 3.7 -9.8" stroke="#D8BC84" stroke-width="0.9" opacity="0.56"/>
<path d="M137.1 259.8 q1.6 -5.9 5.2 -11.8" stroke="#E2CA94" stroke-width="0.7" opacity="0.39"/>
<path d="M320.3 261.2 q1.7 -5.2 5.7 -10.3" stroke="#D8BC84" stroke-width="0.9" opacity="0.52"/>
<path d="M150.9 214.1 q-0.0 -7.2 -0.2 -14.4" stroke="#D8BC84" stroke-width="1.0" opacity="0.50"/>
<path d="M50.3 268.5 q1.1 -1.9 3.8 -3.8" stroke="#D8BC84" stroke-width="0.7" opacity="0.55"/>
<path d="M83.6 292.7 q-2.5 -3.5 -8.2 -6.9" stroke="#D8BC84" stroke-width="0.8" opacity="0.55"/>
<path d="M325.0 259.7 q-2.2 -6.2 -7.4 -12.5" stroke="#7E5E32" stroke-width="0.9" opacity="0.34"/>
<path d="M175.9 301.9 q0.6 -2.4 2.0 -4.8" stroke="#E2CA94" stroke-width="0.7" opacity="0.39"/>
<path d="M131.6 303.1 q2.8 -5.9 9.2 -11.8" stroke="#8C6C3C" stroke-width="0.9" opacity="0.59"/>
<path d="M261.0 200.6 q-0.6 -2.6 -2.1 -5.2" stroke="#7E5E32" stroke-width="0.6" opacity="0.58"/>
<path d="M260.6 268.6 q-2.6 -5.8 -8.7 -11.6" stroke="#8C6C3C" stroke-width="0.8" opacity="0.54"/>
<path d="M391.5 305.2 q-0.9 -3.4 -3.0 -6.8" stroke="#D8BC84" stroke-width="0.7" opacity="0.39"/>
<path d="M21.5 210.6 q1.5 -4.3 4.9 -8.5" stroke="#8C6C3C" stroke-width="0.9" opacity="0.45"/>
<path d="M12.5 284.4 q2.5 -5.1 8.3 -10.3" stroke="#7E5E32" stroke-width="0.8" opacity="0.35"/>
<path d="M234.2 302.2 q-2.7 -6.2 -8.9 -12.4" stroke="#D8BC84" stroke-width="0.8" opacity="0.36"/>
<path d="M458.1 223.5 q1.3 -7.4 4.2 -14.8" stroke="#D8BC84" stroke-width="0.8" opacity="0.54"/>
<path d="M44.5 230.9 q-0.1 -6.0 -0.4 -12.0" stroke="#8C6C3C" stroke-width="0.9" opacity="0.55"/>
<path d="M149.0 290.4 q-1.5 -6.8 -5.1 -13.7" stroke="#D8BC84" stroke-width="0.9" opacity="0.48"/>
<path d="M295.5 214.1 q-1.5 -6.3 -5.0 -12.6" stroke="#E2CA94" stroke-width="1.0" opacity="0.50"/>
<path d="M384.8 248.9 q2.7 -4.3 9.0 -8.5" stroke="#D8BC84" stroke-width="1.0" opacity="0.35"/>
<path d="M81.3 300.4 q0.7 -4.1 2.2 -8.2" stroke="#8C6C3C" stroke-width="0.8" opacity="0.34"/>
<path d="M86.4 264.7 q-0.1 -3.5 -0.3 -7.1" stroke="#D8BC84" stroke-width="0.8" opacity="0.45"/>
<path d="M395.0 201.9 q-2.4 -6.5 -7.8 -13.1" stroke="#E2CA94" stroke-width="1.0" opacity="0.49"/>
<path d="M48.1 248.8 q3.3 -4.6 11.0 -9.2" stroke="#D8BC84" stroke-width="1.1" opacity="0.35"/>
<path d="M163.7 211.7 q3.2 -4.5 10.6 -9.0" stroke="#D8BC84" stroke-width="0.9" opacity="0.35"/>
<path d="M259.9 282.1 q1.1 -2.5 3.5 -5.0" stroke="#E2CA94" stroke-width="0.7" opacity="0.36"/>
<path d="M120.7 293.4 q-1.3 -3.3 -4.3 -6.6" stroke="#E2CA94" stroke-width="0.8" opacity="0.44"/>
<path d="M175.4 288.3 q-2.5 -5.0 -8.3 -9.9" stroke="#D8BC84" stroke-width="1.0" opacity="0.33"/>
<path d="M353.9 250.7 q-2.4 -3.4 -7.9 -6.8" stroke="#D8BC84" stroke-width="0.7" opacity="0.31"/>
<path d="M357.3 246.1 q-0.9 -7.5 -2.9 -15.0" stroke="#7E5E32" stroke-width="0.8" opacity="0.49"/>
<path d="M381.4 283.8 q0.6 -6.1 1.9 -12.3" stroke="#8C6C3C" stroke-width="0.7" opacity="0.55"/>
<path d="M427.5 291.9 q-1.6 -2.5 -5.3 -5.0" stroke="#D8BC84" stroke-width="0.8" opacity="0.47"/>
<path d="M115.7 262.4 q-3.0 -5.3 -10.0 -10.6" stroke="#7E5E32" stroke-width="1.0" opacity="0.43"/>
<path d="M4.2 229.0 q-1.8 -4.2 -6.0 -8.5" stroke="#D8BC84" stroke-width="0.8" opacity="0.34"/>
<path d="M141.7 279.8 q-2.0 -5.6 -6.6 -11.2" stroke="#8C6C3C" stroke-width="0.9" opacity="0.50"/>
<path d="M10.3 249.5 q0.4 -4.2 1.5 -8.4" stroke="#7E5E32" stroke-width="0.6" opacity="0.31"/>
<path d="M37.3 204.8 q1.3 -3.6 4.2 -7.1" stroke="#D8BC84" stroke-width="0.7" opacity="0.52"/>
<path d="M32.2 304.9 q0.6 -2.4 2.1 -4.9" stroke="#7E5E32" stroke-width="1.0" opacity="0.48"/>
<path d="M300.5 282.9 q-2.8 -5.7 -9.4 -11.5" stroke="#8C6C3C" stroke-width="0.8" opacity="0.59"/>
<path d="M180.8 248.8 q1.7 -2.5 5.6 -5.0" stroke="#7E5E32" stroke-width="0.8" opacity="0.51"/>
<path d="M178.8 258.1 q1.9 -4.6 6.3 -9.2" stroke="#E2CA94" stroke-width="0.9" opacity="0.38"/>
<path d="M436.3 217.2 q0.5 -4.6 1.8 -9.1" stroke="#7E5E32" stroke-width="0.7" opacity="0.46"/>
<path d="M200.8 305.1 q-2.0 -6.6 -6.8 -13.2" stroke="#E2CA94" stroke-width="0.8" opacity="0.31"/>
<path d="M209.7 302.5 q0.4 -4.1 1.3 -8.2" stroke="#E2CA94" stroke-width="0.7" opacity="0.54"/>
<path d="M191.2 256.7 q2.2 -5.9 7.4 -11.9" stroke="#7E5E32" stroke-width="0.7" opacity="0.44"/>
<path d="M7.5 216.9 q-1.5 -2.7 -5.1 -5.4" stroke="#E2CA94" stroke-width="0.9" opacity="0.48"/>
<path d="M33.3 232.4 q-0.5 -7.8 -1.7 -15.6" stroke="#D8BC84" stroke-width="0.8" opacity="0.59"/>
<path d="M265.9 309.4 q0.9 -5.3 3.0 -10.5" stroke="#7E5E32" stroke-width="0.9" opacity="0.56"/>
<path d="M47.4 207.2 q0.6 -6.2 2.0 -12.5" stroke="#7E5E32" stroke-width="0.9" opacity="0.39"/>
<path d="M271.1 202.4 q-0.9 -4.8 -3.1 -9.5" stroke="#7E5E32" stroke-width="0.9" opacity="0.45"/>
<path d="M44.4 257.8 q-0.6 -4.3 -2.0 -8.5" stroke="#7E5E32" stroke-width="0.9" opacity="0.45"/>
<path d="M339.6 241.9 q1.9 -3.6 6.2 -7.3" stroke="#7E5E32" stroke-width="0.9" opacity="0.48"/>
<path d="M113.8 248.6 q2.2 -3.5 7.3 -7.0" stroke="#D8BC84" stroke-width="0.7" opacity="0.46"/>
<path d="M60.4 290.7 q-0.7 -2.3 -2.2 -4.7" stroke="#D8BC84" stroke-width="0.8" opacity="0.51"/>
<path d="M438.7 244.7 q0.6 -3.3 1.9 -6.7" stroke="#7E5E32" stroke-width="0.9" opacity="0.33"/>
<path d="M224.5 272.7 q-2.8 -4.3 -9.2 -8.5" stroke="#D8BC84" stroke-width="1.1" opacity="0.42"/>
<path d="M323.4 221.9 q0.4 -6.1 1.4 -12.3" stroke="#7E5E32" stroke-width="0.8" opacity="0.47"/>
<path d="M243.3 221.0 q3.4 -5.2 11.5 -10.3" stroke="#7E5E32" stroke-width="1.1" opacity="0.44"/>
<path d="M396.1 227.0 q1.5 -6.1 5.0 -12.2" stroke="#D8BC84" stroke-width="1.0" opacity="0.56"/>
<path d="M126.3 288.2 q-1.0 -4.8 -3.4 -9.7" stroke="#7E5E32" stroke-width="1.1" opacity="0.57"/>
<path d="M86.8 261.1 q-1.4 -2.6 -4.7 -5.1" stroke="#D8BC84" stroke-width="0.8" opacity="0.56"/>
<path d="M247.6 216.1 q2.5 -3.6 8.4 -7.2" stroke="#7E5E32" stroke-width="1.1" opacity="0.39"/>
<path d="M38.8 223.1 q3.3 -5.2 10.9 -10.4" stroke="#D8BC84" stroke-width="0.8" opacity="0.30"/>
<path d="M406.6 242.0 q1.1 -1.7 3.7 -3.4" stroke="#D8BC84" stroke-width="0.8" opacity="0.37"/>
<path d="M280.2 251.7 q0.9 -4.6 2.8 -9.2" stroke="#E2CA94" stroke-width="0.7" opacity="0.39"/>
<path d="M457.9 241.7 q3.1 -6.1 10.2 -12.2" stroke="#E2CA94" stroke-width="1.0" opacity="0.48"/>
<path d="M296.7 265.7 q-0.1 -7.4 -0.4 -14.7" stroke="#D8BC84" stroke-width="1.0" opacity="0.35"/>
<path d="M254.8 229.8 q-1.5 -4.0 -5.0 -8.0" stroke="#7E5E32" stroke-width="0.9" opacity="0.58"/>
<path d="M383.5 263.5 q1.8 -3.1 6.0 -6.2" stroke="#7E5E32" stroke-width="0.9" opacity="0.31"/>
<path d="M362.7 250 q-4.3 -24.9 -14.5 -49.7" stroke="#B89860" stroke-width="0.9" opacity="0.6"/>
<path d="M356.1 250 q3.3 -28.7 11.1 -57.5" stroke="#B89860" stroke-width="0.9" opacity="0.6"/>
<path d="M347.7 250 q-0.7 -19.3 -2.3 -38.7" stroke="#D8C08A" stroke-width="0.9" opacity="0.6"/>
<path d="M329.5 250 q1.8 -13.5 6.1 -27.0" stroke="#9AA868" stroke-width="0.9" opacity="0.6"/>
<path d="M330.1 250 q3.7 -27.9 12.2 -55.7" stroke="#D8C08A" stroke-width="0.9" opacity="0.6"/>
<path d="M332.5 250 q-4.8 -23.3 -16.0 -46.7" stroke="#B89860" stroke-width="0.9" opacity="0.6"/>
<path d="M356.7 250 q6.4 -18.9 21.2 -37.8" stroke="#9AA868" stroke-width="0.9" opacity="0.6"/>
<path d="M327.3 250 q6.2 -26.3 20.7 -52.5" stroke="#B89860" stroke-width="0.9" opacity="0.6"/>
<path d="M325.7 250 q-5.6 -19.1 -18.6 -38.1" stroke="#B89860" stroke-width="0.9" opacity="0.6"/>
<path d="M328.4 250 q3.5 -20.1 11.6 -40.2" stroke="#D8C08A" stroke-width="0.9" opacity="0.6"/>
<path d="M348.5 250 q6.3 -25.6 20.9 -51.2" stroke="#D8C08A" stroke-width="0.9" opacity="0.6"/>
<path d="M341.6 250 q-2.6 -22.6 -8.7 -45.2" stroke="#D8C08A" stroke-width="0.9" opacity="0.6"/>
<path d="M337.9 250 q2.1 -20.1 7.0 -40.2" stroke="#9AA868" stroke-width="0.9" opacity="0.6"/>
<path d="M333.9 250 q3.8 -18.6 12.6 -37.2" stroke="#D8C08A" stroke-width="0.9" opacity="0.6"/>
<path d="M359.1 250 q-8.7 -26.8 -28.9 -53.7" stroke="#B89860" stroke-width="0.9" opacity="0.6"/>
<path d="M358.5 250 q4.1 -29.3 13.8 -58.6" stroke="#9AA868" stroke-width="0.9" opacity="0.6"/>
<path d="M363.3 250 q-1.4 -16.3 -4.7 -32.6" stroke="#9AA868" stroke-width="0.9" opacity="0.6"/>
<path d="M327.6 250 q-3.8 -22.4 -12.6 -44.8" stroke="#9AA868" stroke-width="0.9" opacity="0.6"/>
<path d="M328.9 250 q0.2 -12.1 0.8 -24.1" stroke="#9AA868" stroke-width="0.9" opacity="0.6"/>
<path d="M357.0 250 q-6.8 -24.6 -22.6 -49.3" stroke="#9AA868" stroke-width="0.9" opacity="0.6"/>
<path d="M343.8 250 q-8.0 -24.6 -26.6 -49.3" stroke="#B89860" stroke-width="0.9" opacity="0.6"/>
<path d="M351.6 250 q-8.6 -27.6 -28.6 -55.1" stroke="#B89860" stroke-width="0.9" opacity="0.6"/>
<path d="M344.0 250 q1.2 -10.1 4.0 -20.1" stroke="#D8C08A" stroke-width="0.9" opacity="0.6"/>
<path d="M329.1 250 q-2.1 -19.4 -6.9 -38.7" stroke="#9AA868" stroke-width="0.9" opacity="0.6"/>
<path d="M338.3 250 q4.1 -22.3 13.8 -44.7" stroke="#9AA868" stroke-width="0.9" opacity="0.6"/>
<path d="M436.0 262 q-5.0 -26.5 -16.6 -53.0" stroke="#9AA868" stroke-width="0.9" opacity="0.6"/>
<path d="M437.2 262 q4.9 -23.2 16.3 -46.4" stroke="#9AA868" stroke-width="0.9" opacity="0.6"/>
<path d="M425.9 262 q2.1 -21.6 6.9 -43.2" stroke="#9AA868" stroke-width="0.9" opacity="0.6"/>
<path d="M441.3 262 q-0.4 -22.7 -1.2 -45.4" stroke="#9AA868" stroke-width="0.9" opacity="0.6"/>
<path d="M425.9 262 q-3.5 -23.3 -11.7 -46.6" stroke="#9AA868" stroke-width="0.9" opacity="0.6"/>
<path d="M451.6 262 q2.9 -11.2 9.8 -22.4" stroke="#D8C08A" stroke-width="0.9" opacity="0.6"/>
<path d="M430.5 262 q3.8 -13.3 12.6 -26.6" stroke="#9AA868" stroke-width="0.9" opacity="0.6"/>
<path d="M448.2 262 q-1.2 -14.5 -4.1 -29.1" stroke="#9AA868" stroke-width="0.9" opacity="0.6"/>
<path d="M444.6 262 q8.3 -25.4 27.6 -50.8" stroke="#D8C08A" stroke-width="0.9" opacity="0.6"/>
<path d="M458.1 262 q8.0 -25.6 26.5 -51.2" stroke="#D8C08A" stroke-width="0.9" opacity="0.6"/>
<path d="M458.1 262 q-1.2 -27.7 -4.0 -55.5" stroke="#D8C08A" stroke-width="0.9" opacity="0.6"/>
<path d="M442.3 262 q2.9 -13.5 9.6 -27.0" stroke="#B89860" stroke-width="0.9" opacity="0.6"/>
<path d="M430.8 262 q3.1 -10.4 10.4 -20.7" stroke="#B89860" stroke-width="0.9" opacity="0.6"/>
<path d="M453.5 262 q-3.8 -12.4 -12.7 -24.9" stroke="#D8C08A" stroke-width="0.9" opacity="0.6"/>
<path d="M457.1 262 q-1.5 -21.0 -5.2 -41.9" stroke="#D8C08A" stroke-width="0.9" opacity="0.6"/>
<path d="M435.2 262 q-1.4 -11.4 -4.7 -22.8" stroke="#B89860" stroke-width="0.9" opacity="0.6"/>
<path d="M455.1 262 q0.3 -10.8 1.1 -21.6" stroke="#B89860" stroke-width="0.9" opacity="0.6"/>
<path d="M452.8 262 q0.1 -12.9 0.2 -25.7" stroke="#D8C08A" stroke-width="0.9" opacity="0.6"/>
<path d="M452.4 262 q-5.8 -28.8 -19.2 -57.6" stroke="#D8C08A" stroke-width="0.9" opacity="0.6"/>
<path d="M456.5 262 q3.1 -11.1 10.3 -22.2" stroke="#B89860" stroke-width="0.9" opacity="0.6"/>
<path d="M450.9 262 q-7.1 -25.3 -23.5 -50.7" stroke="#9AA868" stroke-width="0.9" opacity="0.6"/>
<path d="M459.2 262 q0.4 -26.1 1.4 -52.3" stroke="#D8C08A" stroke-width="0.9" opacity="0.6"/>
<path d="M447.3 262 q4.7 -16.3 15.7 -32.5" stroke="#9AA868" stroke-width="0.9" opacity="0.6"/>
<path d="M437.9 262 q-5.8 -23.5 -19.4 -47.1" stroke="#B89860" stroke-width="0.9" opacity="0.6"/>
<path d="M444.6 262 q1.0 -13.7 3.4 -27.3" stroke="#B89860" stroke-width="0.9" opacity="0.6"/>
<path d="M182.3 214.5 Q175.8 122.3 139.4 82.7" stroke="#D8BA7C" stroke-width="0.8" opacity="0.51"/>
<path d="M41.0 219.4 Q37.2 125.3 15.4 84.9" stroke="#E0C48A" stroke-width="0.9" opacity="0.69"/>
<path d="M65.5 206.4 Q61.3 128.7 37.1 95.5" stroke="#D8BA7C" stroke-width="0.8" opacity="0.73"/>
<path d="M41.1 254.5 Q28.9 174.7 -40.1 140.5" stroke="#CCAA6A" stroke-width="1.0" opacity="0.71"/>
<path d="M105.5 227.0 Q95.5 162.7 39.3 135.1" stroke="#D8BA7C" stroke-width="1.0" opacity="0.55"/>
<path d="M95.5 227.2 Q90.9 149.0 65.0 115.5" stroke="#CCAA6A" stroke-width="0.7" opacity="0.55"/>
<path d="M86.7 207.0 Q77.9 125.7 27.8 90.8" stroke="#D8BA7C" stroke-width="1.1" opacity="0.62"/>
<path d="M116.9 222.8 Q113.3 121.1 92.7 77.5" stroke="#CCAA6A" stroke-width="0.7" opacity="0.56"/>
<path d="M108.4 229.7 Q97.3 150.1 34.6 116.0" stroke="#E0C48A" stroke-width="1.1" opacity="0.45"/>
<path d="M109.2 259.4 Q99.7 176.2 46.0 140.6" stroke="#CCAA6A" stroke-width="0.9" opacity="0.44"/>
<path d="M141.8 244.4 Q135.3 142.6 98.1 99.0" stroke="#CCAA6A" stroke-width="0.9" opacity="0.44"/>
<path d="M91.9 249.8 Q87.6 174.7 62.9 142.6" stroke="#E0C48A" stroke-width="0.9" opacity="0.74"/>
<path d="M62.2 255.3 Q57.9 165.4 33.3 126.8" stroke="#CCAA6A" stroke-width="1.1" opacity="0.68"/>
<path d="M83.9 232.2 Q79.6 148.3 55.3 112.4" stroke="#D8BA7C" stroke-width="0.9" opacity="0.41"/>
<path d="M199.3 243.7 Q193.0 151.4 157.1 111.8" stroke="#D8BA7C" stroke-width="0.7" opacity="0.74"/>
<path d="M75.4 222.5 Q68.0 142.1 25.8 107.6" stroke="#E0C48A" stroke-width="1.2" opacity="0.62"/>
<path d="M98.5 206.4 Q90.4 140.6 44.8 112.3" stroke="#E0C48A" stroke-width="1.1" opacity="0.67"/>
<path d="M189.8 239.7 Q182.9 152.7 144.1 115.4" stroke="#D8BA7C" stroke-width="1.2" opacity="0.61"/>
<path d="M126.8 225.5 Q116.7 152.0 58.9 120.5" stroke="#CCAA6A" stroke-width="1.1" opacity="0.41"/>
<path d="M119.9 230.7 Q115.0 139.9 86.9 101.0" stroke="#D8BA7C" stroke-width="0.9" opacity="0.67"/>
<path d="M182.3 214.2 Q173.4 118.4 123.2 77.4" stroke="#E0C48A" stroke-width="0.9" opacity="0.43"/>
<path d="M157.1 210.4 Q144.6 138.7 73.6 107.9" stroke="#D8BA7C" stroke-width="1.2" opacity="0.69"/>
<path d="M88.3 204.0 Q81.7 117.8 44.1 80.8" stroke="#D8BA7C" stroke-width="0.8" opacity="0.43"/>
<path d="M92.0 251.7 Q86.1 171.7 52.9 137.5" stroke="#CCAA6A" stroke-width="0.9" opacity="0.48"/>
<path d="M69.7 210.9 Q61.0 113.6 11.5 71.9" stroke="#E0C48A" stroke-width="1.2" opacity="0.67"/>
<path d="M61.5 242.9 Q56.0 145.8 24.8 104.2" stroke="#D8BA7C" stroke-width="0.8" opacity="0.74"/>
<path d="M147.5 231.9 Q135.1 142.1 64.6 103.6" stroke="#CCAA6A" stroke-width="0.9" opacity="0.62"/>
<path d="M91.0 200.6 Q82.1 108.6 31.2 69.1" stroke="#E0C48A" stroke-width="1.1" opacity="0.51"/>
<path d="M77.2 242.3 Q71.3 166.7 37.8 134.3" stroke="#CCAA6A" stroke-width="1.0" opacity="0.57"/>
<path d="M97.0 241.8 Q84.3 140.1 12.8 96.6" stroke="#D8BA7C" stroke-width="1.0" opacity="0.66"/>
<path d="M278.1 259.1 Q279.9 201.1 286.9 162.4" stroke="#C8A86C" stroke-width="0.7" opacity="0.62"/>
<path d="M259.8 270.0 Q254.2 219.5 232.0 185.9" stroke="#D4B67C" stroke-width="0.8" opacity="0.62"/>
<path d="M328.1 190.2 Q323.8 129.1 306.3 88.3" stroke="#C8A86C" stroke-width="1.1" opacity="0.57"/>
<path d="M399.3 189.0 Q395.5 138.5 380.4 104.8" stroke="#D4B67C" stroke-width="1.2" opacity="0.49"/>
<path d="M10.6 191.0 Q2.7 117.6 -28.7 68.7" stroke="#C8A86C" stroke-width="0.7" opacity="0.61"/>
<path d="M69.7 156.6 Q66.6 119.0 53.9 93.9" stroke="#C8A86C" stroke-width="1.1" opacity="0.59"/>
<path d="M434.6 199.1 Q440.2 139.5 462.8 99.8" stroke="#DCC28A" stroke-width="0.6" opacity="0.47"/>
<path d="M151.5 174.1 Q147.9 126.9 133.3 95.4" stroke="#C8A86C" stroke-width="0.8" opacity="0.53"/>
<path d="M450.2 163.6 Q451.9 119.9 458.5 90.7" stroke="#C8A86C" stroke-width="0.7" opacity="0.41"/>
<path d="M118.0 239.5 Q113.8 191.4 96.7 159.3" stroke="#DCC28A" stroke-width="0.6" opacity="0.50"/>
<path d="M294.1 185.1 Q294.1 151.3 294.0 128.8" stroke="#D4B67C" stroke-width="0.7" opacity="0.44"/>
<path d="M325.6 180.5 Q322.5 143.1 310.4 118.2" stroke="#D4B67C" stroke-width="1.0" opacity="0.43"/>
<path d="M252.8 283.5 Q252.8 240.6 252.7 211.9" stroke="#DCC28A" stroke-width="0.6" opacity="0.58"/>
<path d="M108.9 229.0 Q97.7 179.3 53.1 146.2" stroke="#C8A86C" stroke-width="0.7" opacity="0.40"/>
<path d="M249.3 170.0 Q244.5 103.1 225.1 58.5" stroke="#DCC28A" stroke-width="0.7" opacity="0.48"/>
<path d="M143.2 240.2 Q139.1 198.2 122.5 170.1" stroke="#D4B67C" stroke-width="1.2" opacity="0.47"/>
<path d="M456.1 293.3 Q456.7 258.4 458.9 235.2" stroke="#D4B67C" stroke-width="1.0" opacity="0.51"/>
<path d="M456.1 178.6 Q454.1 113.3 446.3 69.8" stroke="#D4B67C" stroke-width="0.7" opacity="0.62"/>
<path d="M341.4 194.6 Q340.3 133.6 336.0 93.0" stroke="#DCC28A" stroke-width="0.6" opacity="0.68"/>
<path d="M181.5 278.2 Q185.2 228.7 200.2 195.7" stroke="#C8A86C" stroke-width="1.1" opacity="0.64"/>
<path d="M88.5 170.5 Q78.4 135.5 37.9 112.2" stroke="#DCC28A" stroke-width="1.2" opacity="0.68"/>
<path d="M38.9 261.1 Q36.2 197.8 25.1 155.6" stroke="#C8A86C" stroke-width="1.2" opacity="0.58"/>
<path d="M119.5 297.6 Q110.2 251.4 73.0 220.6" stroke="#C8A86C" stroke-width="1.2" opacity="0.61"/>
<path d="M99.1 165.2 Q88.4 92.7 45.6 44.4" stroke="#C8A86C" stroke-width="0.8" opacity="0.66"/>
<path d="M205.2 260.0 Q211.0 208.6 234.4 174.4" stroke="#C8A86C" stroke-width="1.2" opacity="0.64"/>
<path d="M345.4 147.3 Q345.3 85.7 344.9 44.7" stroke="#C8A86C" stroke-width="0.7" opacity="0.62"/>
<path d="M190.7 290.7 Q195.8 239.5 216.5 205.4" stroke="#C8A86C" stroke-width="0.8" opacity="0.43"/>
<path d="M217.0 251.4 Q221.7 196.6 240.4 160.1" stroke="#DCC28A" stroke-width="0.9" opacity="0.41"/>
<path d="M244.4 163.6 Q241.2 134.7 228.3 115.3" stroke="#D4B67C" stroke-width="0.7" opacity="0.50"/>
<path d="M16.3 298.4 Q20.9 248.2 39.1 214.8" stroke="#DCC28A" stroke-width="0.7" opacity="0.49"/>
<path d="M354.3 248.9 Q356.4 217.1 365.1 196.0" stroke="#C8A86C" stroke-width="1.1" opacity="0.41"/>
<path d="M162.4 281.8 Q168.1 214.3 191.1 169.4" stroke="#D4B67C" stroke-width="1.0" opacity="0.50"/>
<path d="M55.4 268.6 Q55.6 226.6 56.6 198.5" stroke="#DCC28A" stroke-width="0.9" opacity="0.67"/>
<path d="M306.0 252.8 Q305.9 197.0 305.6 159.8" stroke="#C8A86C" stroke-width="0.9" opacity="0.40"/>
<path d="M201.0 212.5 Q201.7 165.1 204.7 133.6" stroke="#C8A86C" stroke-width="0.9" opacity="0.40"/>
<path d="M123.3 191.2 Q112.4 134.3 69.0 96.3" stroke="#C8A86C" stroke-width="0.9" opacity="0.56"/>
<path d="M173.2 181.1 Q177.7 156.3 195.7 139.8" stroke="#DCC28A" stroke-width="0.8" opacity="0.51"/>
<path d="M152.8 150.0 Q143.4 77.8 105.6 29.7" stroke="#DCC28A" stroke-width="1.1" opacity="0.67"/>
<path d="M209.7 160.1 Q213.4 126.0 228.2 103.3" stroke="#C8A86C" stroke-width="0.7" opacity="0.56"/>
<path d="M465.0 263.0 Q460.8 214.2 443.7 181.7" stroke="#D4B67C" stroke-width="0.9" opacity="0.43"/>
<path d="M342.0 216.6 Q345.4 161.2 359.3 124.4" stroke="#DCC28A" stroke-width="0.7" opacity="0.59"/>
<path d="M3.7 210.3 Q6.3 159.2 16.8 125.0" stroke="#DCC28A" stroke-width="0.7" opacity="0.47"/>
<path d="M270.4 195.9 Q274.2 148.1 289.2 116.3" stroke="#D4B67C" stroke-width="1.0" opacity="0.53"/>
<path d="M456.3 265.0 Q460.8 237.5 478.7 219.1" stroke="#D4B67C" stroke-width="0.7" opacity="0.49"/>
<path d="M294.2 249.8 Q288.6 207.3 266.2 178.9" stroke="#D4B67C" stroke-width="0.8" opacity="0.42"/>
<path d="M407.7 232.2 Q413.4 200.1 436.5 178.8" stroke="#C8A86C" stroke-width="0.8" opacity="0.56"/>
<path d="M130.1 274.6 Q127.2 242.1 115.5 220.5" stroke="#D4B67C" stroke-width="1.0" opacity="0.51"/>
<path d="M413.7 264.7 Q417.5 231.4 432.8 209.1" stroke="#C8A86C" stroke-width="0.8" opacity="0.52"/>
<path d="M187.1 273.2 Q186.2 200.4 182.6 151.9" stroke="#DCC28A" stroke-width="0.8" opacity="0.69"/>
<path d="M248.0 257.3 Q245.2 212.7 234.3 183.0" stroke="#D4B67C" stroke-width="0.7" opacity="0.67"/>
<path d="M471.3 280.9 Q472.5 229.2 477.1 194.7" stroke="#D4B67C" stroke-width="0.7" opacity="0.47"/>
<path d="M321.7 233.5 Q324.2 209.3 334.3 193.2" stroke="#C8A86C" stroke-width="0.7" opacity="0.69"/>
<path d="M43.2 158.8 Q41.0 118.7 32.4 92.0" stroke="#C8A86C" stroke-width="1.1" opacity="0.59"/>
<path d="M328.9 149.4 Q329.7 85.1 332.9 42.3" stroke="#DCC28A" stroke-width="0.7" opacity="0.37"/>
<path d="M77.6 184.4 Q69.8 131.9 39.0 96.8" stroke="#D4B67C" stroke-width="0.9" opacity="0.54"/>
<path d="M380.7 218.2 Q378.4 148.3 369.0 101.8" stroke="#D4B67C" stroke-width="0.8" opacity="0.62"/>
<path d="M369.3 235.1 Q372.2 172.8 384.1 131.3" stroke="#DCC28A" stroke-width="1.0" opacity="0.59"/>
<path d="M133.2 186.9 Q127.3 158.2 103.8 139.1" stroke="#C8A86C" stroke-width="0.9" opacity="0.58"/>
<path d="M160.3 186.3 Q164.7 128.5 182.3 90.0" stroke="#DCC28A" stroke-width="0.9" opacity="0.45"/>
<path d="M272.5 294.0 Q266.9 240.2 244.3 204.3" stroke="#C8A86C" stroke-width="0.9" opacity="0.52"/>
</g>
<g filter="url(#bl5)">
<path d="M70 196 C74 214 82 232 86 252 L87 272 L80 272 C76 254 70 236 64 212Z" fill="#5A3416" opacity="0.9"/>
<path d="M69 164 C62 174 61 195 63 208 L70 206 C68 192 70 178 74 168Z" fill="#4A2810"/>
<path d="M66 180 C66 166 80 152 100 149 L156 152 L204 155 L222 158 C228 152 232 145 236 135 L257 150 C257 165 253 178 247 188 C239 200 227 210 214 216 L186 219 L131 218 C118 215 106 214 96 216 C82 210 68 196 66 180Z" fill="url(#bodyg)"/>
<path d="M66 180 C70 166 80 156 92 152 C90 170 88 195 92 214 C80 208 68 196 66 180Z" fill="#A05A22" opacity="0.45"/>
<path d="M196 156 C210 158 222 156 232 146 L240 160 C236 178 228 196 214 210 C208 190 202 172 196 156Z" fill="#7A4A28" opacity="0.55"/>
<path d="M118 209 C140 207 165 209 195 212 L205 216 L186 219.5 L131 218.5 C125 216 120 212 118 209Z" fill="#B89070" opacity="0.9"/>
<path d="M116 207 C135 205.5 152 207.5 178 209" stroke="#E8D8B8" stroke-width="1.8" fill="none"/>
<path d="M204 156 C216 157 226 151 233 140 L240 124 L262 127 L259 152 C258 165 256 172 253 176 L240 177 C228 172 216 163 204 156Z" fill="#8A6C50"/>
<path d="M238 152 C244 154 252 154 258.5 152 C259 162 257 170 253.5 174 C248 175 242 174 239 170 C238 164 238 158 238 152Z" fill="#E8E0D4"/>
<path d="M237 173 L254 173 C252 185 245 198 236 206 C230 210 222 214 212 216 L206 216 C216 206 228 190 237 173Z" fill="#2A1A0C"/>
<path d="M72 190 C84 204 100 210 114 211 C106 222 97 232 91 244 L91 290 L82 292 L81 244 C78 230 75 214 72 200Z" fill="url(#legg)"/>
<path d="M96 232 C100 224 108 216 116 210" stroke="#D8C0A0" stroke-width="1.2" fill="none" opacity="0.7"/>
<path d="M184 212 L198 213 C196 235 195 262 195 296 L189 298 C189 270 188 240 184 212Z" fill="url(#legg)"/>
<path d="M197 212 L210 212 C207 230 205 250 204 290 L199 291 C199 262 198 236 197 212Z" fill="url(#legg)" opacity="0.85"/>
<path d="M201 228 C203 245 203 265 202 288" stroke="#8A8A88" stroke-width="1.5" fill="none" opacity="0.5"/>
<path d="M72 164 C80 156 90 150.5 100 149.5 C130 150.5 156 152 180 153 L204 155 L222 158" stroke="#2A1406" stroke-width="3" fill="none"/>
</g>
<g fill="#F0E8D8">
<ellipse cx="80.0" cy="157.5" rx="1.5" ry="1.2"/>
<ellipse cx="85.4" cy="155.6" rx="1.5" ry="1.2"/>
<ellipse cx="90.8" cy="153.7" rx="1.5" ry="1.2"/>
<ellipse cx="96.2" cy="151.8" rx="1.5" ry="1.2"/>
<ellipse cx="101.6" cy="150.6" rx="1.5" ry="1.2"/>
<ellipse cx="107.0" cy="150.8" rx="1.5" ry="1.2"/>
<ellipse cx="112.4" cy="151.1" rx="1.5" ry="1.2"/>
<ellipse cx="117.8" cy="151.3" rx="1.5" ry="1.2"/>
<ellipse cx="123.2" cy="151.5" rx="1.5" ry="1.2"/>
<ellipse cx="128.6" cy="151.8" rx="1.5" ry="1.2"/>
<ellipse cx="134.0" cy="152.0" rx="1.5" ry="1.2"/>
<ellipse cx="139.4" cy="152.3" rx="1.5" ry="1.2"/>
<ellipse cx="144.8" cy="152.5" rx="1.5" ry="1.2"/>
<ellipse cx="150.2" cy="152.8" rx="1.5" ry="1.2"/>
<ellipse cx="155.6" cy="153.0" rx="1.5" ry="1.2"/>
<ellipse cx="161.0" cy="153.2" rx="1.5" ry="1.2"/>
<ellipse cx="166.4" cy="153.5" rx="1.5" ry="1.2"/>
<ellipse cx="171.8" cy="153.7" rx="1.5" ry="1.2"/>
<ellipse cx="177.2" cy="154.0" rx="1.5" ry="1.2"/>
<ellipse cx="182.6" cy="154.2" rx="1.5" ry="1.2"/>
<ellipse cx="188.0" cy="154.5" rx="1.5" ry="1.2"/>
<ellipse cx="193.4" cy="154.7" rx="1.5" ry="1.2"/>
<ellipse cx="198.8" cy="154.9" rx="1.5" ry="1.2"/>
<ellipse cx="204.2" cy="155.2" rx="1.5" ry="1.2"/>
<ellipse cx="209.6" cy="155.4" rx="1.5" ry="1.2"/>
<ellipse cx="215.0" cy="155.7" rx="1.5" ry="1.2"/>
<ellipse cx="220.4" cy="155.9" rx="1.5" ry="1.2"/>
<ellipse cx="90.2" cy="159.9" rx="2.4" ry="1.3" opacity="0.76"/>
<ellipse cx="103.5" cy="157.1" rx="2.1" ry="1.2" opacity="0.90"/>
<ellipse cx="116.7" cy="157.5" rx="2.1" ry="1.5" opacity="0.92"/>
<ellipse cx="127.1" cy="159.7" rx="2.4" ry="1.3" opacity="0.79"/>
<ellipse cx="139.7" cy="158.3" rx="2.0" ry="1.2" opacity="0.85"/>
<ellipse cx="150.2" cy="158.5" rx="2.2" ry="1.4" opacity="0.85"/>
<ellipse cx="163.4" cy="157.4" rx="2.1" ry="1.5" opacity="0.97"/>
<ellipse cx="177.1" cy="160.1" rx="2.2" ry="1.4" opacity="0.89"/>
<ellipse cx="187.6" cy="158.0" rx="2.0" ry="1.5" opacity="0.83"/>
<ellipse cx="199.2" cy="159.2" rx="2.0" ry="1.4" opacity="0.95"/>
<ellipse cx="212.4" cy="160.5" rx="2.1" ry="1.2" opacity="0.94"/>
<ellipse cx="225.2" cy="158.5" rx="2.1" ry="1.2" opacity="0.96"/>
<ellipse cx="79.2" cy="165.4" rx="2.1" ry="1.4" opacity="0.94"/>
<ellipse cx="92.8" cy="165.4" rx="2.3" ry="1.3" opacity="0.97"/>
<ellipse cx="105.8" cy="166.2" rx="2.1" ry="1.3" opacity="0.97"/>
<ellipse cx="119.0" cy="165.2" rx="2.0" ry="1.3" opacity="0.99"/>
<ellipse cx="129.2" cy="167.2" rx="2.2" ry="1.4" opacity="0.88"/>
<ellipse cx="140.8" cy="166.2" rx="2.0" ry="1.5" opacity="0.78"/>
<ellipse cx="151.4" cy="166.7" rx="2.3" ry="1.4" opacity="0.92"/>
<ellipse cx="165.1" cy="164.2" rx="1.9" ry="1.3" opacity="0.94"/>
<ellipse cx="175.7" cy="166.1" rx="2.4" ry="1.2" opacity="0.88"/>
<ellipse cx="189.3" cy="167.0" rx="2.1" ry="1.3" opacity="0.82"/>
<ellipse cx="203.2" cy="167.1" rx="2.3" ry="1.3" opacity="0.93"/>
<ellipse cx="215.1" cy="167.2" rx="2.1" ry="1.5" opacity="0.92"/>
<ellipse cx="226.9" cy="166.3" rx="2.4" ry="1.4" opacity="0.99"/>
<ellipse cx="73.6" cy="173.9" rx="2.2" ry="1.5" opacity="0.79"/>
<ellipse cx="84.9" cy="173.9" rx="2.4" ry="1.3" opacity="1.00"/>
<ellipse cx="97.5" cy="171.2" rx="2.0" ry="1.2" opacity="0.89"/>
<ellipse cx="108.8" cy="172.0" rx="2.2" ry="1.2" opacity="0.98"/>
<ellipse cx="122.2" cy="173.2" rx="2.2" ry="1.3" opacity="0.90"/>
<ellipse cx="133.6" cy="174.9" rx="2.5" ry="1.4" opacity="0.96"/>
<ellipse cx="143.9" cy="171.5" rx="2.1" ry="1.2" opacity="0.86"/>
<ellipse cx="157.8" cy="174.3" rx="2.5" ry="1.3" opacity="0.81"/>
<ellipse cx="167.9" cy="172.1" rx="1.9" ry="1.4" opacity="0.83"/>
<ellipse cx="180.6" cy="173.2" rx="2.3" ry="1.3" opacity="0.93"/>
<ellipse cx="193.4" cy="173.9" rx="2.2" ry="1.3" opacity="0.82"/>
<ellipse cx="203.5" cy="172.9" rx="2.3" ry="1.3" opacity="0.97"/>
<ellipse cx="217.0" cy="174.4" rx="2.4" ry="1.3" opacity="0.79"/>
<ellipse cx="71.0" cy="181.9" rx="2.0" ry="1.2" opacity="0.84"/>
<ellipse cx="82.3" cy="180.4" rx="2.0" ry="1.5" opacity="0.83"/>
<ellipse cx="96.0" cy="179.3" rx="2.1" ry="1.3" opacity="0.99"/>
<ellipse cx="108.3" cy="181.3" rx="1.9" ry="1.4" opacity="0.93"/>
<ellipse cx="122.3" cy="181.7" rx="2.0" ry="1.3" opacity="1.00"/>
<ellipse cx="134.4" cy="181.8" rx="2.1" ry="1.2" opacity="0.99"/>
<ellipse cx="145.5" cy="180.2" rx="2.1" ry="1.4" opacity="0.98"/>
<ellipse cx="159.3" cy="181.5" rx="2.1" ry="1.4" opacity="0.75"/>
<ellipse cx="170.9" cy="181.8" rx="2.1" ry="1.3" opacity="0.90"/>
<ellipse cx="181.9" cy="180.8" rx="2.3" ry="1.2" opacity="0.98"/>
<ellipse cx="192.2" cy="180.8" rx="2.1" ry="1.2" opacity="0.77"/>
<ellipse cx="206.1" cy="181.2" rx="2.2" ry="1.4" opacity="0.99"/>
<ellipse cx="74.1" cy="186.1" rx="2.2" ry="1.5" opacity="0.93"/>
<ellipse cx="86.8" cy="188.4" rx="2.1" ry="1.4" opacity="0.96"/>
<ellipse cx="97.6" cy="188.4" rx="1.9" ry="1.4" opacity="0.89"/>
<ellipse cx="108.2" cy="188.7" rx="2.2" ry="1.3" opacity="0.85"/>
<ellipse cx="120.6" cy="186.7" rx="1.9" ry="1.2" opacity="0.93"/>
<ellipse cx="131.1" cy="186.0" rx="2.4" ry="1.5" opacity="0.97"/>
<ellipse cx="141.8" cy="185.0" rx="2.4" ry="1.4" opacity="0.84"/>
<ellipse cx="151.9" cy="186.7" rx="2.0" ry="1.4" opacity="1.00"/>
<ellipse cx="162.7" cy="185.3" rx="2.3" ry="1.2" opacity="0.81"/>
<ellipse cx="174.5" cy="188.9" rx="2.1" ry="1.3" opacity="0.87"/>
<ellipse cx="185.1" cy="186.6" rx="2.3" ry="1.3" opacity="0.95"/>
<ellipse cx="195.8" cy="185.4" rx="2.3" ry="1.3" opacity="0.98"/>
<ellipse cx="206.3" cy="188.0" rx="2.3" ry="1.3" opacity="0.78"/>
<ellipse cx="81.0" cy="193.9" rx="2.2" ry="1.4" opacity="0.90"/>
<ellipse cx="92.7" cy="192.7" rx="2.2" ry="1.4" opacity="0.97"/>
<ellipse cx="106.7" cy="194.2" rx="2.1" ry="1.3" opacity="0.91"/>
<ellipse cx="119.7" cy="193.0" rx="2.3" ry="1.5" opacity="0.85"/>
<ellipse cx="133.4" cy="193.7" rx="2.3" ry="1.5" opacity="0.80"/>
<ellipse cx="144.8" cy="195.9" rx="1.9" ry="1.3" opacity="0.87"/>
<ellipse cx="157.8" cy="194.5" rx="2.5" ry="1.4" opacity="0.75"/>
<ellipse cx="168.1" cy="192.1" rx="2.2" ry="1.2" opacity="0.88"/>
<ellipse cx="180.6" cy="192.8" rx="2.4" ry="1.3" opacity="0.99"/>
<ellipse cx="192.0" cy="194.5" rx="2.2" ry="1.3" opacity="0.94"/>
<ellipse cx="202.0" cy="193.0" rx="2.1" ry="1.5" opacity="0.88"/>
<ellipse cx="85.2" cy="201.4" rx="2.4" ry="1.2" opacity="0.94"/>
<ellipse cx="96.8" cy="201.1" rx="2.2" ry="1.3" opacity="1.00"/>
<ellipse cx="110.4" cy="202.7" rx="2.3" ry="1.4" opacity="0.79"/>
<ellipse cx="120.6" cy="202.3" rx="2.3" ry="1.4" opacity="0.83"/>
<ellipse cx="131.6" cy="202.7" rx="2.2" ry="1.2" opacity="0.84"/>
<ellipse cx="143.0" cy="199.3" rx="2.5" ry="1.5" opacity="0.95"/>
<ellipse cx="153.1" cy="200.7" rx="2.0" ry="1.4" opacity="0.95"/>
<ellipse cx="166.2" cy="202.2" rx="2.0" ry="1.2" opacity="0.77"/>
<ellipse cx="179.6" cy="202.3" rx="2.2" ry="1.3" opacity="0.96"/>
<ellipse cx="190.1" cy="200.3" rx="1.9" ry="1.5" opacity="0.85"/>
<ellipse cx="95.2" cy="207.3" rx="2.5" ry="1.4" opacity="0.98"/>
<ellipse cx="109.1" cy="205.3" rx="2.4" ry="1.3" opacity="0.83"/>
</g>
<g fill="none" stroke-linecap="round" filter="url(#bl3)">
<path d="M241 114 C232 108 221 99 216 92 C210 84 208 72 208.5 60 C209 50 212 40 213.5 35.6" stroke="#AC8660" stroke-width="3.6"/>
<path d="M209 52 C210 44 212 39 213.5 35.6" stroke="#E2D2BC" stroke-width="2.6"/>
<path d="M217.9 89 C220 80 222 72 223.2 67.4" stroke="#AC8660" stroke-width="2.8"/>
<path d="M260 117 C266 112 272 108 278 106 C286 102 291 98 294 94 C299 86 301 80 301.5 72 C302 62 302.5 54 302.7 48.9" stroke="#AC8660" stroke-width="3.6"/>
<path d="M302.2 60 C302.5 54 302.6 51 302.7 48.9" stroke="#E2D2BC" stroke-width="2.6"/>
<path d="M288.6 98 C286 90 284.5 80 284.2 74.5" stroke="#AC8660" stroke-width="2.8"/>
<path d="M272.7 110 C275 104 277 99 278.9 95.7" stroke="#AC8660" stroke-width="2.6"/>
</g>
<g filter="url(#bl3)">
<path d="M240 119 C232 110 224 107 221.5 109 C222 119 229 127 238 129Z" fill="#8A6A50"/>
<path d="M237 121 C231 114 226 111.5 224.5 112.5 C225.5 119 230.5 124 236 126Z" fill="#4A3424"/>
<path d="M261 120 C268 112 276 109.5 280.5 111.5 C279.5 121 272.5 128.5 263.5 129.5Z" fill="#8A6A50"/>
<path d="M263 122 C268 116 274 113.5 278 114 C277 120 272 125.5 265 126.5Z" fill="#4A3424"/>
<path d="M236 126 C240 119 258 119 264 126 C264 134 260 140 256.5 146 C255.5 150.5 253 153.5 249 153.5 C245 153.5 243 150.5 242 146 C239 140 235 134 236 126Z" fill="#BC9C78"/>
<path d="M237.5 124 C244 118.5 256 118.5 262.5 124.5 C259 130 254.5 134 250 135 C245 133.5 240.5 129.5 237.5 124Z" fill="#6E5440"/>
<ellipse cx="241" cy="134" rx="3" ry="2.5" fill="#D2B894"/>
<ellipse cx="258.5" cy="134.5" rx="3" ry="2.5" fill="#D2B894"/>
<ellipse cx="240.5" cy="132" rx="1.7" ry="1.5" fill="#2A1A10"/>
<ellipse cx="259.5" cy="132.5" rx="1.7" ry="1.5" fill="#2A1A10"/>
<ellipse cx="249" cy="147.5" rx="5.2" ry="4.6" fill="#3E2E26"/>
<path d="M243.5 151.5 C246 154 252 154 254.5 151.5" stroke="#D8C8B0" stroke-width="1" fill="none"/>
</g>
</g></svg>
<svg class="a" style="left:107px;top:802px;overflow:hidden" width="68" height="45" viewBox="0 0 472 312" preserveAspectRatio="none"><use href="#deerimg"/></svg>
<svg class="a" style="left:0;top:0;width:0;height:0"><defs><filter id="gray" color-interpolation-filters="sRGB"><feColorMatrix type="matrix" values="0.3 0.59 0.11 0 0  0.3 0.59 0.11 0 0  0.3 0.59 0.11 0 0  0 0 0 1 0"/><feComponentTransfer><feFuncR type="linear" slope="1.8" intercept="-0.28"/><feFuncG type="linear" slope="1.8" intercept="-0.28"/><feFuncB type="linear" slope="1.8" intercept="-0.28"/></feComponentTransfer></filter></defs></svg>
<svg class="a" style="left:103px;top:666px;overflow:hidden" width="73" height="49" viewBox="0 0 472 312" preserveAspectRatio="none"><g filter="url(#gray)"><use href="#deerimg"/></g></svg>
<svg class="a" style="left:129px;top:671px;overflow:hidden" width="25" height="22" viewBox="178 35 151 133" preserveAspectRatio="none"><use href="#deerimg"/></svg>
<!-- DEER END -->

<!-- STATUS BAR content -->
<div class="a" style="left:0;top:993px;width:1917px;height:25px;background:#F3F3F3"></div>
<div class="a" style="left:0;top:992px;width:1917px;height:1px;background:#D6D6D6"></div>
<div class="a" style="left:13px;top:999.5px;font-size:13px;line-height:16px;color:#444">Slide 6 of 9</div>
<div class="a" style="left:142.4px;top:999.5px;font-size:12.7px;line-height:16px;color:#444">English (India)</div>
<div class="a" style="left:266.5px;top:999.5px;font-size:12.6px;line-height:16px;color:#262626;font-weight:bold">Accessibility: Investigate</div>
<div class="a" style="left:1306px;top:999.5px;font-size:13px;line-height:16px;color:#444">Notes</div>
<div class="a" style="left:1387.4px;top:999.5px;font-size:12.8px;line-height:16px;color:#444">Comments</div>
<div class="a" style="left:1851.5px;top:999.5px;font-size:12.6px;line-height:16px;color:#444">85%</div>
<svg class="a" style="left:0;top:990px" width="1917" height="28" viewBox="0 990 1917 28" fill="none" stroke="#595959" stroke-width="1">
 <!-- notes page icon -->
 <path d="M103.5 1000.5 Q108 999.5 112 1001 Q116 999.5 120.5 1000.5 V1012.5 Q116 1011.5 112 1013 Q108 1011.5 103.5 1012.5Z M112 1001 V1013"/>
 <path d="M114 1010 L119.5 1003.5 L121 1005 L115.5 1011.5 H114Z" fill="#F3F3F3"/>
 <!-- accessibility -->
 <path d="M251 1001.5 A7 7 0 1 0 258 1011" stroke-dasharray="2.2 1.3" stroke-width="1.3"/>
 <path d="M251 999 V1006 M248.5 1003.5 L251 1006 L253.5 1003.5" stroke-width="1.2"/>
 <path d="M254 1007 L262 1015.5 M262 1007 L254 1015.5" stroke="#262626" stroke-width="1.8"/>
 <!-- Notes -->
 <path d="M1287.5 1005.5 H1300.5 M1287.5 1008.5 H1300.5 M1287.5 1011.5 H1300.5 M1289 1013.5 H1299" stroke-width="1"/>
 <path d="M1290 1003.5 L1294 999.5 L1298 1003.5Z" fill="#595959" stroke="none"/>
 <!-- Comments -->
 <path d="M1367 999.5 H1382 Q1384 999.5 1384 1001.5 V1008.5 Q1384 1010.5 1382 1010.5 H1373 L1369.5 1014 V1010.5 H1367 Q1365.5 1010.5 1365.5 1008.5 V1001.5 Q1365.5 999.5 1367 999.5Z" fill="#595959"/>
 <!-- normal view -->
 <rect x="1489.5" y="999" width="16.5" height="15.5"/><path d="M1492.5 999 V1014.5 M1494.5 1001.5 H1503.5 V1008 H1494.5Z M1492.5 1011 H1506"/>
 <!-- slide sorter -->
 <rect x="1538.5" y="999.5" width="6.5" height="5.5"/><rect x="1548.5" y="999.5" width="6.5" height="5.5"/>
 <rect x="1538.5" y="1008.5" width="6.5" height="5.5"/><rect x="1548.5" y="1008.5" width="6.5" height="5.5"/>
 <!-- reading -->
 <path d="M1589 1000.5 H1597 V1013.5 H1589Z M1597 1000.5 H1605.5 V1013.5 H1597 M1591 1003.5 H1595 M1591 1006 H1595 M1591 1008.5 H1595 M1599 1003.5 H1603.5 M1599 1006 H1603.5 M1599 1008.5 H1603.5 M1597 1013.5 V1015"/>
 <!-- slideshow -->
 <path d="M1639 999.5 H1656 M1640.5 999.5 V1006.5 H1654.5 V999.5 M1647.5 1006.5 V1013.5 M1644 1013.5 H1651 M1642.5 1002.5 H1652.5"/>
 <!-- zoom -->
 <path d="M1680 1007.5 H1689.5 M1696 1007.5 H1821 M1758.5 1003.5 V1011.5 M1827 1007.5 H1836.5 M1831.7 1002.8 V1012.2"/>
 <rect x="1746" y="999.5" width="6" height="14" fill="#444" stroke="none"/>
 <!-- fit -->
 <rect x="1895.5" y="999.5" width="13" height="13.5"/>
 <path d="M1898 1002 L1901 1005 M1906 1002 L1903 1005 M1898 1010.5 L1901 1007.5 M1906 1010.5 L1903 1007.5" />
</svg>




</body></html>
